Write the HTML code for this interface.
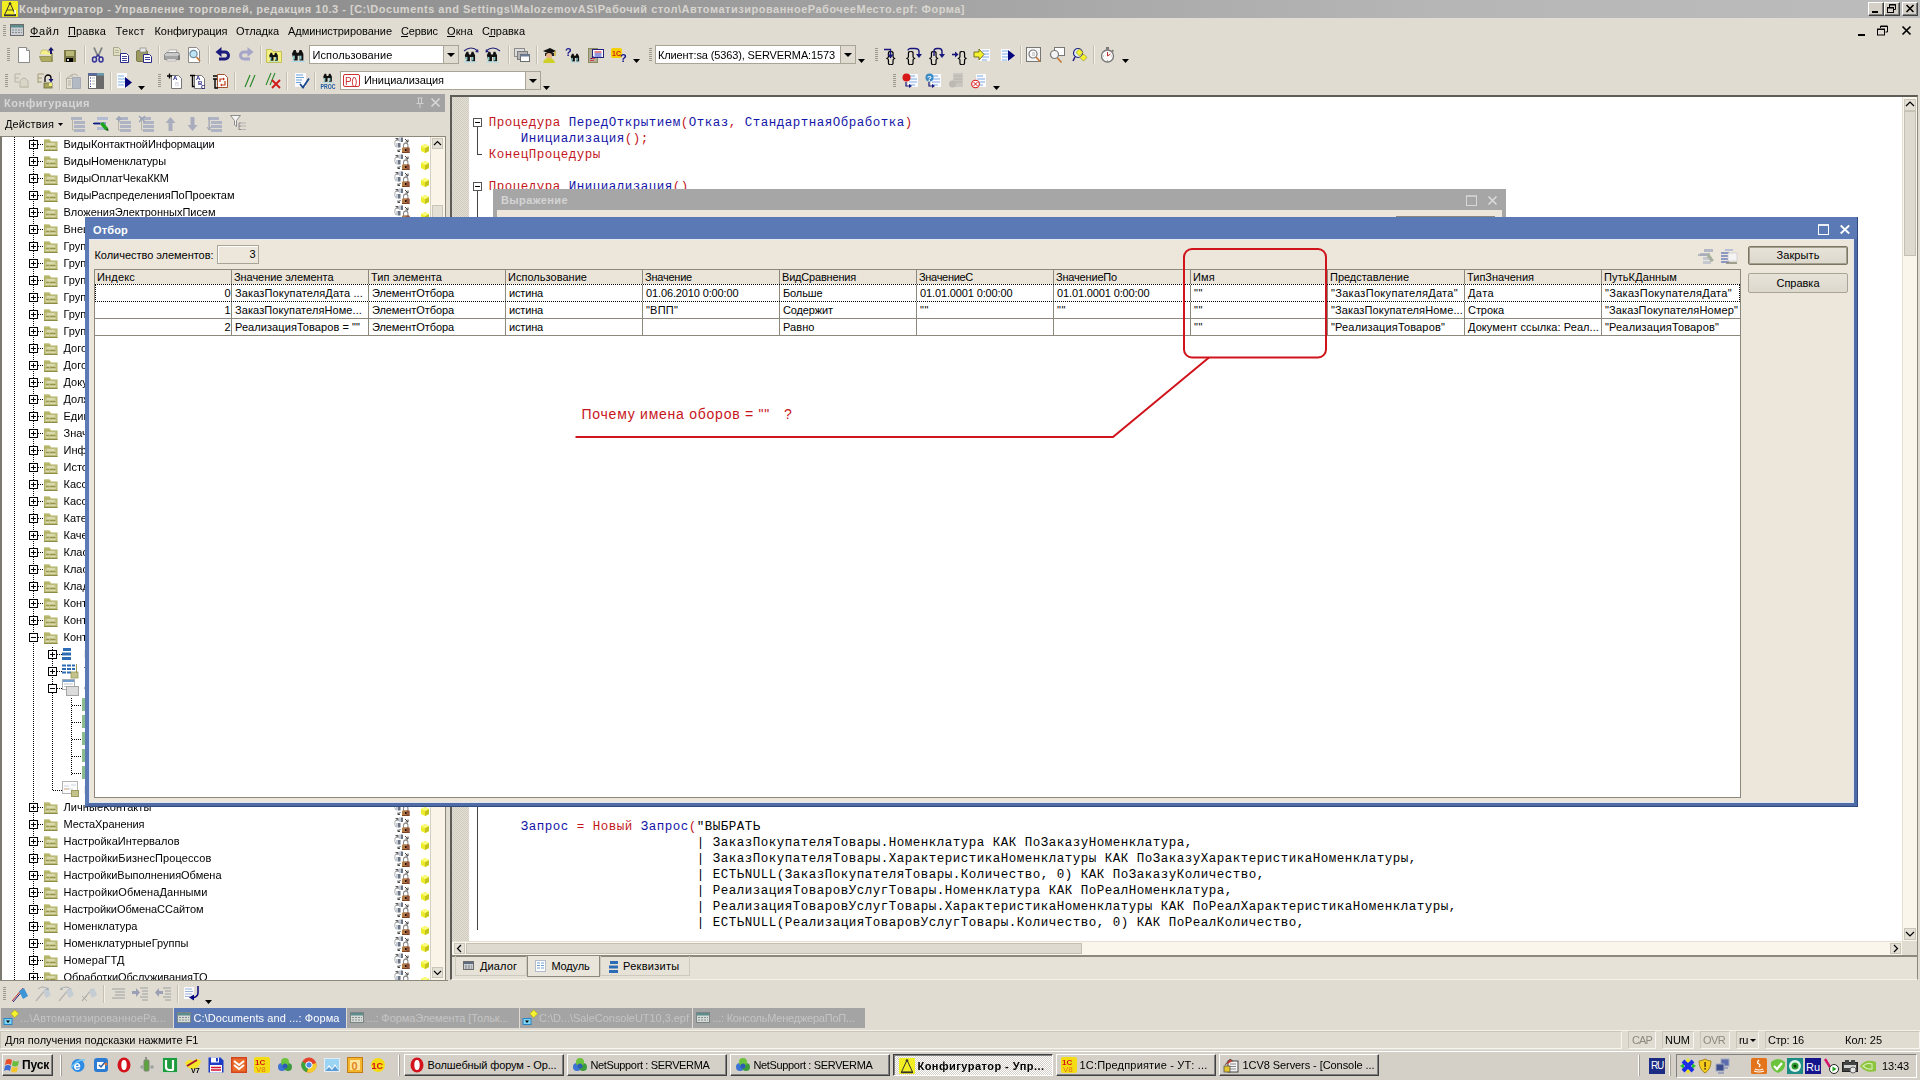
<!DOCTYPE html>
<html lang="ru"><head><meta charset="utf-8"><title>Конфигуратор</title><style>
html,body{margin:0;padding:0;}
body{width:1920px;height:1080px;overflow:hidden;position:relative;background:#e1dcd1;font-family:"Liberation Sans",sans-serif;font-size:11px;}
div,span.t,svg{position:absolute;box-sizing:border-box;}
body{opacity:0.9999;}
span.t{white-space:pre;display:block;}
svg{overflow:visible;}
.mono{font-family:"Liberation Mono",monospace;}
</style></head><body>
<div style="left:0px;top:0px;width:1920px;height:18px;background:linear-gradient(to right,#878787 0%,#9a9a9a 35%,#b6b6b6 75%,#bcbcbc 100%);"></div>
<svg style="left:2px;top:1px;" width="16" height="16" viewBox="0 0 16 16"><rect width="16" height="16" rx="1" fill="#f2ee22"/><path d="M8,2L2.500,14h11z" fill="none" stroke="#333" stroke-width="1"/><circle cx="8" cy="2.500" r="1.300" fill="#333"/><path d="M2,14.500h12" stroke="#333" stroke-width="1.400"/><path d="M5,9h6" stroke="#333" stroke-width=".8"/><rect x="12" y="9" width="2" height="4" fill="#fff" opacity=".8"/></svg>
<span class="t" style="top:1.5px;height:15px;line-height:15px;color:#d8d5cf;left:19px;font-weight:bold;letter-spacing:0.504px;">Конфигуратор - Управление торговлей, редакция 10.3 - [C:\Documents and Settings\MalozemovAS\Рабочий стол\АвтоматизированноеРабочееМесто.epf: Форма]</span>
<div style="left:1868px;top:2px;width:16px;height:14px;background:#d4d0c8;border:1px solid;border-color:#fff #404040 #404040 #fff;box-shadow:inset -1px -1px 0 #808080;"></div>
<div style="left:1872px;top:11px;width:6px;height:2px;background:#000;"></div>
<div style="left:1884px;top:2px;width:16px;height:14px;background:#d4d0c8;border:1px solid;border-color:#fff #404040 #404040 #fff;box-shadow:inset -1px -1px 0 #808080;"></div>
<svg style="left:1887px;top:4px;" width="10" height="10" viewBox="0 0 10 10"><path d="M2.500,3V0.500h6v5H6.500" fill="none" stroke="#000"/><path d="M2,1h7" stroke="#000"/><rect x="0.500" y="3.500" width="6" height="5" fill="none" stroke="#000"/><path d="M0,4h7" stroke="#000"/></svg>
<div style="left:1902px;top:2px;width:16px;height:14px;background:#d4d0c8;border:1px solid;border-color:#fff #404040 #404040 #fff;box-shadow:inset -1px -1px 0 #808080;"></div>
<svg style="left:1906px;top:5px;" width="8" height="7" viewBox="0 0 8 7"><path d="M0.500,0l7,7M7.500,0l-7,7" stroke="#000" stroke-width="1.600"/></svg>
<svg style="left:3px;top:25px;" width="3" height="12" viewBox="0 0 3 12"><rect x="0" y="0" width="3" height="1" fill="#9c988c"/><rect x="0" y="2" width="3" height="1" fill="#9c988c"/><rect x="0" y="4" width="3" height="1" fill="#9c988c"/><rect x="0" y="6" width="3" height="1" fill="#9c988c"/><rect x="0" y="8" width="3" height="1" fill="#9c988c"/><rect x="0" y="10" width="3" height="1" fill="#9c988c"/></svg>
<svg style="left:10px;top:24px;" width="14" height="12" viewBox="0 0 14 12"><rect x="0.500" y="0.500" width="13" height="11" fill="#c9cfd4" stroke="#6c6c6c"/><rect x="1" y="1" width="12" height="2.500" fill="#5c8c8c"/><path d="M2,6h10M2,8.500h10" stroke="#8c8c8c" stroke-dasharray="2 1"/></svg>
<span class="t" style="top:24px;height:15px;line-height:15px;left:30px;letter-spacing:0.588px;">Файл</span>
<div style="left:30px;top:36px;width:10px;height:1px;background:#000;"></div>
<span class="t" style="top:24px;height:15px;line-height:15px;left:68px;letter-spacing:0.138px;">Правка</span>
<div style="left:68px;top:36px;width:8px;height:1px;background:#000;"></div>
<span class="t" style="top:24px;height:15px;line-height:15px;left:115.5px;letter-spacing:0.359px;">Текст</span>
<span class="t" style="top:24px;height:15px;line-height:15px;left:154.5px;letter-spacing:-0.069px;">Конфигурация</span>
<span class="t" style="top:24px;height:15px;line-height:15px;left:236px;letter-spacing:-0.069px;">Отладка</span>
<span class="t" style="top:24px;height:15px;line-height:15px;left:288px;letter-spacing:-0.053px;">Администрирование</span>
<span class="t" style="top:24px;height:15px;line-height:15px;left:401px;letter-spacing:-0.112px;">Сервис</span>
<div style="left:401px;top:36px;width:7px;height:1px;background:#000;"></div>
<span class="t" style="top:24px;height:15px;line-height:15px;left:447px;letter-spacing:0.109px;">Окна</span>
<div style="left:447px;top:36px;width:8px;height:1px;background:#000;"></div>
<span class="t" style="top:24px;height:15px;line-height:15px;left:482px;letter-spacing:-0.022px;">Справка</span>
<div style="left:489px;top:36px;width:6px;height:1px;background:#000;"></div>
<div style="left:1858px;top:34px;width:7px;height:2px;background:#000;"></div>
<svg style="left:1877px;top:25px;" width="11" height="11" viewBox="0 0 11 11"><path d="M3.500,3V1h7v6H8.500" fill="none" stroke="#000"/><path d="M3,1.500h8" stroke="#000"/><rect x="0.500" y="4" width="7" height="6" fill="none" stroke="#000"/><path d="M0,4.500h8" stroke="#000"/></svg>
<svg style="left:1902px;top:26px;" width="9" height="9" viewBox="0 0 9 9"><path d="M0.500,0.500l8,8M8.500,0.500l-8,8" stroke="#000" stroke-width="1.700"/></svg>
<svg style="left:7px;top:48px;" width="3" height="14" viewBox="0 0 3 14"><rect x="0" y="0" width="3" height="1" fill="#9c988c"/><rect x="0" y="2" width="3" height="1" fill="#9c988c"/><rect x="0" y="4" width="3" height="1" fill="#9c988c"/><rect x="0" y="6" width="3" height="1" fill="#9c988c"/><rect x="0" y="8" width="3" height="1" fill="#9c988c"/><rect x="0" y="10" width="3" height="1" fill="#9c988c"/><rect x="0" y="12" width="3" height="1" fill="#9c988c"/></svg>
<svg style="left:16px;top:47px;" width="16" height="16" viewBox="0 0 16 16"><path d="M2.5,0.5h8l3,3v12h-11z" fill="#fff" stroke="#8a8a8a"/><path d="M10.5,0.5v3h3" fill="#eee" stroke="#8a8a8a"/></svg>
<svg style="left:39px;top:47px;" width="16" height="16" viewBox="0 0 16 16"><path d="M1,7l2,-4h5l1,2h3v3" fill="#f4f08a" stroke="#b9b56a" stroke-width=".8"/><path d="M0.5,9.5h11l2,5h-11z" fill="#b0ac62" stroke="#8d8a4a" stroke-width=".8"/><path d="M13,14V6" stroke="#8d8a4a" stroke-width="1.5"/><path d="M12,7V2" stroke="#16166e" stroke-width="2"/><path d="M9,3.5l3,-3.5l3,3.5z" fill="#16166e"/></svg>
<svg style="left:63px;top:47px;" width="16" height="16" viewBox="0 0 16 16"><rect x="1" y="3" width="12" height="12" fill="#7c7a48"/><rect x="3" y="4" width="8" height="5" fill="#b9b877"/><rect x="3" y="11" width="7" height="4" fill="#000"/><rect x="4" y="12" width="2" height="2" fill="#ddd"/></svg>
<svg style="left:90px;top:47px;" width="16" height="16" viewBox="0 0 16 16"><path d="M4,0.5l4,9M12,0.5l-4,9" stroke="#7d8080" stroke-width="1.8" fill="none"/><ellipse cx="4.5" cy="12.5" rx="2" ry="2.5" fill="none" stroke="#33339c" stroke-width="1.5"/><ellipse cx="11" cy="12.5" rx="2" ry="2.5" fill="none" stroke="#33339c" stroke-width="1.5"/><path d="M6,10l2,-2l2,2" stroke="#33339c" stroke-width="1.4" fill="none"/></svg>
<svg style="left:113px;top:47px;" width="16" height="16" viewBox="0 0 16 16"><path d="M0.5,0.5h5l2,2v6h-7z" fill="#e0dfc4" stroke="#a9a88a"/><path d="M2,3.5h4M2,5.5h4" stroke="#a9a88a" stroke-width=".8"/><path d="M7.5,6.5h6l2,2v7h-8z" fill="#fff" stroke="#2a2a8a"/><path d="M9,9.5h5M9,11.5h5M9,13.5h5" stroke="#2a2a8a" stroke-width=".9"/></svg>
<svg style="left:136px;top:47px;" width="16" height="16" viewBox="0 0 16 16"><rect x="0.5" y="3.5" width="11" height="11" rx="1.5" fill="#9c9a62" stroke="#7c7a48"/><rect x="4" y="1" width="6" height="4" fill="#e8e8e8" stroke="#888" stroke-width=".7"/><path d="M7.5,7.5h6l2,2v6h-8z" fill="#fff" stroke="#2a2a8a"/><path d="M9,10.5h5M9,12.5h5" stroke="#2a2a8a" stroke-width=".9"/></svg>
<svg style="left:164px;top:47px;" width="16" height="16" viewBox="0 0 16 16"><path d="M3,6l2,-3h8l-1,3z" fill="#fff" stroke="#999" stroke-width=".7"/><path d="M0.5,7.5l2,-2h12l1,2v5h-15z" fill="#c9c9c9" stroke="#8c8c8c"/><rect x="1" y="9" width="13" height="3" fill="#a4a4a4"/><path d="M14,8l2,1.5v3l-2,1" fill="#777"/><rect x="3" y="12" width="9" height="2" fill="#eee" stroke="#999" stroke-width=".5"/></svg>
<svg style="left:187px;top:47px;" width="16" height="16" viewBox="0 0 16 16"><path d="M1.5,0.5h8l3,3v12h-11z" fill="#fff" stroke="#8a8a8a"/><circle cx="6.5" cy="7" r="3.6" fill="#bfe4f4" stroke="#6a8ea6" stroke-width="1.2"/><path d="M9.5,10l3.5,4" stroke="#c87a3a" stroke-width="1.8"/></svg>
<svg style="left:215px;top:47px;" width="16" height="16" viewBox="0 0 16 16"><path d="M5,5h5a3.5,3.5 0 0 1 0,7h-6" fill="none" stroke="#1c1c7c" stroke-width="3"/><path d="M0.5,5l6,-5v10z" fill="#1c1c7c"/></svg>
<svg style="left:238px;top:47px;" width="16" height="16" viewBox="0 0 16 16"><path d="M11,5h-5a3.5,3.5 0 0 0 0,7h6" fill="none" stroke="#a6a6c8" stroke-width="3"/><path d="M15.5,5l-6,-5v10z" fill="#a6a6c8"/></svg>
<svg style="left:266px;top:47px;" width="16" height="16" viewBox="0 0 16 16"><path d="M0.5,2.5h5l1.5,2h8.5v11h-15z" fill="#f5f17e" stroke="#c2be5a"/><g transform="translate(2.5,5) scale(0.72)"><path d="M1,5l2,-4h2l1,3h2l1,-3h2l2,4v7h-4v-5h-2v5h-4z" fill="#111"/><rect x="2" y="7" width="2" height="4" fill="#8cc"/><rect x="9" y="7" width="2" height="4" fill="#8cc"/><path d="M0,13h15" stroke="#9de" stroke-width="1"/></g></svg>
<svg style="left:290px;top:47px;" width="16" height="16" viewBox="0 0 16 16"><g transform="translate(1,2) scale(0.95)"><path d="M1,5l2,-4h2l1,3h2l1,-3h2l2,4v7h-4v-5h-2v5h-4z" fill="#111"/><rect x="2" y="7" width="2" height="4" fill="#8cc"/><rect x="9" y="7" width="2" height="4" fill="#8cc"/><path d="M0,13h15" stroke="#9de" stroke-width="1"/></g></svg>
<svg style="left:463px;top:47px;" width="16" height="16" viewBox="0 0 16 16"><g transform="translate(1,4) scale(0.85)"><path d="M1,5l2,-4h2l1,3h2l1,-3h2l2,4v7h-4v-5h-2v5h-4z" fill="#111"/><rect x="2" y="7" width="2" height="4" fill="#8cc"/><rect x="9" y="7" width="2" height="4" fill="#8cc"/><path d="M0,13h15" stroke="#9de" stroke-width="1"/></g><path d="M1,4q7,-6 14,0" fill="none" stroke="#23237c" stroke-width="1.1"/><path d="M15.5,5.5l-3.5,-0.5l3,-3z" fill="#23237c"/></svg>
<svg style="left:485px;top:47px;" width="16" height="16" viewBox="0 0 16 16"><g transform="translate(1,4) scale(0.85)"><path d="M1,5l2,-4h2l1,3h2l1,-3h2l2,4v7h-4v-5h-2v5h-4z" fill="#111"/><rect x="2" y="7" width="2" height="4" fill="#8cc"/><rect x="9" y="7" width="2" height="4" fill="#8cc"/><path d="M0,13h15" stroke="#9de" stroke-width="1"/></g><path d="M1,4q7,-6 14,0" fill="none" stroke="#23237c" stroke-width="1.1"/><path d="M0.5,5.5l3.5,-0.5l-3,-3z" fill="#23237c"/></svg>
<svg style="left:514px;top:47px;" width="16" height="16" viewBox="0 0 16 16"><rect x="0.5" y="1.5" width="10" height="8" fill="#dcdcdc" stroke="#8c8c8c"/><rect x="3.5" y="4.5" width="10" height="8" fill="#b4b4b4" stroke="#7c7c7c"/><rect x="6.5" y="7.5" width="9" height="7" fill="#fff" stroke="#6c6c6c"/><rect x="6.5" y="7.5" width="9" height="2" fill="#6c7c9c"/></svg>
<svg style="left:541px;top:47px;" width="16" height="16" viewBox="0 0 16 16"><path d="M2,4l7,-3l6,3l-6,3z" fill="#111"/><path d="M4,6v3h9v-3" fill="#222"/><circle cx="8" cy="9" r="3" fill="#e8b48a"/><path d="M2,16q1,-5 6,-5q5,0 6,5z" fill="#cfcf2a"/><path d="M14,4v5" stroke="#c8a000" stroke-width="1"/></svg>
<svg style="left:565px;top:47px;" width="16" height="16" viewBox="0 0 16 16"><text x="0" y="9" font-size="11" font-weight="bold" font-family="Liberation Sans,sans-serif" fill="#16168c">?</text><g transform="translate(5,6) scale(0.7)"><path d="M1,5l2,-4h2l1,3h2l1,-3h2l2,4v7h-4v-5h-2v5h-4z" fill="#111"/><rect x="2" y="7" width="2" height="4" fill="#8cc"/><rect x="9" y="7" width="2" height="4" fill="#8cc"/><path d="M0,13h15" stroke="#9de" stroke-width="1"/></g></svg>
<svg style="left:588px;top:47px;" width="16" height="16" viewBox="0 0 16 16"><rect x="0.500" y="1.500" width="9" height="14" fill="#b0ae94" stroke="#8c8a5c"/><path d="M2,11.500h5M2,13.500h4" stroke="#e04060" stroke-width="1"/><rect x="4.500" y="2.500" width="11" height="8" fill="#fff" stroke="#23237c"/><path d="M6.500,5h7" stroke="#d02030" stroke-width="1.100"/><path d="M6.500,7h7M6.500,9h7" stroke="#2030c0" stroke-width="1"/><path d="M3,12l2.500,-2.500" stroke="#23237c"/></svg>
<svg style="left:611px;top:47px;" width="16" height="16" viewBox="0 0 16 16"><rect x="0" y="1" width="11" height="10" rx="2" fill="#f6d000"/><text x="1" y="9" font-size="7" font-weight="bold" font-family="Liberation Sans,sans-serif" fill="#d02010">1C</text><text x="9" y="15" font-size="11" font-weight="bold" font-family="Liberation Sans,sans-serif" fill="#16168c">?</text></svg>
<svg style="left:84px;top:46px;" width="2" height="18" viewBox="0 0 2 18"><rect x="0" y="0" width="1" height="18" fill="#c4bfb2"/><rect x="1" y="0" width="1" height="18" fill="#f4f1ea"/></svg>
<svg style="left:158px;top:46px;" width="2" height="18" viewBox="0 0 2 18"><rect x="0" y="0" width="1" height="18" fill="#c4bfb2"/><rect x="1" y="0" width="1" height="18" fill="#f4f1ea"/></svg>
<svg style="left:208px;top:46px;" width="2" height="18" viewBox="0 0 2 18"><rect x="0" y="0" width="1" height="18" fill="#c4bfb2"/><rect x="1" y="0" width="1" height="18" fill="#f4f1ea"/></svg>
<svg style="left:260px;top:46px;" width="2" height="18" viewBox="0 0 2 18"><rect x="0" y="0" width="1" height="18" fill="#c4bfb2"/><rect x="1" y="0" width="1" height="18" fill="#f4f1ea"/></svg>
<svg style="left:508px;top:46px;" width="2" height="18" viewBox="0 0 2 18"><rect x="0" y="0" width="1" height="18" fill="#c4bfb2"/><rect x="1" y="0" width="1" height="18" fill="#f4f1ea"/></svg>
<svg style="left:536px;top:46px;" width="2" height="18" viewBox="0 0 2 18"><rect x="0" y="0" width="1" height="18" fill="#c4bfb2"/><rect x="1" y="0" width="1" height="18" fill="#f4f1ea"/></svg>
<div style="left:309px;top:45px;width:150px;height:19px;background:#fff;border:1px solid #a9a596;"></div>
<div style="left:443px;top:46px;width:15px;height:17px;background:#e1dcd1;border-left:1px solid #a9a596;"></div>
<svg style="left:447px;top:52.5px;" width="8" height="4" viewBox="0 0 8 4"><polygon points="0,0 8,0 4.0,4" fill="#000"/></svg>
<span class="t" style="top:47.5px;height:15px;line-height:15px;left:312.5px;letter-spacing:0.107px;">Использование</span>
<svg style="left:633px;top:59px;" width="7" height="4" viewBox="0 0 7 4"><polygon points="0,0 7,0 3.5,4" fill="#000"/></svg>
<svg style="left:649px;top:48px;" width="3" height="14" viewBox="0 0 3 14"><rect x="0" y="0" width="3" height="1" fill="#9c988c"/><rect x="0" y="2" width="3" height="1" fill="#9c988c"/><rect x="0" y="4" width="3" height="1" fill="#9c988c"/><rect x="0" y="6" width="3" height="1" fill="#9c988c"/><rect x="0" y="8" width="3" height="1" fill="#9c988c"/><rect x="0" y="10" width="3" height="1" fill="#9c988c"/><rect x="0" y="12" width="3" height="1" fill="#9c988c"/></svg>
<div style="left:655px;top:45px;width:201px;height:19px;background:#fff;border:1px solid #a9a596;"></div>
<div style="left:840px;top:46px;width:15px;height:17px;background:#e1dcd1;border-left:1px solid #a9a596;"></div>
<svg style="left:844px;top:52.5px;" width="8" height="4" viewBox="0 0 8 4"><polygon points="0,0 8,0 4.0,4" fill="#000"/></svg>
<span class="t" style="top:47.5px;height:15px;line-height:15px;left:658px;letter-spacing:-0.126px;">Клиент:sa (5363), SERVERMA:1573</span>
<svg style="left:858px;top:59px;" width="7" height="4" viewBox="0 0 7 4"><polygon points="0,0 7,0 3.5,4" fill="#000"/></svg>
<svg style="left:875px;top:48px;" width="3" height="14" viewBox="0 0 3 14"><rect x="0" y="0" width="3" height="1" fill="#9c988c"/><rect x="0" y="2" width="3" height="1" fill="#9c988c"/><rect x="0" y="4" width="3" height="1" fill="#9c988c"/><rect x="0" y="6" width="3" height="1" fill="#9c988c"/><rect x="0" y="8" width="3" height="1" fill="#9c988c"/><rect x="0" y="10" width="3" height="1" fill="#9c988c"/><rect x="0" y="12" width="3" height="1" fill="#9c988c"/></svg>
<svg style="left:883px;top:47px;" width="16" height="16" viewBox="0 0 16 16"><text x="3" y="14.500" font-size="15" font-family="Liberation Sans,sans-serif" fill="#000" letter-spacing="-0.500">{}</text><path d="M1,2.500h6.500v6" fill="none" stroke="#16167c" stroke-width="1.400"/><path d="M4.500,7.500h6l-3,4z" fill="#16167c"/></svg>
<svg style="left:906px;top:47px;" width="16" height="16" viewBox="0 0 16 16"><text x="0" y="14.500" font-size="15" font-family="Liberation Sans,sans-serif" fill="#000" letter-spacing="-0.500">{}</text><path d="M2,3.500q0,-2 3,-2h4q4,0 4,3v3" fill="none" stroke="#16167c" stroke-width="1.400"/><path d="M10,7h6l-3,4z" fill="#16167c"/></svg>
<svg style="left:929px;top:47px;" width="16" height="16" viewBox="0 0 16 16"><text x="0" y="14.500" font-size="15" font-family="Liberation Sans,sans-serif" fill="#000" letter-spacing="-0.500">{}</text><path d="M5,9v-5q0,-2.500 3,-2.500h2q3,0 3,3v3" fill="none" stroke="#16167c" stroke-width="1.400"/><path d="M10,7h6l-3,4z" fill="#16167c"/></svg>
<svg style="left:952px;top:47px;" width="16" height="16" viewBox="0 0 16 16"><text x="5.5" y="14.500" font-size="15" font-family="Liberation Sans,sans-serif" fill="#000" letter-spacing="-0.500">{}</text><path d="M0,7.500h4" stroke="#16167c" stroke-width="1.600"/><path d="M3,4.500l3.500,3l-3.500,3z" fill="#16167c"/></svg>
<svg style="left:974px;top:47px;" width="16" height="16" viewBox="0 0 16 16"><rect x="5" y="2" width="11" height="12" fill="#fbfbff"/><path d="M8,4h7M8,7h7M8,10h7M8,13h5" stroke="#7cace4" stroke-width="1.100"/><path d="M0,5h5v-3l5,5.500l-5,5.500v-3h-5z" fill="#f6f230" stroke="#55550a" stroke-width=".8"/></svg>
<svg style="left:1000px;top:47px;" width="16" height="16" viewBox="0 0 16 16"><rect x="1" y="2" width="9" height="12" fill="#fbfbff"/><path d="M2,4h6M2,7h7M2,10h7M2,13h5" stroke="#7cace4" stroke-width="1.100"/><path d="M8,3l7,5.500l-7,5.500z" fill="#06067c"/></svg>
<svg style="left:1026px;top:47px;" width="16" height="16" viewBox="0 0 16 16"><rect x="0.500" y="0.500" width="14" height="14" fill="#f4f4f4" stroke="#777"/><circle cx="7" cy="7" r="4" fill="#fff" stroke="#777" stroke-width="1.200"/><path d="M6,6h3M6,8h3" stroke="#999" stroke-width=".8"/><path d="M10,10l4,4.500" stroke="#c87a3a" stroke-width="1.800"/></svg>
<svg style="left:1049px;top:47px;" width="16" height="16" viewBox="0 0 16 16"><rect x="5.500" y="0.500" width="10" height="8" fill="#fff" stroke="#777"/><circle cx="5.500" cy="7.500" r="4" fill="#f4f4f4" stroke="#777" stroke-width="1.200"/><path d="M8.500,11l4,4.500" stroke="#c87a3a" stroke-width="1.800"/></svg>
<svg style="left:1072px;top:47px;" width="16" height="16" viewBox="0 0 16 16"><circle cx="6" cy="6" r="4.500" fill="#e0f0f8" stroke="#23237c" stroke-width="1.200"/><rect x="5" y="3" width="5" height="5" fill="#f6f230" stroke="#8a8a1a" stroke-width=".6" transform="rotate(45 7.500 5.500)"/><rect x="9" y="8" width="5" height="5" fill="#f6f230" stroke="#8a8a1a" stroke-width=".6" transform="rotate(45 11.500 10.500)"/><path d="M3,10l-2,4" stroke="#23237c" stroke-width="1.500"/></svg>
<svg style="left:1100px;top:47px;" width="16" height="16" viewBox="0 0 16 16"><circle cx="7.500" cy="9" r="6" fill="#fbfbfb" stroke="#777" stroke-width="1.300"/><rect x="6" y="0" width="3" height="2.500" fill="#777"/><path d="M12,3l1.500,1.500" stroke="#777" stroke-width="1.500"/><path d="M7.500,9v-4M7.500,9l3,-2" stroke="#c03030" stroke-width="1"/><path d="M3,9h1M11,9h1M7.500,13v1" stroke="#aaa"/></svg>
<svg style="left:1020px;top:46px;" width="2" height="18" viewBox="0 0 2 18"><rect x="0" y="0" width="1" height="18" fill="#c4bfb2"/><rect x="1" y="0" width="1" height="18" fill="#f4f1ea"/></svg>
<svg style="left:1093px;top:46px;" width="2" height="18" viewBox="0 0 2 18"><rect x="0" y="0" width="1" height="18" fill="#c4bfb2"/><rect x="1" y="0" width="1" height="18" fill="#f4f1ea"/></svg>
<svg style="left:1122px;top:59px;" width="7" height="4" viewBox="0 0 7 4"><polygon points="0,0 7,0 3.5,4" fill="#000"/></svg>
<svg style="left:5px;top:74px;" width="3" height="14" viewBox="0 0 3 14"><rect x="0" y="0" width="3" height="1" fill="#9c988c"/><rect x="0" y="2" width="3" height="1" fill="#9c988c"/><rect x="0" y="4" width="3" height="1" fill="#9c988c"/><rect x="0" y="6" width="3" height="1" fill="#9c988c"/><rect x="0" y="8" width="3" height="1" fill="#9c988c"/><rect x="0" y="10" width="3" height="1" fill="#9c988c"/><rect x="0" y="12" width="3" height="1" fill="#9c988c"/></svg>
<svg style="left:14px;top:73px;" width="16" height="16" viewBox="0 0 16 16"><path d="M1,1h6M1,1v8M1,5h4M1,9h4" stroke="#b9b5a6" fill="none"/><path d="M6,8q4,-6 8,0v6h-8z" fill="#d9d6c8" stroke="#b9b5a6"/><path d="M5,13h9l1,2h-9z" fill="#c6c3b0"/></svg>
<svg style="left:37px;top:73px;" width="16" height="16" viewBox="0 0 16 16"><path d="M1,1h6M1,1v9M1,5h4M1,9h4" stroke="#a29e70" fill="none"/><path d="M8,9v-4a3,3 0 0 1 6,0v2" fill="none" stroke="#000" stroke-width="1.3"/><path d="M11.5,6h5l-2.500,3.500z" fill="#16167c"/><rect x="7" y="10" width="8" height="5" fill="#a6a45c" stroke="#6c6a3a" stroke-width=".8"/><rect x="12" y="10" width="3" height="3" fill="#f2ee7a"/></svg>
<svg style="left:65px;top:73px;" width="16" height="16" viewBox="0 0 16 16"><path d="M2,5l3,-2h3" stroke="#b4b0a2" fill="none"/><path d="M5,3q4,-4 8,0" stroke="#b4b0a2" fill="none"/><rect x="1.500" y="5.500" width="6" height="10" fill="#e4e1d6" stroke="#b4b0a2"/><path d="M3,8h3M3,10h3M3,12h3" stroke="#b4b0a2"/><path d="M7.500,4.500h8v11h-8z" fill="#b3bac4" stroke="#a5aab4"/></svg>
<svg style="left:88px;top:73px;" width="16" height="16" viewBox="0 0 16 16"><rect x="0" y="0" width="16" height="16" fill="#6a6a6a"/><rect x="0" y="0" width="16" height="2.500" fill="#5a6a9c"/><rect x="9" y="0" width="7" height="2.500" fill="#6a9cac"/><rect x="1" y="3" width="7" height="12" fill="#fff"/><path d="M2,5h1M2,8h1M2,11h1M2,13.500h1" stroke="#16167c" stroke-width="1"/><path d="M4,5h3M4,8h3M4,11h3" stroke="#bbb" stroke-width="1"/></svg>
<svg style="left:117px;top:73px;" width="16" height="16" viewBox="0 0 16 16"><rect x="0" y="0" width="10" height="15" fill="#fbfbff"/><path d="M1,3h6M1,6h7M1,9h7M1,12h6" stroke="#7cb4e4" stroke-width="1.200"/><path d="M8,4l7,5.500l-7,5.500z" fill="#06067c"/></svg>
<svg style="left:167px;top:73px;" width="16" height="16" viewBox="0 0 16 16"><path d="M4.500,2.500h7l3,3v10h-10z" fill="#fff" stroke="#777"/><path d="M0,3h5M2.500,0.500v5" stroke="#000" stroke-width="1.400"/><text x="6" y="7" font-size="6" font-weight="bold" font-family="Liberation Sans,sans-serif" fill="#16167c">A</text><text x="8" y="13" font-size="6" font-family="Liberation Sans,sans-serif" fill="#c4c4d4">B</text></svg>
<svg style="left:190px;top:73px;" width="16" height="16" viewBox="0 0 16 16"><path d="M4.500,2.500h7l3,3v10h-10z" fill="#fff" stroke="#777"/><path d="M0,2.500h5M2.500,2.500v11h2" stroke="#000" stroke-width="1.400" fill="none"/><text x="6" y="7" font-size="6" font-weight="bold" font-family="Liberation Sans,sans-serif" fill="#16167c">A</text><text x="8" y="12" font-size="6" font-weight="bold" font-family="Liberation Sans,sans-serif" fill="#16167c">B</text><text x="11" y="16" font-size="6" font-weight="bold" font-family="Liberation Sans,sans-serif" fill="#16167c">C</text></svg>
<svg style="left:213px;top:73px;" width="16" height="16" viewBox="0 0 16 16"><path d="M4.500,1.500h7l3,3v10h-10z" fill="#fff" stroke="#a0522d"/><path d="M0,3h4M0,6h4M2,6v9h3" stroke="#000" stroke-width="1.400" fill="none"/><path d="M7,9v-3h4M12,8v4h-4" stroke="#c03a1a" stroke-width="1.200" fill="none"/><path d="M10,4.500l2,1.500l-2,1.500zM9,10.500l-2,1.500l2,1.500z" fill="#c03a1a"/></svg>
<svg style="left:243px;top:73px;" width="16" height="16" viewBox="0 0 16 16"><path d="M2,14l5,-12M7,14l5,-12" stroke="#2a8a2a" stroke-width="1.200"/></svg>
<svg style="left:265px;top:73px;" width="16" height="16" viewBox="0 0 16 16"><path d="M1,12l5,-12M5,12l5,-12" stroke="#2a8a2a" stroke-width="1.100"/><path d="M7,7l8,8M15,7l-8,8" stroke="#d01818" stroke-width="1.800"/></svg>
<svg style="left:294px;top:73px;" width="16" height="16" viewBox="0 0 16 16"><rect x="1" y="0" width="11" height="14" fill="#fbfbff"/><path d="M2,2h7M2,4.500h8M2,7h6M2,9.500h5" stroke="#6ca4d4" stroke-width="1.100"/><path d="M6,11l3,3.500l6,-9" stroke="#16468c" stroke-width="1.800" fill="none"/></svg>
<svg style="left:320px;top:73px;" width="16" height="16" viewBox="0 0 16 16"><g transform="translate(2.5,0) scale(0.72)"><path d="M1,5l2,-4h2l1,3h2l1,-3h2l2,4v7h-4v-5h-2v5h-4z" fill="#111"/><rect x="2" y="7" width="2" height="4" fill="#8cc"/><rect x="9" y="7" width="2" height="4" fill="#8cc"/><path d="M0,13h15" stroke="#9de" stroke-width="1"/></g><text x="0.500" y="16" font-size="7" font-weight="bold" font-family="Liberation Sans,sans-serif" fill="#1c5aa4" textLength="15" lengthAdjust="spacingAndGlyphs">PROC</text></svg>
<svg style="left:59px;top:72px;" width="2" height="18" viewBox="0 0 2 18"><rect x="0" y="0" width="1" height="18" fill="#c4bfb2"/><rect x="1" y="0" width="1" height="18" fill="#f4f1ea"/></svg>
<svg style="left:110px;top:72px;" width="2" height="18" viewBox="0 0 2 18"><rect x="0" y="0" width="1" height="18" fill="#c4bfb2"/><rect x="1" y="0" width="1" height="18" fill="#f4f1ea"/></svg>
<svg style="left:234px;top:72px;" width="2" height="18" viewBox="0 0 2 18"><rect x="0" y="0" width="1" height="18" fill="#c4bfb2"/><rect x="1" y="0" width="1" height="18" fill="#f4f1ea"/></svg>
<svg style="left:286px;top:72px;" width="2" height="18" viewBox="0 0 2 18"><rect x="0" y="0" width="1" height="18" fill="#c4bfb2"/><rect x="1" y="0" width="1" height="18" fill="#f4f1ea"/></svg>
<svg style="left:314px;top:72px;" width="2" height="18" viewBox="0 0 2 18"><rect x="0" y="0" width="1" height="18" fill="#c4bfb2"/><rect x="1" y="0" width="1" height="18" fill="#f4f1ea"/></svg>
<svg style="left:138px;top:86px;" width="7" height="4" viewBox="0 0 7 4"><polygon points="0,0 7,0 3.5,4" fill="#000"/></svg>
<svg style="left:158px;top:74px;" width="3" height="14" viewBox="0 0 3 14"><rect x="0" y="0" width="3" height="1" fill="#9c988c"/><rect x="0" y="2" width="3" height="1" fill="#9c988c"/><rect x="0" y="4" width="3" height="1" fill="#9c988c"/><rect x="0" y="6" width="3" height="1" fill="#9c988c"/><rect x="0" y="8" width="3" height="1" fill="#9c988c"/><rect x="0" y="10" width="3" height="1" fill="#9c988c"/><rect x="0" y="12" width="3" height="1" fill="#9c988c"/></svg>
<div style="left:340px;top:71px;width:201px;height:19px;background:#fff;border:1px solid #a9a596;"></div>
<div style="left:525px;top:72px;width:15px;height:17px;background:#e1dcd1;border-left:1px solid #a9a596;"></div>
<svg style="left:529px;top:78.5px;" width="8" height="4" viewBox="0 0 8 4"><polygon points="0,0 8,0 4.0,4" fill="#000"/></svg>
<svg style="left:343px;top:74px;" width="17" height="13" viewBox="0 0 17 13"><rect x="0.500" y="0.500" width="16" height="12" rx="1.500" fill="#fff" stroke="#d03030"/><text x="2" y="10.500" font-size="10" font-family="Liberation Sans,sans-serif" fill="#d03030" letter-spacing="-0.500">P()</text></svg>
<span class="t" style="top:73px;height:15px;line-height:15px;left:364px;letter-spacing:-0.064px;">Инициализация</span>
<svg style="left:543px;top:86px;" width="7" height="4" viewBox="0 0 7 4"><polygon points="0,0 7,0 3.5,4" fill="#000"/></svg>
<svg style="left:893px;top:74px;" width="3" height="14" viewBox="0 0 3 14"><rect x="0" y="0" width="3" height="1" fill="#9c988c"/><rect x="0" y="2" width="3" height="1" fill="#9c988c"/><rect x="0" y="4" width="3" height="1" fill="#9c988c"/><rect x="0" y="6" width="3" height="1" fill="#9c988c"/><rect x="0" y="8" width="3" height="1" fill="#9c988c"/><rect x="0" y="10" width="3" height="1" fill="#9c988c"/><rect x="0" y="12" width="3" height="1" fill="#9c988c"/></svg>
<svg style="left:902px;top:73px;" width="16" height="16" viewBox="0 0 16 16"><rect x="6" y="1" width="10" height="13" fill="#fbfbff"/><path d="M7,3h6M7,6h8M7,9h8M7,12h6" stroke="#7cace4" stroke-width="1.100"/><circle cx="4.500" cy="4.500" r="4" fill="#d81818"/><path d="M4,9v4h4" fill="none" stroke="#16167c" stroke-width="1.200"/><path d="M7,11l3,2l-3,2z" fill="#16167c"/></svg>
<svg style="left:925px;top:73px;" width="16" height="16" viewBox="0 0 16 16"><rect x="6" y="1" width="10" height="13" fill="#fbfbff"/><path d="M7,3h6M7,6h8M7,9h8M7,12h6" stroke="#7cace4" stroke-width="1.100"/><circle cx="4.500" cy="4.500" r="4" fill="#3a8ac4"/><text x="2" y="8" font-size="8" font-weight="bold" font-family="Liberation Sans,sans-serif" fill="#fff">?</text><path d="M4,9v4h4" fill="none" stroke="#16167c" stroke-width="1.200"/><path d="M7,11l3,2l-3,2z" fill="#16167c"/></svg>
<svg style="left:948px;top:73px;" width="16" height="16" viewBox="0 0 16 16"><rect x="5" y="0" width="10" height="14" fill="#c9c7c0"/><path d="M6,3h8M6,6h8M6,9h8" stroke="#b4b2aa"/><circle cx="4.500" cy="11" r="3.500" fill="#bcbab2"/></svg>
<svg style="left:971px;top:73px;" width="16" height="16" viewBox="0 0 16 16"><rect x="5" y="1" width="10" height="13" fill="#fbfbff"/><path d="M6,3h6M6,6h8M6,9h8M6,12h6" stroke="#7cace4" stroke-width="1.100"/><circle cx="4.500" cy="11" r="3.800" fill="#fff" stroke="#d81818" stroke-width="1.100"/><path d="M2.500,9l4,4M6.500,9l-4,4" stroke="#d81818" stroke-width="1"/></svg>
<svg style="left:993px;top:86px;" width="7" height="4" viewBox="0 0 7 4"><polygon points="0,0 7,0 3.5,4" fill="#000"/></svg>
<div style="left:0px;top:94px;width:445px;height:18px;background:#a3a3a3;"></div>
<span class="t" style="top:95.5px;height:15px;line-height:15px;color:#d6d6d6;left:4px;font-weight:bold;letter-spacing:0.516px;">Конфигурация</span>
<svg style="left:416px;top:97px;" width="8" height="11" viewBox="0 0 8 11"><path d="M1.500,1h5M2.500,1v5M5.500,1v5M0.500,6.500h7M4,7v4" stroke="#d0d0d0" fill="none"/></svg>
<svg style="left:431px;top:98px;" width="9" height="9" viewBox="0 0 9 9"><path d="M0.500,0.500l8,8M8.500,0.500l-8,8" stroke="#d8d8d8" stroke-width="1.600"/></svg>
<span class="t" style="top:116.5px;height:15px;line-height:15px;left:5px;letter-spacing:0.100px;">Действия</span>
<svg style="left:58px;top:122.5px;" width="5" height="3" viewBox="0 0 5 3"><polygon points="0,0 5,0 2.5,3" fill="#000"/></svg>
<svg style="left:70px;top:116px;" width="16" height="16" viewBox="0 0 16 16"><rect x="1" y="1" width="11" height="3" fill="#aeb4c4"/><rect x="4" y="5" width="11" height="3" fill="#aeb4c4"/><rect x="4" y="9" width="11" height="3" fill="#aeb4c4"/><rect x="4" y="13" width="11" height="3" fill="#aeb4c4"/><path d="M2.500,4v10h2" stroke="#b8b4a8" fill="none"/></svg>
<svg style="left:93px;top:116px;" width="16" height="16" viewBox="0 0 16 16"><rect x="4" y="1" width="11" height="3" fill="#b4bcd4"/><rect x="1" y="6" width="12" height="3" fill="#8c9cc4"/><rect x="4" y="11" width="8" height="3" fill="#b4bcd4"/><path d="M0,7.500h7" stroke="#16167c" stroke-width="1.200"/><path d="M7,8l5,6l3,-2l-5,-6z" fill="#1ca41c"/><path d="M12,14l3,-2l0.500,3z" fill="#0a5a0a"/></svg>
<svg style="left:116px;top:116px;" width="16" height="16" viewBox="0 0 16 16"><rect x="1" y="1" width="11" height="3" fill="#aeb4c4"/><rect x="4" y="5" width="11" height="3" fill="#aeb4c4"/><rect x="4" y="9" width="11" height="3" fill="#aeb4c4"/><rect x="4" y="13" width="11" height="3" fill="#aeb4c4"/><path d="M2.500,4v10h2" stroke="#b8b4a8" fill="none"/><path d="M0,3h6M3,0v6" stroke="#9ca4b8" stroke-width="1.400"/></svg>
<svg style="left:139px;top:116px;" width="16" height="16" viewBox="0 0 16 16"><rect x="1" y="1" width="11" height="3" fill="#aeb4c4"/><rect x="4" y="5" width="11" height="3" fill="#aeb4c4"/><rect x="4" y="9" width="11" height="3" fill="#aeb4c4"/><rect x="4" y="13" width="11" height="3" fill="#aeb4c4"/><path d="M2.500,4v10h2" stroke="#b8b4a8" fill="none"/><path d="M0,0l6,6M6,0l-6,6" stroke="#9ca4b8" stroke-width="1.400"/></svg>
<svg style="left:163px;top:116px;" width="16" height="16" viewBox="0 0 16 16"><path d="M7.500,1l5,6h-3v8h-4v-8h-3z" fill="#a8acbc"/></svg>
<svg style="left:185px;top:116px;" width="16" height="16" viewBox="0 0 16 16"><path d="M7.500,15l5,-6h-3v-8h-4v8h-3z" fill="#a8acbc"/></svg>
<svg style="left:207px;top:116px;" width="16" height="16" viewBox="0 0 16 16"><rect x="1" y="1" width="11" height="3" fill="#aeb4c4"/><rect x="4" y="5" width="11" height="3" fill="#aeb4c4"/><rect x="4" y="9" width="11" height="3" fill="#aeb4c4"/><rect x="4" y="13" width="11" height="3" fill="#aeb4c4"/><path d="M2.500,4v10h2" stroke="#b8b4a8" fill="none"/><path d="M2,2v12M0,11l2,3l2,-3" stroke="#9ca4b8" fill="none"/></svg>
<svg style="left:230px;top:115px;" width="16" height="16" viewBox="0 0 16 16"><path d="M0.500,0.500h10l-4,5v6l-2,-1.500v-4.500z" fill="#f4f4f4" stroke="#8c8c8c"/><path d="M9,8h2M9,8v7M9,11h2M9,14.500h2" stroke="#8c8c8c" fill="none"/><path d="M11,8h5M11,11h5M11,14.500h5" stroke="#b4b4b4"/></svg>
<div style="left:0px;top:136px;width:446px;height:845px;background:#fff;border:1px solid #8c897c;border-left:2px solid #7c7a70;"></div>
<div style="left:430px;top:137px;width:15px;height:843px;background:#faf3e8;border-left:1px solid #d4d0c4;"></div>
<div style="left:432px;top:138px;width:11px;height:11px;background:#e4e0d6;border:1px solid #c9c5b8;"></div>
<svg style="left:432px;top:138px;" width="11" height="11" viewBox="0 0 11 11"><path d="M2,7l3.500,-3.500l3.500,3.500" fill="none" stroke="#000" stroke-width="1.100"/></svg>
<div style="left:432px;top:967px;width:11px;height:11px;background:#e4e0d6;border:1px solid #c9c5b8;"></div>
<svg style="left:432px;top:967px;" width="11" height="11" viewBox="0 0 11 11"><path d="M2,4l3.500,3.500l3.500,-3.500" fill="none" stroke="#000" stroke-width="1.100"/></svg>
<div style="left:432px;top:205px;width:11px;height:14px;background:#e4e0d6;border:1px solid #c9c5b8;"></div>
<div style="left:14px;top:137px;width:1px;height:843px;background:repeating-linear-gradient(to bottom,#000 0 1px,transparent 1px 2px);"></div>
<div style="left:33px;top:137px;width:1px;height:843px;background:repeating-linear-gradient(to bottom,#000 0 1px,transparent 1px 2px);"></div>
<div style="left:38px;top:144px;width:6px;height:1px;background:repeating-linear-gradient(to right,#000 0 1px,transparent 1px 2px);"></div>
<svg style="left:29px;top:140px;" width="9" height="9" viewBox="0 0 9 9"><rect x="0.500" y="0.500" width="8" height="8" fill="#fff" stroke="#000"/><path d="M2,4.500h5" stroke="#000"/><path d="M4.500,2v5" stroke="#000"/></svg>
<svg style="left:44px;top:139px;" width="14" height="12" viewBox="0 0 14 12"><path d="M0,0.500h5.500l1.500,2h6.500v9.500h-13.500z" fill="#b0b064"/><path d="M0.500,1h5l1.500,2" fill="none" stroke="#c4c47c" stroke-width="1"/><rect x="1" y="3.500" width="11.500" height="7" fill="#c6c68a"/><path d="M3,5h7.500" stroke="#e8e8cc" stroke-width="1.200"/><path d="M2,7.500h3M6,7.500h5.500" stroke="#94944c" stroke-width="1"/><path d="M2,9.500h3M6,9.500h5.500" stroke="#dcdcb4" stroke-width="1"/><path d="M0,11.500h13.500" stroke="#8c8c44" stroke-width="1"/></svg>
<span class="t" style="top:136.9px;height:15px;line-height:15px;left:63.5px;letter-spacing:-0.096px;">ВидыКонтактнойИнформации</span>
<svg style="left:394px;top:137px;" width="16" height="16" viewBox="0 0 16 16"><path d="M1,4.500l3,-3M1.500,1.500h2.500v2.500" stroke="#555" stroke-width="1" fill="none"/><path d="M1,5q-1,2.500 1,5" stroke="#9a9a9a" stroke-width=".8" fill="none"/><rect x="5" y="0.500" width="2" height="4.500" fill="#c4ccd8"/><rect x="7" y="0.500" width="2" height="4.500" fill="#6c7484"/><path d="M11,2l3,3M14,2.500v2.500h-2.500" stroke="#444" stroke-width="1" fill="none"/><rect x="2" y="6" width="2" height="4.500" fill="#c4ccd8"/><rect x="4" y="6" width="2.500" height="4.500" fill="#6c7484"/><path d="M4,14.500l2.500,-2.500M4,12.500v2h2" stroke="#444" stroke-width="1" fill="none"/><path d="M9.500,11v-2.700a2.200,2.200 0 0 1 4.400,0v2.700z" fill="#fff" stroke="#8c8c8c" stroke-width="1.100"/><rect x="8" y="10.500" width="7.500" height="5.500" rx=".8" fill="#b47c44"/><rect x="12.500" y="10.500" width="3" height="5.500" rx=".8" fill="#94543a"/><rect x="8" y="15" width="7.500" height="1" fill="#7c4428"/><rect x="11" y="12" width="1.500" height="2" fill="#1a0c04"/></svg>
<svg style="left:421px;top:144px;" width="8" height="9" viewBox="0 0 8 9"><path d="M0,2l4,-2l4,2v5l-4,2l-4,-2z" fill="#ecec2c"/><path d="M4,4v5l4,-2v-5z" fill="#c4c41c"/><path d="M0,2l4,2l4,-2l-4,-2z" fill="#fcfc7c"/></svg>
<div style="left:38px;top:161px;width:6px;height:1px;background:repeating-linear-gradient(to right,#000 0 1px,transparent 1px 2px);"></div>
<svg style="left:29px;top:157px;" width="9" height="9" viewBox="0 0 9 9"><rect x="0.500" y="0.500" width="8" height="8" fill="#fff" stroke="#000"/><path d="M2,4.500h5" stroke="#000"/><path d="M4.500,2v5" stroke="#000"/></svg>
<svg style="left:44px;top:156px;" width="14" height="12" viewBox="0 0 14 12"><path d="M0,0.500h5.500l1.500,2h6.500v9.500h-13.500z" fill="#b0b064"/><path d="M0.500,1h5l1.500,2" fill="none" stroke="#c4c47c" stroke-width="1"/><rect x="1" y="3.500" width="11.500" height="7" fill="#c6c68a"/><path d="M3,5h7.500" stroke="#e8e8cc" stroke-width="1.200"/><path d="M2,7.500h3M6,7.500h5.500" stroke="#94944c" stroke-width="1"/><path d="M2,9.500h3M6,9.500h5.500" stroke="#dcdcb4" stroke-width="1"/><path d="M0,11.500h13.500" stroke="#8c8c44" stroke-width="1"/></svg>
<span class="t" style="top:153.9px;height:15px;line-height:15px;left:63.5px;letter-spacing:-0.058px;">ВидыНоменклатуры</span>
<svg style="left:394px;top:154px;" width="16" height="16" viewBox="0 0 16 16"><path d="M1,4.500l3,-3M1.500,1.500h2.500v2.500" stroke="#555" stroke-width="1" fill="none"/><path d="M1,5q-1,2.500 1,5" stroke="#9a9a9a" stroke-width=".8" fill="none"/><rect x="5" y="0.500" width="2" height="4.500" fill="#c4ccd8"/><rect x="7" y="0.500" width="2" height="4.500" fill="#6c7484"/><path d="M11,2l3,3M14,2.500v2.500h-2.500" stroke="#444" stroke-width="1" fill="none"/><rect x="2" y="6" width="2" height="4.500" fill="#c4ccd8"/><rect x="4" y="6" width="2.500" height="4.500" fill="#6c7484"/><path d="M4,14.500l2.500,-2.500M4,12.500v2h2" stroke="#444" stroke-width="1" fill="none"/><path d="M9.500,11v-2.700a2.200,2.200 0 0 1 4.400,0v2.700z" fill="#fff" stroke="#8c8c8c" stroke-width="1.100"/><rect x="8" y="10.500" width="7.500" height="5.500" rx=".8" fill="#b47c44"/><rect x="12.500" y="10.500" width="3" height="5.500" rx=".8" fill="#94543a"/><rect x="8" y="15" width="7.500" height="1" fill="#7c4428"/><rect x="11" y="12" width="1.500" height="2" fill="#1a0c04"/></svg>
<svg style="left:421px;top:161px;" width="8" height="9" viewBox="0 0 8 9"><path d="M0,2l4,-2l4,2v5l-4,2l-4,-2z" fill="#ecec2c"/><path d="M4,4v5l4,-2v-5z" fill="#c4c41c"/><path d="M0,2l4,2l4,-2l-4,-2z" fill="#fcfc7c"/></svg>
<div style="left:38px;top:178px;width:6px;height:1px;background:repeating-linear-gradient(to right,#000 0 1px,transparent 1px 2px);"></div>
<svg style="left:29px;top:174px;" width="9" height="9" viewBox="0 0 9 9"><rect x="0.500" y="0.500" width="8" height="8" fill="#fff" stroke="#000"/><path d="M2,4.500h5" stroke="#000"/><path d="M4.500,2v5" stroke="#000"/></svg>
<svg style="left:44px;top:173px;" width="14" height="12" viewBox="0 0 14 12"><path d="M0,0.500h5.500l1.500,2h6.500v9.500h-13.500z" fill="#b0b064"/><path d="M0.500,1h5l1.500,2" fill="none" stroke="#c4c47c" stroke-width="1"/><rect x="1" y="3.500" width="11.500" height="7" fill="#c6c68a"/><path d="M3,5h7.500" stroke="#e8e8cc" stroke-width="1.200"/><path d="M2,7.500h3M6,7.500h5.500" stroke="#94944c" stroke-width="1"/><path d="M2,9.500h3M6,9.500h5.500" stroke="#dcdcb4" stroke-width="1"/><path d="M0,11.500h13.500" stroke="#8c8c44" stroke-width="1"/></svg>
<span class="t" style="top:170.9px;height:15px;line-height:15px;left:63.5px;letter-spacing:-0.048px;">ВидыОплатЧекаККМ</span>
<svg style="left:394px;top:171px;" width="16" height="16" viewBox="0 0 16 16"><path d="M1,4.500l3,-3M1.500,1.500h2.500v2.500" stroke="#555" stroke-width="1" fill="none"/><path d="M1,5q-1,2.500 1,5" stroke="#9a9a9a" stroke-width=".8" fill="none"/><rect x="5" y="0.500" width="2" height="4.500" fill="#c4ccd8"/><rect x="7" y="0.500" width="2" height="4.500" fill="#6c7484"/><path d="M11,2l3,3M14,2.500v2.500h-2.500" stroke="#444" stroke-width="1" fill="none"/><rect x="2" y="6" width="2" height="4.500" fill="#c4ccd8"/><rect x="4" y="6" width="2.500" height="4.500" fill="#6c7484"/><path d="M4,14.500l2.500,-2.500M4,12.500v2h2" stroke="#444" stroke-width="1" fill="none"/><path d="M9.500,11v-2.700a2.200,2.200 0 0 1 4.400,0v2.700z" fill="#fff" stroke="#8c8c8c" stroke-width="1.100"/><rect x="8" y="10.500" width="7.500" height="5.500" rx=".8" fill="#b47c44"/><rect x="12.500" y="10.500" width="3" height="5.500" rx=".8" fill="#94543a"/><rect x="8" y="15" width="7.500" height="1" fill="#7c4428"/><rect x="11" y="12" width="1.500" height="2" fill="#1a0c04"/></svg>
<svg style="left:421px;top:178px;" width="8" height="9" viewBox="0 0 8 9"><path d="M0,2l4,-2l4,2v5l-4,2l-4,-2z" fill="#ecec2c"/><path d="M4,4v5l4,-2v-5z" fill="#c4c41c"/><path d="M0,2l4,2l4,-2l-4,-2z" fill="#fcfc7c"/></svg>
<div style="left:38px;top:195px;width:6px;height:1px;background:repeating-linear-gradient(to right,#000 0 1px,transparent 1px 2px);"></div>
<svg style="left:29px;top:191px;" width="9" height="9" viewBox="0 0 9 9"><rect x="0.500" y="0.500" width="8" height="8" fill="#fff" stroke="#000"/><path d="M2,4.500h5" stroke="#000"/><path d="M4.500,2v5" stroke="#000"/></svg>
<svg style="left:44px;top:190px;" width="14" height="12" viewBox="0 0 14 12"><path d="M0,0.500h5.500l1.500,2h6.500v9.500h-13.500z" fill="#b0b064"/><path d="M0.500,1h5l1.500,2" fill="none" stroke="#c4c47c" stroke-width="1"/><rect x="1" y="3.500" width="11.500" height="7" fill="#c6c68a"/><path d="M3,5h7.500" stroke="#e8e8cc" stroke-width="1.200"/><path d="M2,7.500h3M6,7.500h5.500" stroke="#94944c" stroke-width="1"/><path d="M2,9.500h3M6,9.500h5.500" stroke="#dcdcb4" stroke-width="1"/><path d="M0,11.500h13.500" stroke="#8c8c44" stroke-width="1"/></svg>
<span class="t" style="top:187.9px;height:15px;line-height:15px;left:63.5px;letter-spacing:-0.002px;">ВидыРаспределенияПоПроектам</span>
<svg style="left:394px;top:188px;" width="16" height="16" viewBox="0 0 16 16"><path d="M1,4.500l3,-3M1.500,1.500h2.500v2.500" stroke="#555" stroke-width="1" fill="none"/><path d="M1,5q-1,2.500 1,5" stroke="#9a9a9a" stroke-width=".8" fill="none"/><rect x="5" y="0.500" width="2" height="4.500" fill="#c4ccd8"/><rect x="7" y="0.500" width="2" height="4.500" fill="#6c7484"/><path d="M11,2l3,3M14,2.500v2.500h-2.500" stroke="#444" stroke-width="1" fill="none"/><rect x="2" y="6" width="2" height="4.500" fill="#c4ccd8"/><rect x="4" y="6" width="2.500" height="4.500" fill="#6c7484"/><path d="M4,14.500l2.500,-2.500M4,12.500v2h2" stroke="#444" stroke-width="1" fill="none"/><path d="M9.500,11v-2.700a2.200,2.200 0 0 1 4.400,0v2.700z" fill="#fff" stroke="#8c8c8c" stroke-width="1.100"/><rect x="8" y="10.500" width="7.500" height="5.500" rx=".8" fill="#b47c44"/><rect x="12.500" y="10.500" width="3" height="5.500" rx=".8" fill="#94543a"/><rect x="8" y="15" width="7.500" height="1" fill="#7c4428"/><rect x="11" y="12" width="1.500" height="2" fill="#1a0c04"/></svg>
<svg style="left:421px;top:195px;" width="8" height="9" viewBox="0 0 8 9"><path d="M0,2l4,-2l4,2v5l-4,2l-4,-2z" fill="#ecec2c"/><path d="M4,4v5l4,-2v-5z" fill="#c4c41c"/><path d="M0,2l4,2l4,-2l-4,-2z" fill="#fcfc7c"/></svg>
<div style="left:38px;top:212px;width:6px;height:1px;background:repeating-linear-gradient(to right,#000 0 1px,transparent 1px 2px);"></div>
<svg style="left:29px;top:208px;" width="9" height="9" viewBox="0 0 9 9"><rect x="0.500" y="0.500" width="8" height="8" fill="#fff" stroke="#000"/><path d="M2,4.500h5" stroke="#000"/><path d="M4.500,2v5" stroke="#000"/></svg>
<svg style="left:44px;top:207px;" width="14" height="12" viewBox="0 0 14 12"><path d="M0,0.500h5.500l1.500,2h6.500v9.500h-13.500z" fill="#b0b064"/><path d="M0.500,1h5l1.500,2" fill="none" stroke="#c4c47c" stroke-width="1"/><rect x="1" y="3.500" width="11.500" height="7" fill="#c6c68a"/><path d="M3,5h7.500" stroke="#e8e8cc" stroke-width="1.200"/><path d="M2,7.500h3M6,7.500h5.500" stroke="#94944c" stroke-width="1"/><path d="M2,9.500h3M6,9.500h5.500" stroke="#dcdcb4" stroke-width="1"/><path d="M0,11.500h13.500" stroke="#8c8c44" stroke-width="1"/></svg>
<span class="t" style="top:204.9px;height:15px;line-height:15px;left:63.5px;letter-spacing:-0.025px;">ВложенияЭлектронныхПисем</span>
<svg style="left:394px;top:205px;" width="16" height="16" viewBox="0 0 16 16"><path d="M1,4.500l3,-3M1.500,1.500h2.500v2.500" stroke="#555" stroke-width="1" fill="none"/><path d="M1,5q-1,2.500 1,5" stroke="#9a9a9a" stroke-width=".8" fill="none"/><rect x="5" y="0.500" width="2" height="4.500" fill="#c4ccd8"/><rect x="7" y="0.500" width="2" height="4.500" fill="#6c7484"/><path d="M11,2l3,3M14,2.500v2.500h-2.500" stroke="#444" stroke-width="1" fill="none"/><rect x="2" y="6" width="2" height="4.500" fill="#c4ccd8"/><rect x="4" y="6" width="2.500" height="4.500" fill="#6c7484"/><path d="M4,14.500l2.500,-2.500M4,12.500v2h2" stroke="#444" stroke-width="1" fill="none"/><path d="M9.500,11v-2.700a2.200,2.200 0 0 1 4.400,0v2.700z" fill="#fff" stroke="#8c8c8c" stroke-width="1.100"/><rect x="8" y="10.500" width="7.500" height="5.500" rx=".8" fill="#b47c44"/><rect x="12.500" y="10.500" width="3" height="5.500" rx=".8" fill="#94543a"/><rect x="8" y="15" width="7.500" height="1" fill="#7c4428"/><rect x="11" y="12" width="1.500" height="2" fill="#1a0c04"/></svg>
<svg style="left:421px;top:212px;" width="8" height="9" viewBox="0 0 8 9"><path d="M0,2l4,-2l4,2v5l-4,2l-4,-2z" fill="#ecec2c"/><path d="M4,4v5l4,-2v-5z" fill="#c4c41c"/><path d="M0,2l4,2l4,-2l-4,-2z" fill="#fcfc7c"/></svg>
<div style="left:38px;top:229px;width:6px;height:1px;background:repeating-linear-gradient(to right,#000 0 1px,transparent 1px 2px);"></div>
<svg style="left:29px;top:225px;" width="9" height="9" viewBox="0 0 9 9"><rect x="0.500" y="0.500" width="8" height="8" fill="#fff" stroke="#000"/><path d="M2,4.500h5" stroke="#000"/><path d="M4.500,2v5" stroke="#000"/></svg>
<svg style="left:44px;top:224px;" width="14" height="12" viewBox="0 0 14 12"><path d="M0,0.500h5.500l1.500,2h6.500v9.500h-13.500z" fill="#b0b064"/><path d="M0.500,1h5l1.500,2" fill="none" stroke="#c4c47c" stroke-width="1"/><rect x="1" y="3.500" width="11.500" height="7" fill="#c6c68a"/><path d="M3,5h7.500" stroke="#e8e8cc" stroke-width="1.200"/><path d="M2,7.500h3M6,7.500h5.500" stroke="#94944c" stroke-width="1"/><path d="M2,9.500h3M6,9.500h5.500" stroke="#dcdcb4" stroke-width="1"/><path d="M0,11.500h13.500" stroke="#8c8c44" stroke-width="1"/></svg>
<span class="t" style="top:221.9px;height:15px;line-height:15px;left:63.5px;">ВнешниеОбработки</span>
<svg style="left:394px;top:222px;" width="16" height="16" viewBox="0 0 16 16"><path d="M1,4.500l3,-3M1.500,1.500h2.500v2.500" stroke="#555" stroke-width="1" fill="none"/><path d="M1,5q-1,2.500 1,5" stroke="#9a9a9a" stroke-width=".8" fill="none"/><rect x="5" y="0.500" width="2" height="4.500" fill="#c4ccd8"/><rect x="7" y="0.500" width="2" height="4.500" fill="#6c7484"/><path d="M11,2l3,3M14,2.500v2.500h-2.500" stroke="#444" stroke-width="1" fill="none"/><rect x="2" y="6" width="2" height="4.500" fill="#c4ccd8"/><rect x="4" y="6" width="2.500" height="4.500" fill="#6c7484"/><path d="M4,14.500l2.500,-2.500M4,12.500v2h2" stroke="#444" stroke-width="1" fill="none"/><path d="M9.500,11v-2.700a2.200,2.200 0 0 1 4.400,0v2.700z" fill="#fff" stroke="#8c8c8c" stroke-width="1.100"/><rect x="8" y="10.500" width="7.500" height="5.500" rx=".8" fill="#b47c44"/><rect x="12.500" y="10.500" width="3" height="5.500" rx=".8" fill="#94543a"/><rect x="8" y="15" width="7.500" height="1" fill="#7c4428"/><rect x="11" y="12" width="1.500" height="2" fill="#1a0c04"/></svg>
<svg style="left:421px;top:229px;" width="8" height="9" viewBox="0 0 8 9"><path d="M0,2l4,-2l4,2v5l-4,2l-4,-2z" fill="#ecec2c"/><path d="M4,4v5l4,-2v-5z" fill="#c4c41c"/><path d="M0,2l4,2l4,-2l-4,-2z" fill="#fcfc7c"/></svg>
<div style="left:38px;top:246px;width:6px;height:1px;background:repeating-linear-gradient(to right,#000 0 1px,transparent 1px 2px);"></div>
<svg style="left:29px;top:242px;" width="9" height="9" viewBox="0 0 9 9"><rect x="0.500" y="0.500" width="8" height="8" fill="#fff" stroke="#000"/><path d="M2,4.500h5" stroke="#000"/><path d="M4.500,2v5" stroke="#000"/></svg>
<svg style="left:44px;top:241px;" width="14" height="12" viewBox="0 0 14 12"><path d="M0,0.500h5.500l1.500,2h6.500v9.500h-13.500z" fill="#b0b064"/><path d="M0.500,1h5l1.500,2" fill="none" stroke="#c4c47c" stroke-width="1"/><rect x="1" y="3.500" width="11.500" height="7" fill="#c6c68a"/><path d="M3,5h7.500" stroke="#e8e8cc" stroke-width="1.200"/><path d="M2,7.500h3M6,7.500h5.500" stroke="#94944c" stroke-width="1"/><path d="M2,9.500h3M6,9.500h5.500" stroke="#dcdcb4" stroke-width="1"/><path d="M0,11.500h13.500" stroke="#8c8c44" stroke-width="1"/></svg>
<span class="t" style="top:238.9px;height:15px;line-height:15px;left:63.5px;">ГруппыДоступностиСкладов</span>
<svg style="left:394px;top:239px;" width="16" height="16" viewBox="0 0 16 16"><path d="M1,4.500l3,-3M1.500,1.500h2.500v2.500" stroke="#555" stroke-width="1" fill="none"/><path d="M1,5q-1,2.500 1,5" stroke="#9a9a9a" stroke-width=".8" fill="none"/><rect x="5" y="0.500" width="2" height="4.500" fill="#c4ccd8"/><rect x="7" y="0.500" width="2" height="4.500" fill="#6c7484"/><path d="M11,2l3,3M14,2.500v2.500h-2.500" stroke="#444" stroke-width="1" fill="none"/><rect x="2" y="6" width="2" height="4.500" fill="#c4ccd8"/><rect x="4" y="6" width="2.500" height="4.500" fill="#6c7484"/><path d="M4,14.500l2.500,-2.500M4,12.500v2h2" stroke="#444" stroke-width="1" fill="none"/><path d="M9.500,11v-2.700a2.200,2.200 0 0 1 4.400,0v2.700z" fill="#fff" stroke="#8c8c8c" stroke-width="1.100"/><rect x="8" y="10.500" width="7.500" height="5.500" rx=".8" fill="#b47c44"/><rect x="12.500" y="10.500" width="3" height="5.500" rx=".8" fill="#94543a"/><rect x="8" y="15" width="7.500" height="1" fill="#7c4428"/><rect x="11" y="12" width="1.500" height="2" fill="#1a0c04"/></svg>
<svg style="left:421px;top:246px;" width="8" height="9" viewBox="0 0 8 9"><path d="M0,2l4,-2l4,2v5l-4,2l-4,-2z" fill="#ecec2c"/><path d="M4,4v5l4,-2v-5z" fill="#c4c41c"/><path d="M0,2l4,2l4,-2l-4,-2z" fill="#fcfc7c"/></svg>
<div style="left:38px;top:263px;width:6px;height:1px;background:repeating-linear-gradient(to right,#000 0 1px,transparent 1px 2px);"></div>
<svg style="left:29px;top:259px;" width="9" height="9" viewBox="0 0 9 9"><rect x="0.500" y="0.500" width="8" height="8" fill="#fff" stroke="#000"/><path d="M2,4.500h5" stroke="#000"/><path d="M4.500,2v5" stroke="#000"/></svg>
<svg style="left:44px;top:258px;" width="14" height="12" viewBox="0 0 14 12"><path d="M0,0.500h5.500l1.500,2h6.500v9.500h-13.500z" fill="#b0b064"/><path d="M0.500,1h5l1.500,2" fill="none" stroke="#c4c47c" stroke-width="1"/><rect x="1" y="3.500" width="11.500" height="7" fill="#c6c68a"/><path d="M3,5h7.500" stroke="#e8e8cc" stroke-width="1.200"/><path d="M2,7.500h3M6,7.500h5.500" stroke="#94944c" stroke-width="1"/><path d="M2,9.500h3M6,9.500h5.500" stroke="#dcdcb4" stroke-width="1"/><path d="M0,11.500h13.500" stroke="#8c8c44" stroke-width="1"/></svg>
<span class="t" style="top:255.9px;height:15px;line-height:15px;left:63.5px;">ГруппыКонтактныхЛиц</span>
<svg style="left:394px;top:256px;" width="16" height="16" viewBox="0 0 16 16"><path d="M1,4.500l3,-3M1.500,1.500h2.500v2.500" stroke="#555" stroke-width="1" fill="none"/><path d="M1,5q-1,2.500 1,5" stroke="#9a9a9a" stroke-width=".8" fill="none"/><rect x="5" y="0.500" width="2" height="4.500" fill="#c4ccd8"/><rect x="7" y="0.500" width="2" height="4.500" fill="#6c7484"/><path d="M11,2l3,3M14,2.500v2.500h-2.500" stroke="#444" stroke-width="1" fill="none"/><rect x="2" y="6" width="2" height="4.500" fill="#c4ccd8"/><rect x="4" y="6" width="2.500" height="4.500" fill="#6c7484"/><path d="M4,14.500l2.500,-2.500M4,12.500v2h2" stroke="#444" stroke-width="1" fill="none"/><path d="M9.500,11v-2.700a2.200,2.200 0 0 1 4.400,0v2.700z" fill="#fff" stroke="#8c8c8c" stroke-width="1.100"/><rect x="8" y="10.500" width="7.500" height="5.500" rx=".8" fill="#b47c44"/><rect x="12.500" y="10.500" width="3" height="5.500" rx=".8" fill="#94543a"/><rect x="8" y="15" width="7.500" height="1" fill="#7c4428"/><rect x="11" y="12" width="1.500" height="2" fill="#1a0c04"/></svg>
<svg style="left:421px;top:263px;" width="8" height="9" viewBox="0 0 8 9"><path d="M0,2l4,-2l4,2v5l-4,2l-4,-2z" fill="#ecec2c"/><path d="M4,4v5l4,-2v-5z" fill="#c4c41c"/><path d="M0,2l4,2l4,-2l-4,-2z" fill="#fcfc7c"/></svg>
<div style="left:38px;top:280px;width:6px;height:1px;background:repeating-linear-gradient(to right,#000 0 1px,transparent 1px 2px);"></div>
<svg style="left:29px;top:276px;" width="9" height="9" viewBox="0 0 9 9"><rect x="0.500" y="0.500" width="8" height="8" fill="#fff" stroke="#000"/><path d="M2,4.500h5" stroke="#000"/><path d="M4.500,2v5" stroke="#000"/></svg>
<svg style="left:44px;top:275px;" width="14" height="12" viewBox="0 0 14 12"><path d="M0,0.500h5.500l1.500,2h6.500v9.500h-13.500z" fill="#b0b064"/><path d="M0.500,1h5l1.500,2" fill="none" stroke="#c4c47c" stroke-width="1"/><rect x="1" y="3.500" width="11.500" height="7" fill="#c6c68a"/><path d="M3,5h7.500" stroke="#e8e8cc" stroke-width="1.200"/><path d="M2,7.500h3M6,7.500h5.500" stroke="#94944c" stroke-width="1"/><path d="M2,9.500h3M6,9.500h5.500" stroke="#dcdcb4" stroke-width="1"/><path d="M0,11.500h13.500" stroke="#8c8c44" stroke-width="1"/></svg>
<span class="t" style="top:272.9px;height:15px;line-height:15px;left:63.5px;">ГруппыПользователей</span>
<svg style="left:394px;top:273px;" width="16" height="16" viewBox="0 0 16 16"><path d="M1,4.500l3,-3M1.500,1.500h2.500v2.500" stroke="#555" stroke-width="1" fill="none"/><path d="M1,5q-1,2.500 1,5" stroke="#9a9a9a" stroke-width=".8" fill="none"/><rect x="5" y="0.500" width="2" height="4.500" fill="#c4ccd8"/><rect x="7" y="0.500" width="2" height="4.500" fill="#6c7484"/><path d="M11,2l3,3M14,2.500v2.500h-2.500" stroke="#444" stroke-width="1" fill="none"/><rect x="2" y="6" width="2" height="4.500" fill="#c4ccd8"/><rect x="4" y="6" width="2.500" height="4.500" fill="#6c7484"/><path d="M4,14.500l2.500,-2.500M4,12.500v2h2" stroke="#444" stroke-width="1" fill="none"/><path d="M9.500,11v-2.700a2.200,2.200 0 0 1 4.400,0v2.700z" fill="#fff" stroke="#8c8c8c" stroke-width="1.100"/><rect x="8" y="10.500" width="7.500" height="5.500" rx=".8" fill="#b47c44"/><rect x="12.500" y="10.500" width="3" height="5.500" rx=".8" fill="#94543a"/><rect x="8" y="15" width="7.500" height="1" fill="#7c4428"/><rect x="11" y="12" width="1.500" height="2" fill="#1a0c04"/></svg>
<svg style="left:421px;top:280px;" width="8" height="9" viewBox="0 0 8 9"><path d="M0,2l4,-2l4,2v5l-4,2l-4,-2z" fill="#ecec2c"/><path d="M4,4v5l4,-2v-5z" fill="#c4c41c"/><path d="M0,2l4,2l4,-2l-4,-2z" fill="#fcfc7c"/></svg>
<div style="left:38px;top:297px;width:6px;height:1px;background:repeating-linear-gradient(to right,#000 0 1px,transparent 1px 2px);"></div>
<svg style="left:29px;top:293px;" width="9" height="9" viewBox="0 0 9 9"><rect x="0.500" y="0.500" width="8" height="8" fill="#fff" stroke="#000"/><path d="M2,4.500h5" stroke="#000"/><path d="M4.500,2v5" stroke="#000"/></svg>
<svg style="left:44px;top:292px;" width="14" height="12" viewBox="0 0 14 12"><path d="M0,0.500h5.500l1.500,2h6.500v9.500h-13.500z" fill="#b0b064"/><path d="M0.500,1h5l1.500,2" fill="none" stroke="#c4c47c" stroke-width="1"/><rect x="1" y="3.500" width="11.500" height="7" fill="#c6c68a"/><path d="M3,5h7.500" stroke="#e8e8cc" stroke-width="1.200"/><path d="M2,7.500h3M6,7.500h5.500" stroke="#94944c" stroke-width="1"/><path d="M2,9.500h3M6,9.500h5.500" stroke="#dcdcb4" stroke-width="1"/><path d="M0,11.500h13.500" stroke="#8c8c44" stroke-width="1"/></svg>
<span class="t" style="top:289.9px;height:15px;line-height:15px;left:63.5px;">ГруппыПочтовыхРассылок</span>
<svg style="left:394px;top:290px;" width="16" height="16" viewBox="0 0 16 16"><path d="M1,4.500l3,-3M1.500,1.500h2.500v2.500" stroke="#555" stroke-width="1" fill="none"/><path d="M1,5q-1,2.500 1,5" stroke="#9a9a9a" stroke-width=".8" fill="none"/><rect x="5" y="0.500" width="2" height="4.500" fill="#c4ccd8"/><rect x="7" y="0.500" width="2" height="4.500" fill="#6c7484"/><path d="M11,2l3,3M14,2.500v2.500h-2.500" stroke="#444" stroke-width="1" fill="none"/><rect x="2" y="6" width="2" height="4.500" fill="#c4ccd8"/><rect x="4" y="6" width="2.500" height="4.500" fill="#6c7484"/><path d="M4,14.500l2.500,-2.500M4,12.500v2h2" stroke="#444" stroke-width="1" fill="none"/><path d="M9.500,11v-2.700a2.200,2.200 0 0 1 4.400,0v2.700z" fill="#fff" stroke="#8c8c8c" stroke-width="1.100"/><rect x="8" y="10.500" width="7.500" height="5.500" rx=".8" fill="#b47c44"/><rect x="12.500" y="10.500" width="3" height="5.500" rx=".8" fill="#94543a"/><rect x="8" y="15" width="7.500" height="1" fill="#7c4428"/><rect x="11" y="12" width="1.500" height="2" fill="#1a0c04"/></svg>
<svg style="left:421px;top:297px;" width="8" height="9" viewBox="0 0 8 9"><path d="M0,2l4,-2l4,2v5l-4,2l-4,-2z" fill="#ecec2c"/><path d="M4,4v5l4,-2v-5z" fill="#c4c41c"/><path d="M0,2l4,2l4,-2l-4,-2z" fill="#fcfc7c"/></svg>
<div style="left:38px;top:314px;width:6px;height:1px;background:repeating-linear-gradient(to right,#000 0 1px,transparent 1px 2px);"></div>
<svg style="left:29px;top:310px;" width="9" height="9" viewBox="0 0 9 9"><rect x="0.500" y="0.500" width="8" height="8" fill="#fff" stroke="#000"/><path d="M2,4.500h5" stroke="#000"/><path d="M4.500,2v5" stroke="#000"/></svg>
<svg style="left:44px;top:309px;" width="14" height="12" viewBox="0 0 14 12"><path d="M0,0.500h5.500l1.500,2h6.500v9.500h-13.500z" fill="#b0b064"/><path d="M0.500,1h5l1.500,2" fill="none" stroke="#c4c47c" stroke-width="1"/><rect x="1" y="3.500" width="11.500" height="7" fill="#c6c68a"/><path d="M3,5h7.500" stroke="#e8e8cc" stroke-width="1.200"/><path d="M2,7.500h3M6,7.500h5.500" stroke="#94944c" stroke-width="1"/><path d="M2,9.500h3M6,9.500h5.500" stroke="#dcdcb4" stroke-width="1"/><path d="M0,11.500h13.500" stroke="#8c8c44" stroke-width="1"/></svg>
<span class="t" style="top:306.9px;height:15px;line-height:15px;left:63.5px;">ГруппыСобытий</span>
<svg style="left:394px;top:307px;" width="16" height="16" viewBox="0 0 16 16"><path d="M1,4.500l3,-3M1.500,1.500h2.500v2.500" stroke="#555" stroke-width="1" fill="none"/><path d="M1,5q-1,2.500 1,5" stroke="#9a9a9a" stroke-width=".8" fill="none"/><rect x="5" y="0.500" width="2" height="4.500" fill="#c4ccd8"/><rect x="7" y="0.500" width="2" height="4.500" fill="#6c7484"/><path d="M11,2l3,3M14,2.500v2.500h-2.500" stroke="#444" stroke-width="1" fill="none"/><rect x="2" y="6" width="2" height="4.500" fill="#c4ccd8"/><rect x="4" y="6" width="2.500" height="4.500" fill="#6c7484"/><path d="M4,14.500l2.500,-2.500M4,12.500v2h2" stroke="#444" stroke-width="1" fill="none"/><path d="M9.500,11v-2.700a2.200,2.200 0 0 1 4.400,0v2.700z" fill="#fff" stroke="#8c8c8c" stroke-width="1.100"/><rect x="8" y="10.500" width="7.500" height="5.500" rx=".8" fill="#b47c44"/><rect x="12.500" y="10.500" width="3" height="5.500" rx=".8" fill="#94543a"/><rect x="8" y="15" width="7.500" height="1" fill="#7c4428"/><rect x="11" y="12" width="1.500" height="2" fill="#1a0c04"/></svg>
<svg style="left:421px;top:314px;" width="8" height="9" viewBox="0 0 8 9"><path d="M0,2l4,-2l4,2v5l-4,2l-4,-2z" fill="#ecec2c"/><path d="M4,4v5l4,-2v-5z" fill="#c4c41c"/><path d="M0,2l4,2l4,-2l-4,-2z" fill="#fcfc7c"/></svg>
<div style="left:38px;top:331px;width:6px;height:1px;background:repeating-linear-gradient(to right,#000 0 1px,transparent 1px 2px);"></div>
<svg style="left:29px;top:327px;" width="9" height="9" viewBox="0 0 9 9"><rect x="0.500" y="0.500" width="8" height="8" fill="#fff" stroke="#000"/><path d="M2,4.500h5" stroke="#000"/><path d="M4.500,2v5" stroke="#000"/></svg>
<svg style="left:44px;top:326px;" width="14" height="12" viewBox="0 0 14 12"><path d="M0,0.500h5.500l1.500,2h6.500v9.500h-13.500z" fill="#b0b064"/><path d="M0.500,1h5l1.500,2" fill="none" stroke="#c4c47c" stroke-width="1"/><rect x="1" y="3.500" width="11.500" height="7" fill="#c6c68a"/><path d="M3,5h7.500" stroke="#e8e8cc" stroke-width="1.200"/><path d="M2,7.500h3M6,7.500h5.500" stroke="#94944c" stroke-width="1"/><path d="M2,9.500h3M6,9.500h5.500" stroke="#dcdcb4" stroke-width="1"/><path d="M0,11.500h13.500" stroke="#8c8c44" stroke-width="1"/></svg>
<span class="t" style="top:323.9px;height:15px;line-height:15px;left:63.5px;">ГруппыТоргПредставителей</span>
<svg style="left:394px;top:324px;" width="16" height="16" viewBox="0 0 16 16"><path d="M1,4.500l3,-3M1.500,1.500h2.500v2.500" stroke="#555" stroke-width="1" fill="none"/><path d="M1,5q-1,2.500 1,5" stroke="#9a9a9a" stroke-width=".8" fill="none"/><rect x="5" y="0.500" width="2" height="4.500" fill="#c4ccd8"/><rect x="7" y="0.500" width="2" height="4.500" fill="#6c7484"/><path d="M11,2l3,3M14,2.500v2.500h-2.500" stroke="#444" stroke-width="1" fill="none"/><rect x="2" y="6" width="2" height="4.500" fill="#c4ccd8"/><rect x="4" y="6" width="2.500" height="4.500" fill="#6c7484"/><path d="M4,14.500l2.500,-2.500M4,12.500v2h2" stroke="#444" stroke-width="1" fill="none"/><path d="M9.500,11v-2.700a2.200,2.200 0 0 1 4.400,0v2.700z" fill="#fff" stroke="#8c8c8c" stroke-width="1.100"/><rect x="8" y="10.500" width="7.500" height="5.500" rx=".8" fill="#b47c44"/><rect x="12.500" y="10.500" width="3" height="5.500" rx=".8" fill="#94543a"/><rect x="8" y="15" width="7.500" height="1" fill="#7c4428"/><rect x="11" y="12" width="1.500" height="2" fill="#1a0c04"/></svg>
<svg style="left:421px;top:331px;" width="8" height="9" viewBox="0 0 8 9"><path d="M0,2l4,-2l4,2v5l-4,2l-4,-2z" fill="#ecec2c"/><path d="M4,4v5l4,-2v-5z" fill="#c4c41c"/><path d="M0,2l4,2l4,-2l-4,-2z" fill="#fcfc7c"/></svg>
<div style="left:38px;top:348px;width:6px;height:1px;background:repeating-linear-gradient(to right,#000 0 1px,transparent 1px 2px);"></div>
<svg style="left:29px;top:344px;" width="9" height="9" viewBox="0 0 9 9"><rect x="0.500" y="0.500" width="8" height="8" fill="#fff" stroke="#000"/><path d="M2,4.500h5" stroke="#000"/><path d="M4.500,2v5" stroke="#000"/></svg>
<svg style="left:44px;top:343px;" width="14" height="12" viewBox="0 0 14 12"><path d="M0,0.500h5.500l1.500,2h6.500v9.500h-13.500z" fill="#b0b064"/><path d="M0.500,1h5l1.500,2" fill="none" stroke="#c4c47c" stroke-width="1"/><rect x="1" y="3.500" width="11.500" height="7" fill="#c6c68a"/><path d="M3,5h7.500" stroke="#e8e8cc" stroke-width="1.200"/><path d="M2,7.500h3M6,7.500h5.500" stroke="#94944c" stroke-width="1"/><path d="M2,9.500h3M6,9.500h5.500" stroke="#dcdcb4" stroke-width="1"/><path d="M0,11.500h13.500" stroke="#8c8c44" stroke-width="1"/></svg>
<span class="t" style="top:340.9px;height:15px;line-height:15px;left:63.5px;">ДоговорыКонтрагентов</span>
<svg style="left:394px;top:341px;" width="16" height="16" viewBox="0 0 16 16"><path d="M1,4.500l3,-3M1.500,1.500h2.500v2.500" stroke="#555" stroke-width="1" fill="none"/><path d="M1,5q-1,2.500 1,5" stroke="#9a9a9a" stroke-width=".8" fill="none"/><rect x="5" y="0.500" width="2" height="4.500" fill="#c4ccd8"/><rect x="7" y="0.500" width="2" height="4.500" fill="#6c7484"/><path d="M11,2l3,3M14,2.500v2.500h-2.500" stroke="#444" stroke-width="1" fill="none"/><rect x="2" y="6" width="2" height="4.500" fill="#c4ccd8"/><rect x="4" y="6" width="2.500" height="4.500" fill="#6c7484"/><path d="M4,14.500l2.500,-2.500M4,12.500v2h2" stroke="#444" stroke-width="1" fill="none"/><path d="M9.500,11v-2.700a2.200,2.200 0 0 1 4.400,0v2.700z" fill="#fff" stroke="#8c8c8c" stroke-width="1.100"/><rect x="8" y="10.500" width="7.500" height="5.500" rx=".8" fill="#b47c44"/><rect x="12.500" y="10.500" width="3" height="5.500" rx=".8" fill="#94543a"/><rect x="8" y="15" width="7.500" height="1" fill="#7c4428"/><rect x="11" y="12" width="1.500" height="2" fill="#1a0c04"/></svg>
<svg style="left:421px;top:348px;" width="8" height="9" viewBox="0 0 8 9"><path d="M0,2l4,-2l4,2v5l-4,2l-4,-2z" fill="#ecec2c"/><path d="M4,4v5l4,-2v-5z" fill="#c4c41c"/><path d="M0,2l4,2l4,-2l-4,-2z" fill="#fcfc7c"/></svg>
<div style="left:38px;top:365px;width:6px;height:1px;background:repeating-linear-gradient(to right,#000 0 1px,transparent 1px 2px);"></div>
<svg style="left:29px;top:361px;" width="9" height="9" viewBox="0 0 9 9"><rect x="0.500" y="0.500" width="8" height="8" fill="#fff" stroke="#000"/><path d="M2,4.500h5" stroke="#000"/><path d="M4.500,2v5" stroke="#000"/></svg>
<svg style="left:44px;top:360px;" width="14" height="12" viewBox="0 0 14 12"><path d="M0,0.500h5.500l1.500,2h6.500v9.500h-13.500z" fill="#b0b064"/><path d="M0.500,1h5l1.500,2" fill="none" stroke="#c4c47c" stroke-width="1"/><rect x="1" y="3.500" width="11.500" height="7" fill="#c6c68a"/><path d="M3,5h7.500" stroke="#e8e8cc" stroke-width="1.200"/><path d="M2,7.500h3M6,7.500h5.500" stroke="#94944c" stroke-width="1"/><path d="M2,9.500h3M6,9.500h5.500" stroke="#dcdcb4" stroke-width="1"/><path d="M0,11.500h13.500" stroke="#8c8c44" stroke-width="1"/></svg>
<span class="t" style="top:357.9px;height:15px;line-height:15px;left:63.5px;">ДоговорыЭквайринга</span>
<svg style="left:394px;top:358px;" width="16" height="16" viewBox="0 0 16 16"><path d="M1,4.500l3,-3M1.500,1.500h2.500v2.500" stroke="#555" stroke-width="1" fill="none"/><path d="M1,5q-1,2.500 1,5" stroke="#9a9a9a" stroke-width=".8" fill="none"/><rect x="5" y="0.500" width="2" height="4.500" fill="#c4ccd8"/><rect x="7" y="0.500" width="2" height="4.500" fill="#6c7484"/><path d="M11,2l3,3M14,2.500v2.500h-2.500" stroke="#444" stroke-width="1" fill="none"/><rect x="2" y="6" width="2" height="4.500" fill="#c4ccd8"/><rect x="4" y="6" width="2.500" height="4.500" fill="#6c7484"/><path d="M4,14.500l2.500,-2.500M4,12.500v2h2" stroke="#444" stroke-width="1" fill="none"/><path d="M9.500,11v-2.700a2.200,2.200 0 0 1 4.400,0v2.700z" fill="#fff" stroke="#8c8c8c" stroke-width="1.100"/><rect x="8" y="10.500" width="7.500" height="5.500" rx=".8" fill="#b47c44"/><rect x="12.500" y="10.500" width="3" height="5.500" rx=".8" fill="#94543a"/><rect x="8" y="15" width="7.500" height="1" fill="#7c4428"/><rect x="11" y="12" width="1.500" height="2" fill="#1a0c04"/></svg>
<svg style="left:421px;top:365px;" width="8" height="9" viewBox="0 0 8 9"><path d="M0,2l4,-2l4,2v5l-4,2l-4,-2z" fill="#ecec2c"/><path d="M4,4v5l4,-2v-5z" fill="#c4c41c"/><path d="M0,2l4,2l4,-2l-4,-2z" fill="#fcfc7c"/></svg>
<div style="left:38px;top:382px;width:6px;height:1px;background:repeating-linear-gradient(to right,#000 0 1px,transparent 1px 2px);"></div>
<svg style="left:29px;top:378px;" width="9" height="9" viewBox="0 0 9 9"><rect x="0.500" y="0.500" width="8" height="8" fill="#fff" stroke="#000"/><path d="M2,4.500h5" stroke="#000"/><path d="M4.500,2v5" stroke="#000"/></svg>
<svg style="left:44px;top:377px;" width="14" height="12" viewBox="0 0 14 12"><path d="M0,0.500h5.500l1.500,2h6.500v9.500h-13.500z" fill="#b0b064"/><path d="M0.500,1h5l1.500,2" fill="none" stroke="#c4c47c" stroke-width="1"/><rect x="1" y="3.500" width="11.500" height="7" fill="#c6c68a"/><path d="M3,5h7.500" stroke="#e8e8cc" stroke-width="1.200"/><path d="M2,7.500h3M6,7.500h5.500" stroke="#94944c" stroke-width="1"/><path d="M2,9.500h3M6,9.500h5.500" stroke="#dcdcb4" stroke-width="1"/><path d="M0,11.500h13.500" stroke="#8c8c44" stroke-width="1"/></svg>
<span class="t" style="top:374.9px;height:15px;line-height:15px;left:63.5px;">ДокументыУдостоверяющиеЛичность</span>
<svg style="left:394px;top:375px;" width="16" height="16" viewBox="0 0 16 16"><path d="M1,4.500l3,-3M1.500,1.500h2.500v2.500" stroke="#555" stroke-width="1" fill="none"/><path d="M1,5q-1,2.500 1,5" stroke="#9a9a9a" stroke-width=".8" fill="none"/><rect x="5" y="0.500" width="2" height="4.500" fill="#c4ccd8"/><rect x="7" y="0.500" width="2" height="4.500" fill="#6c7484"/><path d="M11,2l3,3M14,2.500v2.500h-2.500" stroke="#444" stroke-width="1" fill="none"/><rect x="2" y="6" width="2" height="4.500" fill="#c4ccd8"/><rect x="4" y="6" width="2.500" height="4.500" fill="#6c7484"/><path d="M4,14.500l2.500,-2.500M4,12.500v2h2" stroke="#444" stroke-width="1" fill="none"/><path d="M9.500,11v-2.700a2.200,2.200 0 0 1 4.400,0v2.700z" fill="#fff" stroke="#8c8c8c" stroke-width="1.100"/><rect x="8" y="10.500" width="7.500" height="5.500" rx=".8" fill="#b47c44"/><rect x="12.500" y="10.500" width="3" height="5.500" rx=".8" fill="#94543a"/><rect x="8" y="15" width="7.500" height="1" fill="#7c4428"/><rect x="11" y="12" width="1.500" height="2" fill="#1a0c04"/></svg>
<svg style="left:421px;top:382px;" width="8" height="9" viewBox="0 0 8 9"><path d="M0,2l4,-2l4,2v5l-4,2l-4,-2z" fill="#ecec2c"/><path d="M4,4v5l4,-2v-5z" fill="#c4c41c"/><path d="M0,2l4,2l4,-2l-4,-2z" fill="#fcfc7c"/></svg>
<div style="left:38px;top:399px;width:6px;height:1px;background:repeating-linear-gradient(to right,#000 0 1px,transparent 1px 2px);"></div>
<svg style="left:29px;top:395px;" width="9" height="9" viewBox="0 0 9 9"><rect x="0.500" y="0.500" width="8" height="8" fill="#fff" stroke="#000"/><path d="M2,4.500h5" stroke="#000"/><path d="M4.500,2v5" stroke="#000"/></svg>
<svg style="left:44px;top:394px;" width="14" height="12" viewBox="0 0 14 12"><path d="M0,0.500h5.500l1.500,2h6.500v9.500h-13.500z" fill="#b0b064"/><path d="M0.500,1h5l1.500,2" fill="none" stroke="#c4c47c" stroke-width="1"/><rect x="1" y="3.500" width="11.500" height="7" fill="#c6c68a"/><path d="M3,5h7.500" stroke="#e8e8cc" stroke-width="1.200"/><path d="M2,7.500h3M6,7.500h5.500" stroke="#94944c" stroke-width="1"/><path d="M2,9.500h3M6,9.500h5.500" stroke="#dcdcb4" stroke-width="1"/><path d="M0,11.500h13.500" stroke="#8c8c44" stroke-width="1"/></svg>
<span class="t" style="top:391.9px;height:15px;line-height:15px;left:63.5px;">ДолжностиОрганизаций</span>
<svg style="left:394px;top:392px;" width="16" height="16" viewBox="0 0 16 16"><path d="M1,4.500l3,-3M1.500,1.500h2.500v2.500" stroke="#555" stroke-width="1" fill="none"/><path d="M1,5q-1,2.500 1,5" stroke="#9a9a9a" stroke-width=".8" fill="none"/><rect x="5" y="0.500" width="2" height="4.500" fill="#c4ccd8"/><rect x="7" y="0.500" width="2" height="4.500" fill="#6c7484"/><path d="M11,2l3,3M14,2.500v2.500h-2.500" stroke="#444" stroke-width="1" fill="none"/><rect x="2" y="6" width="2" height="4.500" fill="#c4ccd8"/><rect x="4" y="6" width="2.500" height="4.500" fill="#6c7484"/><path d="M4,14.500l2.500,-2.500M4,12.500v2h2" stroke="#444" stroke-width="1" fill="none"/><path d="M9.500,11v-2.700a2.200,2.200 0 0 1 4.400,0v2.700z" fill="#fff" stroke="#8c8c8c" stroke-width="1.100"/><rect x="8" y="10.500" width="7.500" height="5.500" rx=".8" fill="#b47c44"/><rect x="12.500" y="10.500" width="3" height="5.500" rx=".8" fill="#94543a"/><rect x="8" y="15" width="7.500" height="1" fill="#7c4428"/><rect x="11" y="12" width="1.500" height="2" fill="#1a0c04"/></svg>
<svg style="left:421px;top:399px;" width="8" height="9" viewBox="0 0 8 9"><path d="M0,2l4,-2l4,2v5l-4,2l-4,-2z" fill="#ecec2c"/><path d="M4,4v5l4,-2v-5z" fill="#c4c41c"/><path d="M0,2l4,2l4,-2l-4,-2z" fill="#fcfc7c"/></svg>
<div style="left:38px;top:416px;width:6px;height:1px;background:repeating-linear-gradient(to right,#000 0 1px,transparent 1px 2px);"></div>
<svg style="left:29px;top:412px;" width="9" height="9" viewBox="0 0 9 9"><rect x="0.500" y="0.500" width="8" height="8" fill="#fff" stroke="#000"/><path d="M2,4.500h5" stroke="#000"/><path d="M4.500,2v5" stroke="#000"/></svg>
<svg style="left:44px;top:411px;" width="14" height="12" viewBox="0 0 14 12"><path d="M0,0.500h5.500l1.500,2h6.500v9.500h-13.500z" fill="#b0b064"/><path d="M0.500,1h5l1.500,2" fill="none" stroke="#c4c47c" stroke-width="1"/><rect x="1" y="3.500" width="11.500" height="7" fill="#c6c68a"/><path d="M3,5h7.500" stroke="#e8e8cc" stroke-width="1.200"/><path d="M2,7.500h3M6,7.500h5.500" stroke="#94944c" stroke-width="1"/><path d="M2,9.500h3M6,9.500h5.500" stroke="#dcdcb4" stroke-width="1"/><path d="M0,11.500h13.500" stroke="#8c8c44" stroke-width="1"/></svg>
<span class="t" style="top:408.9px;height:15px;line-height:15px;left:63.5px;">ЕдиницыИзмерения</span>
<svg style="left:394px;top:409px;" width="16" height="16" viewBox="0 0 16 16"><path d="M1,4.500l3,-3M1.500,1.500h2.500v2.500" stroke="#555" stroke-width="1" fill="none"/><path d="M1,5q-1,2.500 1,5" stroke="#9a9a9a" stroke-width=".8" fill="none"/><rect x="5" y="0.500" width="2" height="4.500" fill="#c4ccd8"/><rect x="7" y="0.500" width="2" height="4.500" fill="#6c7484"/><path d="M11,2l3,3M14,2.500v2.500h-2.500" stroke="#444" stroke-width="1" fill="none"/><rect x="2" y="6" width="2" height="4.500" fill="#c4ccd8"/><rect x="4" y="6" width="2.500" height="4.500" fill="#6c7484"/><path d="M4,14.500l2.500,-2.500M4,12.500v2h2" stroke="#444" stroke-width="1" fill="none"/><path d="M9.500,11v-2.700a2.200,2.200 0 0 1 4.400,0v2.700z" fill="#fff" stroke="#8c8c8c" stroke-width="1.100"/><rect x="8" y="10.500" width="7.500" height="5.500" rx=".8" fill="#b47c44"/><rect x="12.500" y="10.500" width="3" height="5.500" rx=".8" fill="#94543a"/><rect x="8" y="15" width="7.500" height="1" fill="#7c4428"/><rect x="11" y="12" width="1.500" height="2" fill="#1a0c04"/></svg>
<svg style="left:421px;top:416px;" width="8" height="9" viewBox="0 0 8 9"><path d="M0,2l4,-2l4,2v5l-4,2l-4,-2z" fill="#ecec2c"/><path d="M4,4v5l4,-2v-5z" fill="#c4c41c"/><path d="M0,2l4,2l4,-2l-4,-2z" fill="#fcfc7c"/></svg>
<div style="left:38px;top:433px;width:6px;height:1px;background:repeating-linear-gradient(to right,#000 0 1px,transparent 1px 2px);"></div>
<svg style="left:29px;top:429px;" width="9" height="9" viewBox="0 0 9 9"><rect x="0.500" y="0.500" width="8" height="8" fill="#fff" stroke="#000"/><path d="M2,4.500h5" stroke="#000"/><path d="M4.500,2v5" stroke="#000"/></svg>
<svg style="left:44px;top:428px;" width="14" height="12" viewBox="0 0 14 12"><path d="M0,0.500h5.500l1.500,2h6.500v9.500h-13.500z" fill="#b0b064"/><path d="M0.500,1h5l1.500,2" fill="none" stroke="#c4c47c" stroke-width="1"/><rect x="1" y="3.500" width="11.500" height="7" fill="#c6c68a"/><path d="M3,5h7.500" stroke="#e8e8cc" stroke-width="1.200"/><path d="M2,7.500h3M6,7.500h5.500" stroke="#94944c" stroke-width="1"/><path d="M2,9.500h3M6,9.500h5.500" stroke="#dcdcb4" stroke-width="1"/><path d="M0,11.500h13.500" stroke="#8c8c44" stroke-width="1"/></svg>
<span class="t" style="top:425.9px;height:15px;line-height:15px;left:63.5px;">ЗначенияСвойствОбъектов</span>
<svg style="left:394px;top:426px;" width="16" height="16" viewBox="0 0 16 16"><path d="M1,4.500l3,-3M1.500,1.500h2.500v2.500" stroke="#555" stroke-width="1" fill="none"/><path d="M1,5q-1,2.500 1,5" stroke="#9a9a9a" stroke-width=".8" fill="none"/><rect x="5" y="0.500" width="2" height="4.500" fill="#c4ccd8"/><rect x="7" y="0.500" width="2" height="4.500" fill="#6c7484"/><path d="M11,2l3,3M14,2.500v2.500h-2.500" stroke="#444" stroke-width="1" fill="none"/><rect x="2" y="6" width="2" height="4.500" fill="#c4ccd8"/><rect x="4" y="6" width="2.500" height="4.500" fill="#6c7484"/><path d="M4,14.500l2.500,-2.500M4,12.500v2h2" stroke="#444" stroke-width="1" fill="none"/><path d="M9.500,11v-2.700a2.200,2.200 0 0 1 4.400,0v2.700z" fill="#fff" stroke="#8c8c8c" stroke-width="1.100"/><rect x="8" y="10.500" width="7.500" height="5.500" rx=".8" fill="#b47c44"/><rect x="12.500" y="10.500" width="3" height="5.500" rx=".8" fill="#94543a"/><rect x="8" y="15" width="7.500" height="1" fill="#7c4428"/><rect x="11" y="12" width="1.500" height="2" fill="#1a0c04"/></svg>
<svg style="left:421px;top:433px;" width="8" height="9" viewBox="0 0 8 9"><path d="M0,2l4,-2l4,2v5l-4,2l-4,-2z" fill="#ecec2c"/><path d="M4,4v5l4,-2v-5z" fill="#c4c41c"/><path d="M0,2l4,2l4,-2l-4,-2z" fill="#fcfc7c"/></svg>
<div style="left:38px;top:450px;width:6px;height:1px;background:repeating-linear-gradient(to right,#000 0 1px,transparent 1px 2px);"></div>
<svg style="left:29px;top:446px;" width="9" height="9" viewBox="0 0 9 9"><rect x="0.500" y="0.500" width="8" height="8" fill="#fff" stroke="#000"/><path d="M2,4.500h5" stroke="#000"/><path d="M4.500,2v5" stroke="#000"/></svg>
<svg style="left:44px;top:445px;" width="14" height="12" viewBox="0 0 14 12"><path d="M0,0.500h5.500l1.500,2h6.500v9.500h-13.500z" fill="#b0b064"/><path d="M0.500,1h5l1.500,2" fill="none" stroke="#c4c47c" stroke-width="1"/><rect x="1" y="3.500" width="11.500" height="7" fill="#c6c68a"/><path d="M3,5h7.500" stroke="#e8e8cc" stroke-width="1.200"/><path d="M2,7.500h3M6,7.500h5.500" stroke="#94944c" stroke-width="1"/><path d="M2,9.500h3M6,9.500h5.500" stroke="#dcdcb4" stroke-width="1"/><path d="M0,11.500h13.500" stroke="#8c8c44" stroke-width="1"/></svg>
<span class="t" style="top:442.9px;height:15px;line-height:15px;left:63.5px;">ИнформационныеКарты</span>
<svg style="left:394px;top:443px;" width="16" height="16" viewBox="0 0 16 16"><path d="M1,4.500l3,-3M1.500,1.500h2.500v2.500" stroke="#555" stroke-width="1" fill="none"/><path d="M1,5q-1,2.500 1,5" stroke="#9a9a9a" stroke-width=".8" fill="none"/><rect x="5" y="0.500" width="2" height="4.500" fill="#c4ccd8"/><rect x="7" y="0.500" width="2" height="4.500" fill="#6c7484"/><path d="M11,2l3,3M14,2.500v2.500h-2.500" stroke="#444" stroke-width="1" fill="none"/><rect x="2" y="6" width="2" height="4.500" fill="#c4ccd8"/><rect x="4" y="6" width="2.500" height="4.500" fill="#6c7484"/><path d="M4,14.500l2.500,-2.500M4,12.500v2h2" stroke="#444" stroke-width="1" fill="none"/><path d="M9.500,11v-2.700a2.200,2.200 0 0 1 4.400,0v2.700z" fill="#fff" stroke="#8c8c8c" stroke-width="1.100"/><rect x="8" y="10.500" width="7.500" height="5.500" rx=".8" fill="#b47c44"/><rect x="12.500" y="10.500" width="3" height="5.500" rx=".8" fill="#94543a"/><rect x="8" y="15" width="7.500" height="1" fill="#7c4428"/><rect x="11" y="12" width="1.500" height="2" fill="#1a0c04"/></svg>
<svg style="left:421px;top:450px;" width="8" height="9" viewBox="0 0 8 9"><path d="M0,2l4,-2l4,2v5l-4,2l-4,-2z" fill="#ecec2c"/><path d="M4,4v5l4,-2v-5z" fill="#c4c41c"/><path d="M0,2l4,2l4,-2l-4,-2z" fill="#fcfc7c"/></svg>
<div style="left:38px;top:467px;width:6px;height:1px;background:repeating-linear-gradient(to right,#000 0 1px,transparent 1px 2px);"></div>
<svg style="left:29px;top:463px;" width="9" height="9" viewBox="0 0 9 9"><rect x="0.500" y="0.500" width="8" height="8" fill="#fff" stroke="#000"/><path d="M2,4.500h5" stroke="#000"/><path d="M4.500,2v5" stroke="#000"/></svg>
<svg style="left:44px;top:462px;" width="14" height="12" viewBox="0 0 14 12"><path d="M0,0.500h5.500l1.500,2h6.500v9.500h-13.500z" fill="#b0b064"/><path d="M0.500,1h5l1.500,2" fill="none" stroke="#c4c47c" stroke-width="1"/><rect x="1" y="3.500" width="11.500" height="7" fill="#c6c68a"/><path d="M3,5h7.500" stroke="#e8e8cc" stroke-width="1.200"/><path d="M2,7.500h3M6,7.500h5.500" stroke="#94944c" stroke-width="1"/><path d="M2,9.500h3M6,9.500h5.500" stroke="#dcdcb4" stroke-width="1"/><path d="M0,11.500h13.500" stroke="#8c8c44" stroke-width="1"/></svg>
<span class="t" style="top:459.9px;height:15px;line-height:15px;left:63.5px;">ИсточникиИнформации</span>
<svg style="left:394px;top:460px;" width="16" height="16" viewBox="0 0 16 16"><path d="M1,4.500l3,-3M1.500,1.500h2.500v2.500" stroke="#555" stroke-width="1" fill="none"/><path d="M1,5q-1,2.500 1,5" stroke="#9a9a9a" stroke-width=".8" fill="none"/><rect x="5" y="0.500" width="2" height="4.500" fill="#c4ccd8"/><rect x="7" y="0.500" width="2" height="4.500" fill="#6c7484"/><path d="M11,2l3,3M14,2.500v2.500h-2.500" stroke="#444" stroke-width="1" fill="none"/><rect x="2" y="6" width="2" height="4.500" fill="#c4ccd8"/><rect x="4" y="6" width="2.500" height="4.500" fill="#6c7484"/><path d="M4,14.500l2.500,-2.500M4,12.500v2h2" stroke="#444" stroke-width="1" fill="none"/><path d="M9.500,11v-2.700a2.200,2.200 0 0 1 4.400,0v2.700z" fill="#fff" stroke="#8c8c8c" stroke-width="1.100"/><rect x="8" y="10.500" width="7.500" height="5.500" rx=".8" fill="#b47c44"/><rect x="12.500" y="10.500" width="3" height="5.500" rx=".8" fill="#94543a"/><rect x="8" y="15" width="7.500" height="1" fill="#7c4428"/><rect x="11" y="12" width="1.500" height="2" fill="#1a0c04"/></svg>
<svg style="left:421px;top:467px;" width="8" height="9" viewBox="0 0 8 9"><path d="M0,2l4,-2l4,2v5l-4,2l-4,-2z" fill="#ecec2c"/><path d="M4,4v5l4,-2v-5z" fill="#c4c41c"/><path d="M0,2l4,2l4,-2l-4,-2z" fill="#fcfc7c"/></svg>
<div style="left:38px;top:484px;width:6px;height:1px;background:repeating-linear-gradient(to right,#000 0 1px,transparent 1px 2px);"></div>
<svg style="left:29px;top:480px;" width="9" height="9" viewBox="0 0 9 9"><rect x="0.500" y="0.500" width="8" height="8" fill="#fff" stroke="#000"/><path d="M2,4.500h5" stroke="#000"/><path d="M4.500,2v5" stroke="#000"/></svg>
<svg style="left:44px;top:479px;" width="14" height="12" viewBox="0 0 14 12"><path d="M0,0.500h5.500l1.500,2h6.500v9.500h-13.500z" fill="#b0b064"/><path d="M0.500,1h5l1.500,2" fill="none" stroke="#c4c47c" stroke-width="1"/><rect x="1" y="3.500" width="11.500" height="7" fill="#c6c68a"/><path d="M3,5h7.500" stroke="#e8e8cc" stroke-width="1.200"/><path d="M2,7.500h3M6,7.500h5.500" stroke="#94944c" stroke-width="1"/><path d="M2,9.500h3M6,9.500h5.500" stroke="#dcdcb4" stroke-width="1"/><path d="M0,11.500h13.500" stroke="#8c8c44" stroke-width="1"/></svg>
<span class="t" style="top:476.9px;height:15px;line-height:15px;left:63.5px;">Кассы</span>
<svg style="left:394px;top:477px;" width="16" height="16" viewBox="0 0 16 16"><path d="M1,4.500l3,-3M1.500,1.500h2.500v2.500" stroke="#555" stroke-width="1" fill="none"/><path d="M1,5q-1,2.500 1,5" stroke="#9a9a9a" stroke-width=".8" fill="none"/><rect x="5" y="0.500" width="2" height="4.500" fill="#c4ccd8"/><rect x="7" y="0.500" width="2" height="4.500" fill="#6c7484"/><path d="M11,2l3,3M14,2.500v2.500h-2.500" stroke="#444" stroke-width="1" fill="none"/><rect x="2" y="6" width="2" height="4.500" fill="#c4ccd8"/><rect x="4" y="6" width="2.500" height="4.500" fill="#6c7484"/><path d="M4,14.500l2.500,-2.500M4,12.500v2h2" stroke="#444" stroke-width="1" fill="none"/><path d="M9.500,11v-2.700a2.200,2.200 0 0 1 4.400,0v2.700z" fill="#fff" stroke="#8c8c8c" stroke-width="1.100"/><rect x="8" y="10.500" width="7.500" height="5.500" rx=".8" fill="#b47c44"/><rect x="12.500" y="10.500" width="3" height="5.500" rx=".8" fill="#94543a"/><rect x="8" y="15" width="7.500" height="1" fill="#7c4428"/><rect x="11" y="12" width="1.500" height="2" fill="#1a0c04"/></svg>
<svg style="left:421px;top:484px;" width="8" height="9" viewBox="0 0 8 9"><path d="M0,2l4,-2l4,2v5l-4,2l-4,-2z" fill="#ecec2c"/><path d="M4,4v5l4,-2v-5z" fill="#c4c41c"/><path d="M0,2l4,2l4,-2l-4,-2z" fill="#fcfc7c"/></svg>
<div style="left:38px;top:501px;width:6px;height:1px;background:repeating-linear-gradient(to right,#000 0 1px,transparent 1px 2px);"></div>
<svg style="left:29px;top:497px;" width="9" height="9" viewBox="0 0 9 9"><rect x="0.500" y="0.500" width="8" height="8" fill="#fff" stroke="#000"/><path d="M2,4.500h5" stroke="#000"/><path d="M4.500,2v5" stroke="#000"/></svg>
<svg style="left:44px;top:496px;" width="14" height="12" viewBox="0 0 14 12"><path d="M0,0.500h5.500l1.500,2h6.500v9.500h-13.500z" fill="#b0b064"/><path d="M0.500,1h5l1.500,2" fill="none" stroke="#c4c47c" stroke-width="1"/><rect x="1" y="3.500" width="11.500" height="7" fill="#c6c68a"/><path d="M3,5h7.500" stroke="#e8e8cc" stroke-width="1.200"/><path d="M2,7.500h3M6,7.500h5.500" stroke="#94944c" stroke-width="1"/><path d="M2,9.500h3M6,9.500h5.500" stroke="#dcdcb4" stroke-width="1"/><path d="M0,11.500h13.500" stroke="#8c8c44" stroke-width="1"/></svg>
<span class="t" style="top:493.9px;height:15px;line-height:15px;left:63.5px;">КассыККМ</span>
<svg style="left:394px;top:494px;" width="16" height="16" viewBox="0 0 16 16"><path d="M1,4.500l3,-3M1.500,1.500h2.500v2.500" stroke="#555" stroke-width="1" fill="none"/><path d="M1,5q-1,2.500 1,5" stroke="#9a9a9a" stroke-width=".8" fill="none"/><rect x="5" y="0.500" width="2" height="4.500" fill="#c4ccd8"/><rect x="7" y="0.500" width="2" height="4.500" fill="#6c7484"/><path d="M11,2l3,3M14,2.500v2.500h-2.500" stroke="#444" stroke-width="1" fill="none"/><rect x="2" y="6" width="2" height="4.500" fill="#c4ccd8"/><rect x="4" y="6" width="2.500" height="4.500" fill="#6c7484"/><path d="M4,14.500l2.500,-2.500M4,12.500v2h2" stroke="#444" stroke-width="1" fill="none"/><path d="M9.500,11v-2.700a2.200,2.200 0 0 1 4.400,0v2.700z" fill="#fff" stroke="#8c8c8c" stroke-width="1.100"/><rect x="8" y="10.500" width="7.500" height="5.500" rx=".8" fill="#b47c44"/><rect x="12.500" y="10.500" width="3" height="5.500" rx=".8" fill="#94543a"/><rect x="8" y="15" width="7.500" height="1" fill="#7c4428"/><rect x="11" y="12" width="1.500" height="2" fill="#1a0c04"/></svg>
<svg style="left:421px;top:501px;" width="8" height="9" viewBox="0 0 8 9"><path d="M0,2l4,-2l4,2v5l-4,2l-4,-2z" fill="#ecec2c"/><path d="M4,4v5l4,-2v-5z" fill="#c4c41c"/><path d="M0,2l4,2l4,-2l-4,-2z" fill="#fcfc7c"/></svg>
<div style="left:38px;top:518px;width:6px;height:1px;background:repeating-linear-gradient(to right,#000 0 1px,transparent 1px 2px);"></div>
<svg style="left:29px;top:514px;" width="9" height="9" viewBox="0 0 9 9"><rect x="0.500" y="0.500" width="8" height="8" fill="#fff" stroke="#000"/><path d="M2,4.500h5" stroke="#000"/><path d="M4.500,2v5" stroke="#000"/></svg>
<svg style="left:44px;top:513px;" width="14" height="12" viewBox="0 0 14 12"><path d="M0,0.500h5.500l1.500,2h6.500v9.500h-13.500z" fill="#b0b064"/><path d="M0.500,1h5l1.500,2" fill="none" stroke="#c4c47c" stroke-width="1"/><rect x="1" y="3.500" width="11.500" height="7" fill="#c6c68a"/><path d="M3,5h7.500" stroke="#e8e8cc" stroke-width="1.200"/><path d="M2,7.500h3M6,7.500h5.500" stroke="#94944c" stroke-width="1"/><path d="M2,9.500h3M6,9.500h5.500" stroke="#dcdcb4" stroke-width="1"/><path d="M0,11.500h13.500" stroke="#8c8c44" stroke-width="1"/></svg>
<span class="t" style="top:510.9px;height:15px;line-height:15px;left:63.5px;">КатегорииОбъектов</span>
<svg style="left:394px;top:511px;" width="16" height="16" viewBox="0 0 16 16"><path d="M1,4.500l3,-3M1.500,1.500h2.500v2.500" stroke="#555" stroke-width="1" fill="none"/><path d="M1,5q-1,2.500 1,5" stroke="#9a9a9a" stroke-width=".8" fill="none"/><rect x="5" y="0.500" width="2" height="4.500" fill="#c4ccd8"/><rect x="7" y="0.500" width="2" height="4.500" fill="#6c7484"/><path d="M11,2l3,3M14,2.500v2.500h-2.500" stroke="#444" stroke-width="1" fill="none"/><rect x="2" y="6" width="2" height="4.500" fill="#c4ccd8"/><rect x="4" y="6" width="2.500" height="4.500" fill="#6c7484"/><path d="M4,14.500l2.500,-2.500M4,12.500v2h2" stroke="#444" stroke-width="1" fill="none"/><path d="M9.500,11v-2.700a2.200,2.200 0 0 1 4.400,0v2.700z" fill="#fff" stroke="#8c8c8c" stroke-width="1.100"/><rect x="8" y="10.500" width="7.500" height="5.500" rx=".8" fill="#b47c44"/><rect x="12.500" y="10.500" width="3" height="5.500" rx=".8" fill="#94543a"/><rect x="8" y="15" width="7.500" height="1" fill="#7c4428"/><rect x="11" y="12" width="1.500" height="2" fill="#1a0c04"/></svg>
<svg style="left:421px;top:518px;" width="8" height="9" viewBox="0 0 8 9"><path d="M0,2l4,-2l4,2v5l-4,2l-4,-2z" fill="#ecec2c"/><path d="M4,4v5l4,-2v-5z" fill="#c4c41c"/><path d="M0,2l4,2l4,-2l-4,-2z" fill="#fcfc7c"/></svg>
<div style="left:38px;top:535px;width:6px;height:1px;background:repeating-linear-gradient(to right,#000 0 1px,transparent 1px 2px);"></div>
<svg style="left:29px;top:531px;" width="9" height="9" viewBox="0 0 9 9"><rect x="0.500" y="0.500" width="8" height="8" fill="#fff" stroke="#000"/><path d="M2,4.500h5" stroke="#000"/><path d="M4.500,2v5" stroke="#000"/></svg>
<svg style="left:44px;top:530px;" width="14" height="12" viewBox="0 0 14 12"><path d="M0,0.500h5.500l1.500,2h6.500v9.500h-13.500z" fill="#b0b064"/><path d="M0.500,1h5l1.500,2" fill="none" stroke="#c4c47c" stroke-width="1"/><rect x="1" y="3.500" width="11.500" height="7" fill="#c6c68a"/><path d="M3,5h7.500" stroke="#e8e8cc" stroke-width="1.200"/><path d="M2,7.500h3M6,7.500h5.500" stroke="#94944c" stroke-width="1"/><path d="M2,9.500h3M6,9.500h5.500" stroke="#dcdcb4" stroke-width="1"/><path d="M0,11.500h13.500" stroke="#8c8c44" stroke-width="1"/></svg>
<span class="t" style="top:527.9px;height:15px;line-height:15px;left:63.5px;">Качество</span>
<svg style="left:394px;top:528px;" width="16" height="16" viewBox="0 0 16 16"><path d="M1,4.500l3,-3M1.500,1.500h2.500v2.500" stroke="#555" stroke-width="1" fill="none"/><path d="M1,5q-1,2.500 1,5" stroke="#9a9a9a" stroke-width=".8" fill="none"/><rect x="5" y="0.500" width="2" height="4.500" fill="#c4ccd8"/><rect x="7" y="0.500" width="2" height="4.500" fill="#6c7484"/><path d="M11,2l3,3M14,2.500v2.500h-2.500" stroke="#444" stroke-width="1" fill="none"/><rect x="2" y="6" width="2" height="4.500" fill="#c4ccd8"/><rect x="4" y="6" width="2.500" height="4.500" fill="#6c7484"/><path d="M4,14.500l2.500,-2.500M4,12.500v2h2" stroke="#444" stroke-width="1" fill="none"/><path d="M9.500,11v-2.700a2.200,2.200 0 0 1 4.400,0v2.700z" fill="#fff" stroke="#8c8c8c" stroke-width="1.100"/><rect x="8" y="10.500" width="7.500" height="5.500" rx=".8" fill="#b47c44"/><rect x="12.500" y="10.500" width="3" height="5.500" rx=".8" fill="#94543a"/><rect x="8" y="15" width="7.500" height="1" fill="#7c4428"/><rect x="11" y="12" width="1.500" height="2" fill="#1a0c04"/></svg>
<svg style="left:421px;top:535px;" width="8" height="9" viewBox="0 0 8 9"><path d="M0,2l4,-2l4,2v5l-4,2l-4,-2z" fill="#ecec2c"/><path d="M4,4v5l4,-2v-5z" fill="#c4c41c"/><path d="M0,2l4,2l4,-2l-4,-2z" fill="#fcfc7c"/></svg>
<div style="left:38px;top:552px;width:6px;height:1px;background:repeating-linear-gradient(to right,#000 0 1px,transparent 1px 2px);"></div>
<svg style="left:29px;top:548px;" width="9" height="9" viewBox="0 0 9 9"><rect x="0.500" y="0.500" width="8" height="8" fill="#fff" stroke="#000"/><path d="M2,4.500h5" stroke="#000"/><path d="M4.500,2v5" stroke="#000"/></svg>
<svg style="left:44px;top:547px;" width="14" height="12" viewBox="0 0 14 12"><path d="M0,0.500h5.500l1.500,2h6.500v9.500h-13.500z" fill="#b0b064"/><path d="M0.500,1h5l1.500,2" fill="none" stroke="#c4c47c" stroke-width="1"/><rect x="1" y="3.500" width="11.500" height="7" fill="#c6c68a"/><path d="M3,5h7.500" stroke="#e8e8cc" stroke-width="1.200"/><path d="M2,7.500h3M6,7.500h5.500" stroke="#94944c" stroke-width="1"/><path d="M2,9.500h3M6,9.500h5.500" stroke="#dcdcb4" stroke-width="1"/><path d="M0,11.500h13.500" stroke="#8c8c44" stroke-width="1"/></svg>
<span class="t" style="top:544.9px;height:15px;line-height:15px;left:63.5px;">КлассификаторЕдиницИзмерения</span>
<svg style="left:394px;top:545px;" width="16" height="16" viewBox="0 0 16 16"><path d="M1,4.500l3,-3M1.500,1.500h2.500v2.500" stroke="#555" stroke-width="1" fill="none"/><path d="M1,5q-1,2.500 1,5" stroke="#9a9a9a" stroke-width=".8" fill="none"/><rect x="5" y="0.500" width="2" height="4.500" fill="#c4ccd8"/><rect x="7" y="0.500" width="2" height="4.500" fill="#6c7484"/><path d="M11,2l3,3M14,2.500v2.500h-2.500" stroke="#444" stroke-width="1" fill="none"/><rect x="2" y="6" width="2" height="4.500" fill="#c4ccd8"/><rect x="4" y="6" width="2.500" height="4.500" fill="#6c7484"/><path d="M4,14.500l2.500,-2.500M4,12.500v2h2" stroke="#444" stroke-width="1" fill="none"/><path d="M9.500,11v-2.700a2.200,2.200 0 0 1 4.400,0v2.700z" fill="#fff" stroke="#8c8c8c" stroke-width="1.100"/><rect x="8" y="10.500" width="7.500" height="5.500" rx=".8" fill="#b47c44"/><rect x="12.500" y="10.500" width="3" height="5.500" rx=".8" fill="#94543a"/><rect x="8" y="15" width="7.500" height="1" fill="#7c4428"/><rect x="11" y="12" width="1.500" height="2" fill="#1a0c04"/></svg>
<svg style="left:421px;top:552px;" width="8" height="9" viewBox="0 0 8 9"><path d="M0,2l4,-2l4,2v5l-4,2l-4,-2z" fill="#ecec2c"/><path d="M4,4v5l4,-2v-5z" fill="#c4c41c"/><path d="M0,2l4,2l4,-2l-4,-2z" fill="#fcfc7c"/></svg>
<div style="left:38px;top:569px;width:6px;height:1px;background:repeating-linear-gradient(to right,#000 0 1px,transparent 1px 2px);"></div>
<svg style="left:29px;top:565px;" width="9" height="9" viewBox="0 0 9 9"><rect x="0.500" y="0.500" width="8" height="8" fill="#fff" stroke="#000"/><path d="M2,4.500h5" stroke="#000"/><path d="M4.500,2v5" stroke="#000"/></svg>
<svg style="left:44px;top:564px;" width="14" height="12" viewBox="0 0 14 12"><path d="M0,0.500h5.500l1.500,2h6.500v9.500h-13.500z" fill="#b0b064"/><path d="M0.500,1h5l1.500,2" fill="none" stroke="#c4c47c" stroke-width="1"/><rect x="1" y="3.500" width="11.500" height="7" fill="#c6c68a"/><path d="M3,5h7.500" stroke="#e8e8cc" stroke-width="1.200"/><path d="M2,7.500h3M6,7.500h5.500" stroke="#94944c" stroke-width="1"/><path d="M2,9.500h3M6,9.500h5.500" stroke="#dcdcb4" stroke-width="1"/><path d="M0,11.500h13.500" stroke="#8c8c44" stroke-width="1"/></svg>
<span class="t" style="top:561.9px;height:15px;line-height:15px;left:63.5px;">КлассификаторСтранМира</span>
<svg style="left:394px;top:562px;" width="16" height="16" viewBox="0 0 16 16"><path d="M1,4.500l3,-3M1.500,1.500h2.500v2.500" stroke="#555" stroke-width="1" fill="none"/><path d="M1,5q-1,2.500 1,5" stroke="#9a9a9a" stroke-width=".8" fill="none"/><rect x="5" y="0.500" width="2" height="4.500" fill="#c4ccd8"/><rect x="7" y="0.500" width="2" height="4.500" fill="#6c7484"/><path d="M11,2l3,3M14,2.500v2.500h-2.500" stroke="#444" stroke-width="1" fill="none"/><rect x="2" y="6" width="2" height="4.500" fill="#c4ccd8"/><rect x="4" y="6" width="2.500" height="4.500" fill="#6c7484"/><path d="M4,14.500l2.500,-2.500M4,12.500v2h2" stroke="#444" stroke-width="1" fill="none"/><path d="M9.500,11v-2.700a2.200,2.200 0 0 1 4.400,0v2.700z" fill="#fff" stroke="#8c8c8c" stroke-width="1.100"/><rect x="8" y="10.500" width="7.500" height="5.500" rx=".8" fill="#b47c44"/><rect x="12.500" y="10.500" width="3" height="5.500" rx=".8" fill="#94543a"/><rect x="8" y="15" width="7.500" height="1" fill="#7c4428"/><rect x="11" y="12" width="1.500" height="2" fill="#1a0c04"/></svg>
<svg style="left:421px;top:569px;" width="8" height="9" viewBox="0 0 8 9"><path d="M0,2l4,-2l4,2v5l-4,2l-4,-2z" fill="#ecec2c"/><path d="M4,4v5l4,-2v-5z" fill="#c4c41c"/><path d="M0,2l4,2l4,-2l-4,-2z" fill="#fcfc7c"/></svg>
<div style="left:38px;top:586px;width:6px;height:1px;background:repeating-linear-gradient(to right,#000 0 1px,transparent 1px 2px);"></div>
<svg style="left:29px;top:582px;" width="9" height="9" viewBox="0 0 9 9"><rect x="0.500" y="0.500" width="8" height="8" fill="#fff" stroke="#000"/><path d="M2,4.500h5" stroke="#000"/><path d="M4.500,2v5" stroke="#000"/></svg>
<svg style="left:44px;top:581px;" width="14" height="12" viewBox="0 0 14 12"><path d="M0,0.500h5.500l1.500,2h6.500v9.500h-13.500z" fill="#b0b064"/><path d="M0.500,1h5l1.500,2" fill="none" stroke="#c4c47c" stroke-width="1"/><rect x="1" y="3.500" width="11.500" height="7" fill="#c6c68a"/><path d="M3,5h7.500" stroke="#e8e8cc" stroke-width="1.200"/><path d="M2,7.500h3M6,7.500h5.500" stroke="#94944c" stroke-width="1"/><path d="M2,9.500h3M6,9.500h5.500" stroke="#dcdcb4" stroke-width="1"/><path d="M0,11.500h13.500" stroke="#8c8c44" stroke-width="1"/></svg>
<span class="t" style="top:578.9px;height:15px;line-height:15px;left:63.5px;">Кладовщики</span>
<svg style="left:394px;top:579px;" width="16" height="16" viewBox="0 0 16 16"><path d="M1,4.500l3,-3M1.500,1.500h2.500v2.500" stroke="#555" stroke-width="1" fill="none"/><path d="M1,5q-1,2.500 1,5" stroke="#9a9a9a" stroke-width=".8" fill="none"/><rect x="5" y="0.500" width="2" height="4.500" fill="#c4ccd8"/><rect x="7" y="0.500" width="2" height="4.500" fill="#6c7484"/><path d="M11,2l3,3M14,2.500v2.500h-2.500" stroke="#444" stroke-width="1" fill="none"/><rect x="2" y="6" width="2" height="4.500" fill="#c4ccd8"/><rect x="4" y="6" width="2.500" height="4.500" fill="#6c7484"/><path d="M4,14.500l2.500,-2.500M4,12.500v2h2" stroke="#444" stroke-width="1" fill="none"/><path d="M9.500,11v-2.700a2.200,2.200 0 0 1 4.400,0v2.700z" fill="#fff" stroke="#8c8c8c" stroke-width="1.100"/><rect x="8" y="10.500" width="7.500" height="5.500" rx=".8" fill="#b47c44"/><rect x="12.500" y="10.500" width="3" height="5.500" rx=".8" fill="#94543a"/><rect x="8" y="15" width="7.500" height="1" fill="#7c4428"/><rect x="11" y="12" width="1.500" height="2" fill="#1a0c04"/></svg>
<svg style="left:421px;top:586px;" width="8" height="9" viewBox="0 0 8 9"><path d="M0,2l4,-2l4,2v5l-4,2l-4,-2z" fill="#ecec2c"/><path d="M4,4v5l4,-2v-5z" fill="#c4c41c"/><path d="M0,2l4,2l4,-2l-4,-2z" fill="#fcfc7c"/></svg>
<div style="left:38px;top:603px;width:6px;height:1px;background:repeating-linear-gradient(to right,#000 0 1px,transparent 1px 2px);"></div>
<svg style="left:29px;top:599px;" width="9" height="9" viewBox="0 0 9 9"><rect x="0.500" y="0.500" width="8" height="8" fill="#fff" stroke="#000"/><path d="M2,4.500h5" stroke="#000"/><path d="M4.500,2v5" stroke="#000"/></svg>
<svg style="left:44px;top:598px;" width="14" height="12" viewBox="0 0 14 12"><path d="M0,0.500h5.500l1.500,2h6.500v9.500h-13.500z" fill="#b0b064"/><path d="M0.500,1h5l1.500,2" fill="none" stroke="#c4c47c" stroke-width="1"/><rect x="1" y="3.500" width="11.500" height="7" fill="#c6c68a"/><path d="M3,5h7.500" stroke="#e8e8cc" stroke-width="1.200"/><path d="M2,7.500h3M6,7.500h5.500" stroke="#94944c" stroke-width="1"/><path d="M2,9.500h3M6,9.500h5.500" stroke="#dcdcb4" stroke-width="1"/><path d="M0,11.500h13.500" stroke="#8c8c44" stroke-width="1"/></svg>
<span class="t" style="top:595.9px;height:15px;line-height:15px;left:63.5px;">КонтактныеЛица</span>
<svg style="left:394px;top:596px;" width="16" height="16" viewBox="0 0 16 16"><path d="M1,4.500l3,-3M1.500,1.500h2.500v2.500" stroke="#555" stroke-width="1" fill="none"/><path d="M1,5q-1,2.500 1,5" stroke="#9a9a9a" stroke-width=".8" fill="none"/><rect x="5" y="0.500" width="2" height="4.500" fill="#c4ccd8"/><rect x="7" y="0.500" width="2" height="4.500" fill="#6c7484"/><path d="M11,2l3,3M14,2.500v2.500h-2.500" stroke="#444" stroke-width="1" fill="none"/><rect x="2" y="6" width="2" height="4.500" fill="#c4ccd8"/><rect x="4" y="6" width="2.500" height="4.500" fill="#6c7484"/><path d="M4,14.500l2.500,-2.500M4,12.500v2h2" stroke="#444" stroke-width="1" fill="none"/><path d="M9.500,11v-2.700a2.200,2.200 0 0 1 4.400,0v2.700z" fill="#fff" stroke="#8c8c8c" stroke-width="1.100"/><rect x="8" y="10.500" width="7.500" height="5.500" rx=".8" fill="#b47c44"/><rect x="12.500" y="10.500" width="3" height="5.500" rx=".8" fill="#94543a"/><rect x="8" y="15" width="7.500" height="1" fill="#7c4428"/><rect x="11" y="12" width="1.500" height="2" fill="#1a0c04"/></svg>
<svg style="left:421px;top:603px;" width="8" height="9" viewBox="0 0 8 9"><path d="M0,2l4,-2l4,2v5l-4,2l-4,-2z" fill="#ecec2c"/><path d="M4,4v5l4,-2v-5z" fill="#c4c41c"/><path d="M0,2l4,2l4,-2l-4,-2z" fill="#fcfc7c"/></svg>
<div style="left:38px;top:620px;width:6px;height:1px;background:repeating-linear-gradient(to right,#000 0 1px,transparent 1px 2px);"></div>
<svg style="left:29px;top:616px;" width="9" height="9" viewBox="0 0 9 9"><rect x="0.500" y="0.500" width="8" height="8" fill="#fff" stroke="#000"/><path d="M2,4.500h5" stroke="#000"/><path d="M4.500,2v5" stroke="#000"/></svg>
<svg style="left:44px;top:615px;" width="14" height="12" viewBox="0 0 14 12"><path d="M0,0.500h5.500l1.500,2h6.500v9.500h-13.500z" fill="#b0b064"/><path d="M0.500,1h5l1.500,2" fill="none" stroke="#c4c47c" stroke-width="1"/><rect x="1" y="3.500" width="11.500" height="7" fill="#c6c68a"/><path d="M3,5h7.500" stroke="#e8e8cc" stroke-width="1.200"/><path d="M2,7.500h3M6,7.500h5.500" stroke="#94944c" stroke-width="1"/><path d="M2,9.500h3M6,9.500h5.500" stroke="#dcdcb4" stroke-width="1"/><path d="M0,11.500h13.500" stroke="#8c8c44" stroke-width="1"/></svg>
<span class="t" style="top:612.9px;height:15px;line-height:15px;left:63.5px;">КонтактныеЛицаКонтрагентов</span>
<svg style="left:394px;top:613px;" width="16" height="16" viewBox="0 0 16 16"><path d="M1,4.500l3,-3M1.500,1.500h2.500v2.500" stroke="#555" stroke-width="1" fill="none"/><path d="M1,5q-1,2.500 1,5" stroke="#9a9a9a" stroke-width=".8" fill="none"/><rect x="5" y="0.500" width="2" height="4.500" fill="#c4ccd8"/><rect x="7" y="0.500" width="2" height="4.500" fill="#6c7484"/><path d="M11,2l3,3M14,2.500v2.500h-2.500" stroke="#444" stroke-width="1" fill="none"/><rect x="2" y="6" width="2" height="4.500" fill="#c4ccd8"/><rect x="4" y="6" width="2.500" height="4.500" fill="#6c7484"/><path d="M4,14.500l2.500,-2.500M4,12.500v2h2" stroke="#444" stroke-width="1" fill="none"/><path d="M9.500,11v-2.700a2.200,2.200 0 0 1 4.400,0v2.700z" fill="#fff" stroke="#8c8c8c" stroke-width="1.100"/><rect x="8" y="10.500" width="7.500" height="5.500" rx=".8" fill="#b47c44"/><rect x="12.500" y="10.500" width="3" height="5.500" rx=".8" fill="#94543a"/><rect x="8" y="15" width="7.500" height="1" fill="#7c4428"/><rect x="11" y="12" width="1.500" height="2" fill="#1a0c04"/></svg>
<svg style="left:421px;top:620px;" width="8" height="9" viewBox="0 0 8 9"><path d="M0,2l4,-2l4,2v5l-4,2l-4,-2z" fill="#ecec2c"/><path d="M4,4v5l4,-2v-5z" fill="#c4c41c"/><path d="M0,2l4,2l4,-2l-4,-2z" fill="#fcfc7c"/></svg>
<div style="left:38px;top:637px;width:6px;height:1px;background:repeating-linear-gradient(to right,#000 0 1px,transparent 1px 2px);"></div>
<svg style="left:29px;top:633px;" width="9" height="9" viewBox="0 0 9 9"><rect x="0.500" y="0.500" width="8" height="8" fill="#fff" stroke="#000"/><path d="M2,4.500h5" stroke="#000"/></svg>
<svg style="left:44px;top:632px;" width="14" height="12" viewBox="0 0 14 12"><path d="M0,0.500h5.500l1.500,2h6.500v9.500h-13.500z" fill="#b0b064"/><path d="M0.500,1h5l1.500,2" fill="none" stroke="#c4c47c" stroke-width="1"/><rect x="1" y="3.500" width="11.500" height="7" fill="#c6c68a"/><path d="M3,5h7.500" stroke="#e8e8cc" stroke-width="1.200"/><path d="M2,7.500h3M6,7.500h5.500" stroke="#94944c" stroke-width="1"/><path d="M2,9.500h3M6,9.500h5.500" stroke="#dcdcb4" stroke-width="1"/><path d="M0,11.500h13.500" stroke="#8c8c44" stroke-width="1"/></svg>
<span class="t" style="top:629.9px;height:15px;line-height:15px;left:63.5px;">Контрагенты</span>
<svg style="left:394px;top:630px;" width="16" height="16" viewBox="0 0 16 16"><path d="M1,4.500l3,-3M1.500,1.500h2.500v2.500" stroke="#555" stroke-width="1" fill="none"/><path d="M1,5q-1,2.500 1,5" stroke="#9a9a9a" stroke-width=".8" fill="none"/><rect x="5" y="0.500" width="2" height="4.500" fill="#c4ccd8"/><rect x="7" y="0.500" width="2" height="4.500" fill="#6c7484"/><path d="M11,2l3,3M14,2.500v2.500h-2.500" stroke="#444" stroke-width="1" fill="none"/><rect x="2" y="6" width="2" height="4.500" fill="#c4ccd8"/><rect x="4" y="6" width="2.500" height="4.500" fill="#6c7484"/><path d="M4,14.500l2.500,-2.500M4,12.500v2h2" stroke="#444" stroke-width="1" fill="none"/><path d="M9.500,11v-2.700a2.200,2.200 0 0 1 4.400,0v2.700z" fill="#fff" stroke="#8c8c8c" stroke-width="1.100"/><rect x="8" y="10.500" width="7.500" height="5.500" rx=".8" fill="#b47c44"/><rect x="12.500" y="10.500" width="3" height="5.500" rx=".8" fill="#94543a"/><rect x="8" y="15" width="7.500" height="1" fill="#7c4428"/><rect x="11" y="12" width="1.500" height="2" fill="#1a0c04"/></svg>
<svg style="left:421px;top:637px;" width="8" height="9" viewBox="0 0 8 9"><path d="M0,2l4,-2l4,2v5l-4,2l-4,-2z" fill="#ecec2c"/><path d="M4,4v5l4,-2v-5z" fill="#c4c41c"/><path d="M0,2l4,2l4,-2l-4,-2z" fill="#fcfc7c"/></svg>
<div style="left:38px;top:807px;width:6px;height:1px;background:repeating-linear-gradient(to right,#000 0 1px,transparent 1px 2px);"></div>
<svg style="left:29px;top:803px;" width="9" height="9" viewBox="0 0 9 9"><rect x="0.500" y="0.500" width="8" height="8" fill="#fff" stroke="#000"/><path d="M2,4.500h5" stroke="#000"/><path d="M4.500,2v5" stroke="#000"/></svg>
<svg style="left:44px;top:802px;" width="14" height="12" viewBox="0 0 14 12"><path d="M0,0.500h5.500l1.500,2h6.500v9.500h-13.500z" fill="#b0b064"/><path d="M0.500,1h5l1.500,2" fill="none" stroke="#c4c47c" stroke-width="1"/><rect x="1" y="3.500" width="11.500" height="7" fill="#c6c68a"/><path d="M3,5h7.500" stroke="#e8e8cc" stroke-width="1.200"/><path d="M2,7.500h3M6,7.500h5.500" stroke="#94944c" stroke-width="1"/><path d="M2,9.500h3M6,9.500h5.500" stroke="#dcdcb4" stroke-width="1"/><path d="M0,11.500h13.500" stroke="#8c8c44" stroke-width="1"/></svg>
<span class="t" style="top:799.9px;height:15px;line-height:15px;left:63.5px;letter-spacing:0.092px;">ЛичныеКонтакты</span>
<svg style="left:394px;top:800px;" width="16" height="16" viewBox="0 0 16 16"><path d="M1,4.500l3,-3M1.500,1.500h2.500v2.500" stroke="#555" stroke-width="1" fill="none"/><path d="M1,5q-1,2.500 1,5" stroke="#9a9a9a" stroke-width=".8" fill="none"/><rect x="5" y="0.500" width="2" height="4.500" fill="#c4ccd8"/><rect x="7" y="0.500" width="2" height="4.500" fill="#6c7484"/><path d="M11,2l3,3M14,2.500v2.500h-2.500" stroke="#444" stroke-width="1" fill="none"/><rect x="2" y="6" width="2" height="4.500" fill="#c4ccd8"/><rect x="4" y="6" width="2.500" height="4.500" fill="#6c7484"/><path d="M4,14.500l2.500,-2.500M4,12.500v2h2" stroke="#444" stroke-width="1" fill="none"/><path d="M9.500,11v-2.700a2.200,2.200 0 0 1 4.400,0v2.700z" fill="#fff" stroke="#8c8c8c" stroke-width="1.100"/><rect x="8" y="10.500" width="7.500" height="5.500" rx=".8" fill="#b47c44"/><rect x="12.500" y="10.500" width="3" height="5.500" rx=".8" fill="#94543a"/><rect x="8" y="15" width="7.500" height="1" fill="#7c4428"/><rect x="11" y="12" width="1.500" height="2" fill="#1a0c04"/></svg>
<svg style="left:421px;top:807px;" width="8" height="9" viewBox="0 0 8 9"><path d="M0,2l4,-2l4,2v5l-4,2l-4,-2z" fill="#ecec2c"/><path d="M4,4v5l4,-2v-5z" fill="#c4c41c"/><path d="M0,2l4,2l4,-2l-4,-2z" fill="#fcfc7c"/></svg>
<div style="left:38px;top:824px;width:6px;height:1px;background:repeating-linear-gradient(to right,#000 0 1px,transparent 1px 2px);"></div>
<svg style="left:29px;top:820px;" width="9" height="9" viewBox="0 0 9 9"><rect x="0.500" y="0.500" width="8" height="8" fill="#fff" stroke="#000"/><path d="M2,4.500h5" stroke="#000"/><path d="M4.500,2v5" stroke="#000"/></svg>
<svg style="left:44px;top:819px;" width="14" height="12" viewBox="0 0 14 12"><path d="M0,0.500h5.500l1.500,2h6.500v9.500h-13.500z" fill="#b0b064"/><path d="M0.500,1h5l1.500,2" fill="none" stroke="#c4c47c" stroke-width="1"/><rect x="1" y="3.500" width="11.500" height="7" fill="#c6c68a"/><path d="M3,5h7.500" stroke="#e8e8cc" stroke-width="1.200"/><path d="M2,7.500h3M6,7.500h5.500" stroke="#94944c" stroke-width="1"/><path d="M2,9.500h3M6,9.500h5.500" stroke="#dcdcb4" stroke-width="1"/><path d="M0,11.500h13.500" stroke="#8c8c44" stroke-width="1"/></svg>
<span class="t" style="top:816.9px;height:15px;line-height:15px;left:63.5px;letter-spacing:-0.069px;">МестаХранения</span>
<svg style="left:394px;top:817px;" width="16" height="16" viewBox="0 0 16 16"><path d="M1,4.500l3,-3M1.500,1.500h2.500v2.500" stroke="#555" stroke-width="1" fill="none"/><path d="M1,5q-1,2.500 1,5" stroke="#9a9a9a" stroke-width=".8" fill="none"/><rect x="5" y="0.500" width="2" height="4.500" fill="#c4ccd8"/><rect x="7" y="0.500" width="2" height="4.500" fill="#6c7484"/><path d="M11,2l3,3M14,2.500v2.500h-2.500" stroke="#444" stroke-width="1" fill="none"/><rect x="2" y="6" width="2" height="4.500" fill="#c4ccd8"/><rect x="4" y="6" width="2.500" height="4.500" fill="#6c7484"/><path d="M4,14.500l2.500,-2.500M4,12.500v2h2" stroke="#444" stroke-width="1" fill="none"/><path d="M9.500,11v-2.700a2.200,2.200 0 0 1 4.400,0v2.700z" fill="#fff" stroke="#8c8c8c" stroke-width="1.100"/><rect x="8" y="10.500" width="7.500" height="5.500" rx=".8" fill="#b47c44"/><rect x="12.500" y="10.500" width="3" height="5.500" rx=".8" fill="#94543a"/><rect x="8" y="15" width="7.500" height="1" fill="#7c4428"/><rect x="11" y="12" width="1.500" height="2" fill="#1a0c04"/></svg>
<svg style="left:421px;top:824px;" width="8" height="9" viewBox="0 0 8 9"><path d="M0,2l4,-2l4,2v5l-4,2l-4,-2z" fill="#ecec2c"/><path d="M4,4v5l4,-2v-5z" fill="#c4c41c"/><path d="M0,2l4,2l4,-2l-4,-2z" fill="#fcfc7c"/></svg>
<div style="left:38px;top:841px;width:6px;height:1px;background:repeating-linear-gradient(to right,#000 0 1px,transparent 1px 2px);"></div>
<svg style="left:29px;top:837px;" width="9" height="9" viewBox="0 0 9 9"><rect x="0.500" y="0.500" width="8" height="8" fill="#fff" stroke="#000"/><path d="M2,4.500h5" stroke="#000"/><path d="M4.500,2v5" stroke="#000"/></svg>
<svg style="left:44px;top:836px;" width="14" height="12" viewBox="0 0 14 12"><path d="M0,0.500h5.500l1.500,2h6.500v9.500h-13.500z" fill="#b0b064"/><path d="M0.500,1h5l1.500,2" fill="none" stroke="#c4c47c" stroke-width="1"/><rect x="1" y="3.500" width="11.500" height="7" fill="#c6c68a"/><path d="M3,5h7.500" stroke="#e8e8cc" stroke-width="1.200"/><path d="M2,7.500h3M6,7.500h5.500" stroke="#94944c" stroke-width="1"/><path d="M2,9.500h3M6,9.500h5.500" stroke="#dcdcb4" stroke-width="1"/><path d="M0,11.500h13.500" stroke="#8c8c44" stroke-width="1"/></svg>
<span class="t" style="top:833.9px;height:15px;line-height:15px;left:63.5px;letter-spacing:0.020px;">НастройкаИнтервалов</span>
<svg style="left:394px;top:834px;" width="16" height="16" viewBox="0 0 16 16"><path d="M1,4.500l3,-3M1.500,1.500h2.500v2.500" stroke="#555" stroke-width="1" fill="none"/><path d="M1,5q-1,2.500 1,5" stroke="#9a9a9a" stroke-width=".8" fill="none"/><rect x="5" y="0.500" width="2" height="4.500" fill="#c4ccd8"/><rect x="7" y="0.500" width="2" height="4.500" fill="#6c7484"/><path d="M11,2l3,3M14,2.500v2.500h-2.500" stroke="#444" stroke-width="1" fill="none"/><rect x="2" y="6" width="2" height="4.500" fill="#c4ccd8"/><rect x="4" y="6" width="2.500" height="4.500" fill="#6c7484"/><path d="M4,14.500l2.500,-2.500M4,12.500v2h2" stroke="#444" stroke-width="1" fill="none"/><path d="M9.500,11v-2.700a2.200,2.200 0 0 1 4.400,0v2.700z" fill="#fff" stroke="#8c8c8c" stroke-width="1.100"/><rect x="8" y="10.500" width="7.500" height="5.500" rx=".8" fill="#b47c44"/><rect x="12.500" y="10.500" width="3" height="5.500" rx=".8" fill="#94543a"/><rect x="8" y="15" width="7.500" height="1" fill="#7c4428"/><rect x="11" y="12" width="1.500" height="2" fill="#1a0c04"/></svg>
<svg style="left:421px;top:841px;" width="8" height="9" viewBox="0 0 8 9"><path d="M0,2l4,-2l4,2v5l-4,2l-4,-2z" fill="#ecec2c"/><path d="M4,4v5l4,-2v-5z" fill="#c4c41c"/><path d="M0,2l4,2l4,-2l-4,-2z" fill="#fcfc7c"/></svg>
<div style="left:38px;top:858px;width:6px;height:1px;background:repeating-linear-gradient(to right,#000 0 1px,transparent 1px 2px);"></div>
<svg style="left:29px;top:854px;" width="9" height="9" viewBox="0 0 9 9"><rect x="0.500" y="0.500" width="8" height="8" fill="#fff" stroke="#000"/><path d="M2,4.500h5" stroke="#000"/><path d="M4.500,2v5" stroke="#000"/></svg>
<svg style="left:44px;top:853px;" width="14" height="12" viewBox="0 0 14 12"><path d="M0,0.500h5.500l1.500,2h6.500v9.500h-13.500z" fill="#b0b064"/><path d="M0.500,1h5l1.500,2" fill="none" stroke="#c4c47c" stroke-width="1"/><rect x="1" y="3.500" width="11.500" height="7" fill="#c6c68a"/><path d="M3,5h7.500" stroke="#e8e8cc" stroke-width="1.200"/><path d="M2,7.500h3M6,7.500h5.500" stroke="#94944c" stroke-width="1"/><path d="M2,9.500h3M6,9.500h5.500" stroke="#dcdcb4" stroke-width="1"/><path d="M0,11.500h13.500" stroke="#8c8c44" stroke-width="1"/></svg>
<span class="t" style="top:850.9px;height:15px;line-height:15px;left:63.5px;letter-spacing:0.102px;">НастройкиБизнесПроцессов</span>
<svg style="left:394px;top:851px;" width="16" height="16" viewBox="0 0 16 16"><path d="M1,4.500l3,-3M1.500,1.500h2.500v2.500" stroke="#555" stroke-width="1" fill="none"/><path d="M1,5q-1,2.500 1,5" stroke="#9a9a9a" stroke-width=".8" fill="none"/><rect x="5" y="0.500" width="2" height="4.500" fill="#c4ccd8"/><rect x="7" y="0.500" width="2" height="4.500" fill="#6c7484"/><path d="M11,2l3,3M14,2.500v2.500h-2.500" stroke="#444" stroke-width="1" fill="none"/><rect x="2" y="6" width="2" height="4.500" fill="#c4ccd8"/><rect x="4" y="6" width="2.500" height="4.500" fill="#6c7484"/><path d="M4,14.500l2.500,-2.500M4,12.500v2h2" stroke="#444" stroke-width="1" fill="none"/><path d="M9.500,11v-2.700a2.200,2.200 0 0 1 4.400,0v2.700z" fill="#fff" stroke="#8c8c8c" stroke-width="1.100"/><rect x="8" y="10.500" width="7.500" height="5.500" rx=".8" fill="#b47c44"/><rect x="12.500" y="10.500" width="3" height="5.500" rx=".8" fill="#94543a"/><rect x="8" y="15" width="7.500" height="1" fill="#7c4428"/><rect x="11" y="12" width="1.500" height="2" fill="#1a0c04"/></svg>
<svg style="left:421px;top:858px;" width="8" height="9" viewBox="0 0 8 9"><path d="M0,2l4,-2l4,2v5l-4,2l-4,-2z" fill="#ecec2c"/><path d="M4,4v5l4,-2v-5z" fill="#c4c41c"/><path d="M0,2l4,2l4,-2l-4,-2z" fill="#fcfc7c"/></svg>
<div style="left:38px;top:875px;width:6px;height:1px;background:repeating-linear-gradient(to right,#000 0 1px,transparent 1px 2px);"></div>
<svg style="left:29px;top:871px;" width="9" height="9" viewBox="0 0 9 9"><rect x="0.500" y="0.500" width="8" height="8" fill="#fff" stroke="#000"/><path d="M2,4.500h5" stroke="#000"/><path d="M4.500,2v5" stroke="#000"/></svg>
<svg style="left:44px;top:870px;" width="14" height="12" viewBox="0 0 14 12"><path d="M0,0.500h5.500l1.500,2h6.500v9.500h-13.500z" fill="#b0b064"/><path d="M0.500,1h5l1.500,2" fill="none" stroke="#c4c47c" stroke-width="1"/><rect x="1" y="3.500" width="11.500" height="7" fill="#c6c68a"/><path d="M3,5h7.500" stroke="#e8e8cc" stroke-width="1.200"/><path d="M2,7.500h3M6,7.500h5.500" stroke="#94944c" stroke-width="1"/><path d="M2,9.500h3M6,9.500h5.500" stroke="#dcdcb4" stroke-width="1"/><path d="M0,11.500h13.500" stroke="#8c8c44" stroke-width="1"/></svg>
<span class="t" style="top:867.9px;height:15px;line-height:15px;left:63.5px;letter-spacing:-0.012px;">НастройкиВыполненияОбмена</span>
<svg style="left:394px;top:868px;" width="16" height="16" viewBox="0 0 16 16"><path d="M1,4.500l3,-3M1.500,1.500h2.500v2.500" stroke="#555" stroke-width="1" fill="none"/><path d="M1,5q-1,2.500 1,5" stroke="#9a9a9a" stroke-width=".8" fill="none"/><rect x="5" y="0.500" width="2" height="4.500" fill="#c4ccd8"/><rect x="7" y="0.500" width="2" height="4.500" fill="#6c7484"/><path d="M11,2l3,3M14,2.500v2.500h-2.500" stroke="#444" stroke-width="1" fill="none"/><rect x="2" y="6" width="2" height="4.500" fill="#c4ccd8"/><rect x="4" y="6" width="2.500" height="4.500" fill="#6c7484"/><path d="M4,14.500l2.500,-2.500M4,12.500v2h2" stroke="#444" stroke-width="1" fill="none"/><path d="M9.500,11v-2.700a2.200,2.200 0 0 1 4.400,0v2.700z" fill="#fff" stroke="#8c8c8c" stroke-width="1.100"/><rect x="8" y="10.500" width="7.500" height="5.500" rx=".8" fill="#b47c44"/><rect x="12.500" y="10.500" width="3" height="5.500" rx=".8" fill="#94543a"/><rect x="8" y="15" width="7.500" height="1" fill="#7c4428"/><rect x="11" y="12" width="1.500" height="2" fill="#1a0c04"/></svg>
<svg style="left:421px;top:875px;" width="8" height="9" viewBox="0 0 8 9"><path d="M0,2l4,-2l4,2v5l-4,2l-4,-2z" fill="#ecec2c"/><path d="M4,4v5l4,-2v-5z" fill="#c4c41c"/><path d="M0,2l4,2l4,-2l-4,-2z" fill="#fcfc7c"/></svg>
<div style="left:38px;top:892px;width:6px;height:1px;background:repeating-linear-gradient(to right,#000 0 1px,transparent 1px 2px);"></div>
<svg style="left:29px;top:888px;" width="9" height="9" viewBox="0 0 9 9"><rect x="0.500" y="0.500" width="8" height="8" fill="#fff" stroke="#000"/><path d="M2,4.500h5" stroke="#000"/><path d="M4.500,2v5" stroke="#000"/></svg>
<svg style="left:44px;top:887px;" width="14" height="12" viewBox="0 0 14 12"><path d="M0,0.500h5.500l1.500,2h6.500v9.500h-13.500z" fill="#b0b064"/><path d="M0.500,1h5l1.500,2" fill="none" stroke="#c4c47c" stroke-width="1"/><rect x="1" y="3.500" width="11.500" height="7" fill="#c6c68a"/><path d="M3,5h7.500" stroke="#e8e8cc" stroke-width="1.200"/><path d="M2,7.500h3M6,7.500h5.500" stroke="#94944c" stroke-width="1"/><path d="M2,9.500h3M6,9.500h5.500" stroke="#dcdcb4" stroke-width="1"/><path d="M0,11.500h13.500" stroke="#8c8c44" stroke-width="1"/></svg>
<span class="t" style="top:884.9px;height:15px;line-height:15px;left:63.5px;letter-spacing:0.102px;">НастройкиОбменаДанными</span>
<svg style="left:394px;top:885px;" width="16" height="16" viewBox="0 0 16 16"><path d="M1,4.500l3,-3M1.500,1.500h2.500v2.500" stroke="#555" stroke-width="1" fill="none"/><path d="M1,5q-1,2.500 1,5" stroke="#9a9a9a" stroke-width=".8" fill="none"/><rect x="5" y="0.500" width="2" height="4.500" fill="#c4ccd8"/><rect x="7" y="0.500" width="2" height="4.500" fill="#6c7484"/><path d="M11,2l3,3M14,2.500v2.500h-2.500" stroke="#444" stroke-width="1" fill="none"/><rect x="2" y="6" width="2" height="4.500" fill="#c4ccd8"/><rect x="4" y="6" width="2.500" height="4.500" fill="#6c7484"/><path d="M4,14.500l2.500,-2.500M4,12.500v2h2" stroke="#444" stroke-width="1" fill="none"/><path d="M9.500,11v-2.700a2.200,2.200 0 0 1 4.400,0v2.700z" fill="#fff" stroke="#8c8c8c" stroke-width="1.100"/><rect x="8" y="10.500" width="7.500" height="5.500" rx=".8" fill="#b47c44"/><rect x="12.500" y="10.500" width="3" height="5.500" rx=".8" fill="#94543a"/><rect x="8" y="15" width="7.500" height="1" fill="#7c4428"/><rect x="11" y="12" width="1.500" height="2" fill="#1a0c04"/></svg>
<svg style="left:421px;top:892px;" width="8" height="9" viewBox="0 0 8 9"><path d="M0,2l4,-2l4,2v5l-4,2l-4,-2z" fill="#ecec2c"/><path d="M4,4v5l4,-2v-5z" fill="#c4c41c"/><path d="M0,2l4,2l4,-2l-4,-2z" fill="#fcfc7c"/></svg>
<div style="left:38px;top:909px;width:6px;height:1px;background:repeating-linear-gradient(to right,#000 0 1px,transparent 1px 2px);"></div>
<svg style="left:29px;top:905px;" width="9" height="9" viewBox="0 0 9 9"><rect x="0.500" y="0.500" width="8" height="8" fill="#fff" stroke="#000"/><path d="M2,4.500h5" stroke="#000"/><path d="M4.500,2v5" stroke="#000"/></svg>
<svg style="left:44px;top:904px;" width="14" height="12" viewBox="0 0 14 12"><path d="M0,0.500h5.500l1.500,2h6.500v9.500h-13.500z" fill="#b0b064"/><path d="M0.500,1h5l1.500,2" fill="none" stroke="#c4c47c" stroke-width="1"/><rect x="1" y="3.500" width="11.500" height="7" fill="#c6c68a"/><path d="M3,5h7.500" stroke="#e8e8cc" stroke-width="1.200"/><path d="M2,7.500h3M6,7.500h5.500" stroke="#94944c" stroke-width="1"/><path d="M2,9.500h3M6,9.500h5.500" stroke="#dcdcb4" stroke-width="1"/><path d="M0,11.500h13.500" stroke="#8c8c44" stroke-width="1"/></svg>
<span class="t" style="top:901.9px;height:15px;line-height:15px;left:63.5px;letter-spacing:-0.059px;">НастройкиОбменаССайтом</span>
<svg style="left:394px;top:902px;" width="16" height="16" viewBox="0 0 16 16"><path d="M1,4.500l3,-3M1.500,1.500h2.500v2.500" stroke="#555" stroke-width="1" fill="none"/><path d="M1,5q-1,2.500 1,5" stroke="#9a9a9a" stroke-width=".8" fill="none"/><rect x="5" y="0.500" width="2" height="4.500" fill="#c4ccd8"/><rect x="7" y="0.500" width="2" height="4.500" fill="#6c7484"/><path d="M11,2l3,3M14,2.500v2.500h-2.500" stroke="#444" stroke-width="1" fill="none"/><rect x="2" y="6" width="2" height="4.500" fill="#c4ccd8"/><rect x="4" y="6" width="2.500" height="4.500" fill="#6c7484"/><path d="M4,14.500l2.500,-2.500M4,12.500v2h2" stroke="#444" stroke-width="1" fill="none"/><path d="M9.500,11v-2.700a2.200,2.200 0 0 1 4.400,0v2.700z" fill="#fff" stroke="#8c8c8c" stroke-width="1.100"/><rect x="8" y="10.500" width="7.500" height="5.500" rx=".8" fill="#b47c44"/><rect x="12.500" y="10.500" width="3" height="5.500" rx=".8" fill="#94543a"/><rect x="8" y="15" width="7.500" height="1" fill="#7c4428"/><rect x="11" y="12" width="1.500" height="2" fill="#1a0c04"/></svg>
<svg style="left:421px;top:909px;" width="8" height="9" viewBox="0 0 8 9"><path d="M0,2l4,-2l4,2v5l-4,2l-4,-2z" fill="#ecec2c"/><path d="M4,4v5l4,-2v-5z" fill="#c4c41c"/><path d="M0,2l4,2l4,-2l-4,-2z" fill="#fcfc7c"/></svg>
<div style="left:38px;top:926px;width:6px;height:1px;background:repeating-linear-gradient(to right,#000 0 1px,transparent 1px 2px);"></div>
<svg style="left:29px;top:922px;" width="9" height="9" viewBox="0 0 9 9"><rect x="0.500" y="0.500" width="8" height="8" fill="#fff" stroke="#000"/><path d="M2,4.500h5" stroke="#000"/><path d="M4.500,2v5" stroke="#000"/></svg>
<svg style="left:44px;top:921px;" width="14" height="12" viewBox="0 0 14 12"><path d="M0,0.500h5.500l1.500,2h6.500v9.500h-13.500z" fill="#b0b064"/><path d="M0.500,1h5l1.500,2" fill="none" stroke="#c4c47c" stroke-width="1"/><rect x="1" y="3.500" width="11.500" height="7" fill="#c6c68a"/><path d="M3,5h7.500" stroke="#e8e8cc" stroke-width="1.200"/><path d="M2,7.500h3M6,7.500h5.500" stroke="#94944c" stroke-width="1"/><path d="M2,9.500h3M6,9.500h5.500" stroke="#dcdcb4" stroke-width="1"/><path d="M0,11.500h13.500" stroke="#8c8c44" stroke-width="1"/></svg>
<span class="t" style="top:918.9px;height:15px;line-height:15px;left:63.5px;letter-spacing:0.014px;">Номенклатура</span>
<svg style="left:394px;top:919px;" width="16" height="16" viewBox="0 0 16 16"><path d="M1,4.500l3,-3M1.500,1.500h2.500v2.500" stroke="#555" stroke-width="1" fill="none"/><path d="M1,5q-1,2.500 1,5" stroke="#9a9a9a" stroke-width=".8" fill="none"/><rect x="5" y="0.500" width="2" height="4.500" fill="#c4ccd8"/><rect x="7" y="0.500" width="2" height="4.500" fill="#6c7484"/><path d="M11,2l3,3M14,2.500v2.500h-2.500" stroke="#444" stroke-width="1" fill="none"/><rect x="2" y="6" width="2" height="4.500" fill="#c4ccd8"/><rect x="4" y="6" width="2.500" height="4.500" fill="#6c7484"/><path d="M4,14.500l2.500,-2.500M4,12.500v2h2" stroke="#444" stroke-width="1" fill="none"/><path d="M9.500,11v-2.700a2.200,2.200 0 0 1 4.400,0v2.700z" fill="#fff" stroke="#8c8c8c" stroke-width="1.100"/><rect x="8" y="10.500" width="7.500" height="5.500" rx=".8" fill="#b47c44"/><rect x="12.500" y="10.500" width="3" height="5.500" rx=".8" fill="#94543a"/><rect x="8" y="15" width="7.500" height="1" fill="#7c4428"/><rect x="11" y="12" width="1.500" height="2" fill="#1a0c04"/></svg>
<svg style="left:421px;top:926px;" width="8" height="9" viewBox="0 0 8 9"><path d="M0,2l4,-2l4,2v5l-4,2l-4,-2z" fill="#ecec2c"/><path d="M4,4v5l4,-2v-5z" fill="#c4c41c"/><path d="M0,2l4,2l4,-2l-4,-2z" fill="#fcfc7c"/></svg>
<div style="left:38px;top:943px;width:6px;height:1px;background:repeating-linear-gradient(to right,#000 0 1px,transparent 1px 2px);"></div>
<svg style="left:29px;top:939px;" width="9" height="9" viewBox="0 0 9 9"><rect x="0.500" y="0.500" width="8" height="8" fill="#fff" stroke="#000"/><path d="M2,4.500h5" stroke="#000"/><path d="M4.500,2v5" stroke="#000"/></svg>
<svg style="left:44px;top:938px;" width="14" height="12" viewBox="0 0 14 12"><path d="M0,0.500h5.500l1.500,2h6.500v9.500h-13.500z" fill="#b0b064"/><path d="M0.500,1h5l1.500,2" fill="none" stroke="#c4c47c" stroke-width="1"/><rect x="1" y="3.500" width="11.500" height="7" fill="#c6c68a"/><path d="M3,5h7.500" stroke="#e8e8cc" stroke-width="1.200"/><path d="M2,7.500h3M6,7.500h5.500" stroke="#94944c" stroke-width="1"/><path d="M2,9.500h3M6,9.500h5.500" stroke="#dcdcb4" stroke-width="1"/><path d="M0,11.500h13.500" stroke="#8c8c44" stroke-width="1"/></svg>
<span class="t" style="top:935.9px;height:15px;line-height:15px;left:63.5px;letter-spacing:0.027px;">НоменклатурныеГруппы</span>
<svg style="left:394px;top:936px;" width="16" height="16" viewBox="0 0 16 16"><path d="M1,4.500l3,-3M1.500,1.500h2.500v2.500" stroke="#555" stroke-width="1" fill="none"/><path d="M1,5q-1,2.500 1,5" stroke="#9a9a9a" stroke-width=".8" fill="none"/><rect x="5" y="0.500" width="2" height="4.500" fill="#c4ccd8"/><rect x="7" y="0.500" width="2" height="4.500" fill="#6c7484"/><path d="M11,2l3,3M14,2.500v2.500h-2.500" stroke="#444" stroke-width="1" fill="none"/><rect x="2" y="6" width="2" height="4.500" fill="#c4ccd8"/><rect x="4" y="6" width="2.500" height="4.500" fill="#6c7484"/><path d="M4,14.500l2.500,-2.500M4,12.500v2h2" stroke="#444" stroke-width="1" fill="none"/><path d="M9.500,11v-2.700a2.200,2.200 0 0 1 4.400,0v2.700z" fill="#fff" stroke="#8c8c8c" stroke-width="1.100"/><rect x="8" y="10.500" width="7.500" height="5.500" rx=".8" fill="#b47c44"/><rect x="12.500" y="10.500" width="3" height="5.500" rx=".8" fill="#94543a"/><rect x="8" y="15" width="7.500" height="1" fill="#7c4428"/><rect x="11" y="12" width="1.500" height="2" fill="#1a0c04"/></svg>
<svg style="left:421px;top:943px;" width="8" height="9" viewBox="0 0 8 9"><path d="M0,2l4,-2l4,2v5l-4,2l-4,-2z" fill="#ecec2c"/><path d="M4,4v5l4,-2v-5z" fill="#c4c41c"/><path d="M0,2l4,2l4,-2l-4,-2z" fill="#fcfc7c"/></svg>
<div style="left:38px;top:960px;width:6px;height:1px;background:repeating-linear-gradient(to right,#000 0 1px,transparent 1px 2px);"></div>
<svg style="left:29px;top:956px;" width="9" height="9" viewBox="0 0 9 9"><rect x="0.500" y="0.500" width="8" height="8" fill="#fff" stroke="#000"/><path d="M2,4.500h5" stroke="#000"/><path d="M4.500,2v5" stroke="#000"/></svg>
<svg style="left:44px;top:955px;" width="14" height="12" viewBox="0 0 14 12"><path d="M0,0.500h5.500l1.500,2h6.500v9.500h-13.500z" fill="#b0b064"/><path d="M0.500,1h5l1.500,2" fill="none" stroke="#c4c47c" stroke-width="1"/><rect x="1" y="3.500" width="11.500" height="7" fill="#c6c68a"/><path d="M3,5h7.500" stroke="#e8e8cc" stroke-width="1.200"/><path d="M2,7.500h3M6,7.500h5.500" stroke="#94944c" stroke-width="1"/><path d="M2,9.500h3M6,9.500h5.500" stroke="#dcdcb4" stroke-width="1"/><path d="M0,11.500h13.500" stroke="#8c8c44" stroke-width="1"/></svg>
<span class="t" style="top:952.9px;height:15px;line-height:15px;left:63.5px;letter-spacing:0.139px;">НомераГТД</span>
<svg style="left:394px;top:953px;" width="16" height="16" viewBox="0 0 16 16"><path d="M1,4.500l3,-3M1.500,1.500h2.500v2.500" stroke="#555" stroke-width="1" fill="none"/><path d="M1,5q-1,2.500 1,5" stroke="#9a9a9a" stroke-width=".8" fill="none"/><rect x="5" y="0.500" width="2" height="4.500" fill="#c4ccd8"/><rect x="7" y="0.500" width="2" height="4.500" fill="#6c7484"/><path d="M11,2l3,3M14,2.500v2.500h-2.500" stroke="#444" stroke-width="1" fill="none"/><rect x="2" y="6" width="2" height="4.500" fill="#c4ccd8"/><rect x="4" y="6" width="2.500" height="4.500" fill="#6c7484"/><path d="M4,14.500l2.500,-2.500M4,12.500v2h2" stroke="#444" stroke-width="1" fill="none"/><path d="M9.500,11v-2.700a2.200,2.200 0 0 1 4.400,0v2.700z" fill="#fff" stroke="#8c8c8c" stroke-width="1.100"/><rect x="8" y="10.500" width="7.500" height="5.500" rx=".8" fill="#b47c44"/><rect x="12.500" y="10.500" width="3" height="5.500" rx=".8" fill="#94543a"/><rect x="8" y="15" width="7.500" height="1" fill="#7c4428"/><rect x="11" y="12" width="1.500" height="2" fill="#1a0c04"/></svg>
<svg style="left:421px;top:960px;" width="8" height="9" viewBox="0 0 8 9"><path d="M0,2l4,-2l4,2v5l-4,2l-4,-2z" fill="#ecec2c"/><path d="M4,4v5l4,-2v-5z" fill="#c4c41c"/><path d="M0,2l4,2l4,-2l-4,-2z" fill="#fcfc7c"/></svg>
<div style="left:38px;top:977px;width:6px;height:1px;background:repeating-linear-gradient(to right,#000 0 1px,transparent 1px 2px);"></div>
<svg style="left:29px;top:973px;" width="9" height="9" viewBox="0 0 9 9"><rect x="0.500" y="0.500" width="8" height="8" fill="#fff" stroke="#000"/><path d="M2,4.500h5" stroke="#000"/><path d="M4.500,2v5" stroke="#000"/></svg>
<svg style="left:44px;top:972px;" width="14" height="12" viewBox="0 0 14 12"><path d="M0,0.500h5.500l1.500,2h6.500v9.500h-13.500z" fill="#b0b064"/><path d="M0.500,1h5l1.500,2" fill="none" stroke="#c4c47c" stroke-width="1"/><rect x="1" y="3.500" width="11.500" height="7" fill="#c6c68a"/><path d="M3,5h7.500" stroke="#e8e8cc" stroke-width="1.200"/><path d="M2,7.500h3M6,7.500h5.500" stroke="#94944c" stroke-width="1"/><path d="M2,9.500h3M6,9.500h5.500" stroke="#dcdcb4" stroke-width="1"/><path d="M0,11.500h13.500" stroke="#8c8c44" stroke-width="1"/></svg>
<span class="t" style="top:969.9px;height:15px;line-height:15px;left:63.5px;letter-spacing:-0.080px;">ОбработкиОбслуживанияТО</span>
<svg style="left:394px;top:970px;" width="16" height="16" viewBox="0 0 16 16"><path d="M1,4.500l3,-3M1.500,1.500h2.500v2.500" stroke="#555" stroke-width="1" fill="none"/><path d="M1,5q-1,2.500 1,5" stroke="#9a9a9a" stroke-width=".8" fill="none"/><rect x="5" y="0.500" width="2" height="4.500" fill="#c4ccd8"/><rect x="7" y="0.500" width="2" height="4.500" fill="#6c7484"/><path d="M11,2l3,3M14,2.500v2.500h-2.500" stroke="#444" stroke-width="1" fill="none"/><rect x="2" y="6" width="2" height="4.500" fill="#c4ccd8"/><rect x="4" y="6" width="2.500" height="4.500" fill="#6c7484"/><path d="M4,14.500l2.500,-2.500M4,12.500v2h2" stroke="#444" stroke-width="1" fill="none"/><path d="M9.500,11v-2.700a2.200,2.200 0 0 1 4.400,0v2.700z" fill="#fff" stroke="#8c8c8c" stroke-width="1.100"/><rect x="8" y="10.500" width="7.500" height="5.500" rx=".8" fill="#b47c44"/><rect x="12.500" y="10.500" width="3" height="5.500" rx=".8" fill="#94543a"/><rect x="8" y="15" width="7.500" height="1" fill="#7c4428"/><rect x="11" y="12" width="1.500" height="2" fill="#1a0c04"/></svg>
<svg style="left:421px;top:977px;" width="8" height="9" viewBox="0 0 8 9"><path d="M0,2l4,-2l4,2v5l-4,2l-4,-2z" fill="#ecec2c"/><path d="M4,4v5l4,-2v-5z" fill="#c4c41c"/><path d="M0,2l4,2l4,-2l-4,-2z" fill="#fcfc7c"/></svg>
<div style="left:52px;top:647px;width:1px;height:144px;background:repeating-linear-gradient(to bottom,#000 0 1px,transparent 1px 2px);"></div>
<svg style="left:48px;top:650px;" width="9" height="9" viewBox="0 0 9 9"><rect x="0.500" y="0.500" width="8" height="8" fill="#fff" stroke="#000"/><path d="M2,4.500h5" stroke="#000"/><path d="M4.500,2v5" stroke="#000"/></svg>
<div style="left:57px;top:654px;width:5px;height:1px;background:repeating-linear-gradient(to right,#000 0 1px,transparent 1px 2px);"></div>
<svg style="left:48px;top:667px;" width="9" height="9" viewBox="0 0 9 9"><rect x="0.500" y="0.500" width="8" height="8" fill="#fff" stroke="#000"/><path d="M2,4.500h5" stroke="#000"/><path d="M4.500,2v5" stroke="#000"/></svg>
<div style="left:57px;top:671px;width:5px;height:1px;background:repeating-linear-gradient(to right,#000 0 1px,transparent 1px 2px);"></div>
<svg style="left:48px;top:684px;" width="9" height="9" viewBox="0 0 9 9"><rect x="0.500" y="0.500" width="8" height="8" fill="#fff" stroke="#000"/><path d="M2,4.500h5" stroke="#000"/></svg>
<div style="left:57px;top:688px;width:5px;height:1px;background:repeating-linear-gradient(to right,#000 0 1px,transparent 1px 2px);"></div>
<svg style="left:62px;top:648px;" width="9" height="12" viewBox="0 0 9 12"><rect x="1" y="0" width="8" height="3" fill="#2c6cb4"/><rect x="0" y="4.500" width="9" height="3" fill="#2c6cb4"/><rect x="0" y="9" width="9" height="3" fill="#2c6cb4"/></svg>
<svg style="left:62px;top:664px;" width="16" height="15" viewBox="0 0 16 15"><path d="M0,1.500h4M5,1.500h4M10,1.500h3M0,5h4M5,5h4M10,5h3M0,8.500h4M5,8.500h4" stroke="#2c6cb4" stroke-width="2"/><rect x="9" y="8" width="7" height="6" fill="#c4c38c" stroke="#9c9a5c" stroke-width=".8"/><path d="M14.500,0v9" stroke="#9c9a5c"/></svg>
<svg style="left:62px;top:679px;" width="17" height="17" viewBox="0 0 17 17"><rect x="0.500" y="0.500" width="12" height="10" fill="#fff" stroke="#a4acb4"/><rect x="1" y="1" width="11" height="2" fill="#6c9ccc"/><path d="M2,5h9M2,7.500h9" stroke="#c4c4c4"/><rect x="4.500" y="7.500" width="12" height="9" fill="#dcdcdc" stroke="#a4a4a4"/></svg>
<div style="left:71px;top:698px;width:1px;height:77px;background:repeating-linear-gradient(to bottom,#000 0 1px,transparent 1px 2px);"></div>
<div style="left:72px;top:705px;width:10px;height:1px;background:repeating-linear-gradient(to right,#000 0 1px,transparent 1px 2px);"></div>
<svg style="left:82px;top:698px;" width="12" height="13" viewBox="0 0 12 13"><rect x="0" y="0" width="12" height="13" fill="#8cbc8c"/></svg>
<span class="t" style="top:697.5px;height:15px;line-height:15px;left:100px;">ФормаЭлемента</span>
<div style="left:72px;top:722px;width:10px;height:1px;background:repeating-linear-gradient(to right,#000 0 1px,transparent 1px 2px);"></div>
<svg style="left:82px;top:715px;" width="12" height="13" viewBox="0 0 12 13"><rect x="0" y="0" width="12" height="13" fill="#8cbc8c"/></svg>
<span class="t" style="top:714.5px;height:15px;line-height:15px;left:100px;">ФормаЭлемента</span>
<div style="left:72px;top:739px;width:10px;height:1px;background:repeating-linear-gradient(to right,#000 0 1px,transparent 1px 2px);"></div>
<svg style="left:82px;top:732px;" width="12" height="13" viewBox="0 0 12 13"><rect x="0" y="0" width="12" height="13" fill="#8cbc8c"/></svg>
<span class="t" style="top:731.5px;height:15px;line-height:15px;left:100px;">ФормаЭлемента</span>
<div style="left:72px;top:756px;width:10px;height:1px;background:repeating-linear-gradient(to right,#000 0 1px,transparent 1px 2px);"></div>
<svg style="left:82px;top:749px;" width="12" height="13" viewBox="0 0 12 13"><rect x="0" y="0" width="12" height="13" fill="#8cbc8c"/></svg>
<span class="t" style="top:748.5px;height:15px;line-height:15px;left:100px;">ФормаЭлемента</span>
<div style="left:72px;top:773px;width:10px;height:1px;background:repeating-linear-gradient(to right,#000 0 1px,transparent 1px 2px);"></div>
<svg style="left:82px;top:766px;" width="12" height="13" viewBox="0 0 12 13"><rect x="0" y="0" width="12" height="13" fill="#8cbc8c"/></svg>
<span class="t" style="top:765.5px;height:15px;line-height:15px;left:100px;">ФормаЭлемента</span>
<div style="left:53px;top:790px;width:9px;height:1px;background:repeating-linear-gradient(to right,#000 0 1px,transparent 1px 2px);"></div>
<svg style="left:62px;top:781px;" width="17" height="17" viewBox="0 0 17 17"><rect x="0.500" y="0.500" width="15" height="12" fill="#fbfbfb" stroke="#b4b4b4"/><path d="M2,5h5M9,4h5M2,8h9" stroke="#ccd4e4"/><path d="M2,8h5" stroke="#e4b48c"/><rect x="9.500" y="9.500" width="7" height="6" fill="#c4c38c" stroke="#9c9a5c"/></svg>
<span class="t" style="top:782.5px;height:15px;line-height:15px;left:84px;">Макеты</span>
<span class="t" style="top:646.5px;height:15px;line-height:15px;left:84px;">Реквизиты</span>
<span class="t" style="top:663.5px;height:15px;line-height:15px;left:84px;">Табличные части</span>
<span class="t" style="top:680.5px;height:15px;line-height:15px;left:84px;">Формы</span>
<div style="left:0px;top:980px;width:448px;height:8px;background:#e1dcd1;border-top:1px solid #8c897c;"></div>
<div style="left:450px;top:95px;width:1468px;height:885px;background:#fff;border:2px solid #5e5c56;border-right:1px solid #8c897c;border-bottom:1px solid #f4f1ea;"></div>
<div style="left:452px;top:97px;width:17px;height:844px;background:#d6d2c6;background-image:repeating-conic-gradient(#cfcbbf 0 25%,#e4e0d6 0 50%);background-size:2px 2px;"></div>
<span class="t" style="top:115px;height:16px;line-height:16px;font-size:12.5px;color:#c4161c;left:488.75px;font-family:'Liberation Mono',monospace;letter-spacing:0.5px;">Процедура</span>
<span class="t" style="top:115px;height:16px;line-height:16px;font-size:12.5px;color:#1414a8;left:568.75px;font-family:'Liberation Mono',monospace;letter-spacing:0.5px;">ПередОткрытием</span>
<span class="t" style="top:115px;height:16px;line-height:16px;font-size:12.5px;color:#c4161c;left:680.75px;font-family:'Liberation Mono',monospace;letter-spacing:0.5px;">(</span>
<span class="t" style="top:115px;height:16px;line-height:16px;font-size:12.5px;color:#1414a8;left:688.75px;font-family:'Liberation Mono',monospace;letter-spacing:0.5px;">Отказ</span>
<span class="t" style="top:115px;height:16px;line-height:16px;font-size:12.5px;color:#c4161c;left:728.75px;font-family:'Liberation Mono',monospace;letter-spacing:0.5px;">,</span>
<span class="t" style="top:115px;height:16px;line-height:16px;font-size:12.5px;color:#1414a8;left:744.75px;font-family:'Liberation Mono',monospace;letter-spacing:0.5px;">СтандартнаяОбработка</span>
<span class="t" style="top:115px;height:16px;line-height:16px;font-size:12.5px;color:#c4161c;left:904.75px;font-family:'Liberation Mono',monospace;letter-spacing:0.5px;">)</span>
<span class="t" style="top:131px;height:16px;line-height:16px;font-size:12.5px;color:#1414a8;left:520.75px;font-family:'Liberation Mono',monospace;letter-spacing:0.5px;">Инициализация</span>
<span class="t" style="top:131px;height:16px;line-height:16px;font-size:12.5px;color:#c4161c;left:624.75px;font-family:'Liberation Mono',monospace;letter-spacing:0.5px;">();</span>
<span class="t" style="top:147px;height:16px;line-height:16px;font-size:12.5px;color:#c4161c;left:488.75px;font-family:'Liberation Mono',monospace;letter-spacing:0.5px;">КонецПроцедуры</span>
<span class="t" style="top:179px;height:16px;line-height:16px;font-size:12.5px;color:#c4161c;left:488.75px;font-family:'Liberation Mono',monospace;letter-spacing:0.5px;">Процедура</span>
<span class="t" style="top:179px;height:16px;line-height:16px;font-size:12.5px;color:#1414a8;left:568.75px;font-family:'Liberation Mono',monospace;letter-spacing:0.5px;">Инициализация</span>
<span class="t" style="top:179px;height:16px;line-height:16px;font-size:12.5px;color:#c4161c;left:672.75px;font-family:'Liberation Mono',monospace;letter-spacing:0.5px;">()</span>
<svg style="left:473px;top:118px;" width="9" height="9" viewBox="0 0 9 9"><rect x="0.500" y="0.500" width="8" height="8" fill="#fff" stroke="#555"/><path d="M2,4.500h5" stroke="#000"/></svg>
<div style="left:477px;top:127px;width:1px;height:28px;background:#444;"></div>
<div style="left:477px;top:154px;width:5px;height:1px;background:#444;"></div>
<svg style="left:473px;top:182px;" width="9" height="9" viewBox="0 0 9 9"><rect x="0.500" y="0.500" width="8" height="8" fill="#fff" stroke="#555"/><path d="M2,4.500h5" stroke="#000"/></svg>
<div style="left:477px;top:191px;width:1px;height:739px;background:#444;"></div>
<span class="t" style="top:819px;height:16px;line-height:16px;font-size:12.5px;color:#1414a8;left:520.75px;font-family:'Liberation Mono',monospace;letter-spacing:0.5px;">Запрос</span>
<span class="t" style="top:819px;height:16px;line-height:16px;font-size:12.5px;color:#c4161c;left:576.75px;font-family:'Liberation Mono',monospace;letter-spacing:0.5px;">=</span>
<span class="t" style="top:819px;height:16px;line-height:16px;font-size:12.5px;color:#c4161c;left:592.75px;font-family:'Liberation Mono',monospace;letter-spacing:0.5px;">Новый</span>
<span class="t" style="top:819px;height:16px;line-height:16px;font-size:12.5px;color:#1414a8;left:640.75px;font-family:'Liberation Mono',monospace;letter-spacing:0.5px;">Запрос</span>
<span class="t" style="top:819px;height:16px;line-height:16px;font-size:12.5px;color:#c4161c;left:688.75px;font-family:'Liberation Mono',monospace;letter-spacing:0.5px;">(</span>
<span class="t" style="top:819px;height:16px;line-height:16px;font-size:12.5px;left:696.75px;font-family:'Liberation Mono',monospace;letter-spacing:0.5px;">"ВЫБРАТЬ</span>
<span class="t" style="top:835px;height:16px;line-height:16px;font-size:12.5px;left:696.75px;font-family:'Liberation Mono',monospace;letter-spacing:0.5px;">| ЗаказПокупателяТовары.Номенклатура КАК ПоЗаказуНоменклатура,</span>
<span class="t" style="top:851px;height:16px;line-height:16px;font-size:12.5px;left:696.75px;font-family:'Liberation Mono',monospace;letter-spacing:0.5px;">| ЗаказПокупателяТовары.ХарактеристикаНоменклатуры КАК ПоЗаказуХарактеристикаНоменклатуры,</span>
<span class="t" style="top:867px;height:16px;line-height:16px;font-size:12.5px;left:696.75px;font-family:'Liberation Mono',monospace;letter-spacing:0.5px;">| ЕСТЬNULL(ЗаказПокупателяТовары.Количество, 0) КАК ПоЗаказуКоличество,</span>
<span class="t" style="top:883px;height:16px;line-height:16px;font-size:12.5px;left:696.75px;font-family:'Liberation Mono',monospace;letter-spacing:0.5px;">| РеализацияТоваровУслугТовары.Номенклатура КАК ПоРеалНоменклатура,</span>
<span class="t" style="top:899px;height:16px;line-height:16px;font-size:12.5px;left:696.75px;font-family:'Liberation Mono',monospace;letter-spacing:0.5px;">| РеализацияТоваровУслугТовары.ХарактеристикаНоменклатуры КАК ПоРеалХарактеристикаНоменклатуры,</span>
<span class="t" style="top:915px;height:16px;line-height:16px;font-size:12.5px;left:696.75px;font-family:'Liberation Mono',monospace;letter-spacing:0.5px;">| ЕСТЬNULL(РеализацияТоваровУслугТовары.Количество, 0) КАК ПоРеалКоличество,</span>
<div style="left:1902px;top:97px;width:15px;height:844px;background:#fbf6ec;border-left:1px solid #e4e0d4;"></div>
<div style="left:1904px;top:99px;width:12px;height:12px;background:#e4e0d6;border:1px solid #c9c5b8;"></div>
<svg style="left:1904px;top:99px;" width="12" height="12" viewBox="0 0 12 12"><path d="M2,7l4,-4l4,4" fill="none" stroke="#000" stroke-width="1.200"/></svg>
<div style="left:1904px;top:928px;width:12px;height:12px;background:#e4e0d6;border:1px solid #c9c5b8;"></div>
<svg style="left:1904px;top:928px;" width="12" height="12" viewBox="0 0 12 12"><path d="M2,4l4,4l4,-4" fill="none" stroke="#000" stroke-width="1.200"/></svg>
<div style="left:1904px;top:111px;width:12px;height:145px;background:#dedacf;border:1px solid #c4c0b4;"></div>
<div style="left:452px;top:941px;width:1450px;height:14px;background:#fbf6ec;border-top:1px solid #e4e0d4;"></div>
<div style="left:1902px;top:941px;width:15px;height:14px;background:#e1dcd1;"></div>
<div style="left:454px;top:943px;width:11px;height:11px;background:#e4e0d6;border:1px solid #c9c5b8;"></div>
<svg style="left:454px;top:943px;" width="11" height="11" viewBox="0 0 11 11"><path d="M7,2l-3.500,3.500l3.500,3.500" fill="none" stroke="#000" stroke-width="1.200"/></svg>
<div style="left:1890px;top:943px;width:11px;height:11px;background:#e4e0d6;border:1px solid #c9c5b8;"></div>
<svg style="left:1890px;top:943px;" width="11" height="11" viewBox="0 0 11 11"><path d="M4,2l3.500,3.500l-3.500,3.500" fill="none" stroke="#000" stroke-width="1.200"/></svg>
<div style="left:466px;top:943px;width:616px;height:11px;background:#dedacf;border:1px solid #c4c0b4;"></div>
<div style="left:452px;top:955px;width:1465px;height:24px;background:#e6e2d8;border-top:2px solid #8c897c;"></div>
<div style="left:455px;top:956px;width:72px;height:20px;border:1px solid #cdc9bc;border-top:none;"></div>
<svg style="left:463px;top:961px;" width="13" height="12" viewBox="0 0 13 12"><rect x="0.500" y="0.500" width="10" height="8" fill="#c9cfd4" stroke="#6c6c6c"/><rect x="1" y="1" width="9" height="2" fill="#5c6c7c"/><path d="M2,5h7M2,7h7" stroke="#7c7c7c" stroke-dasharray="2 1"/></svg>
<span class="t" style="top:958.5px;height:15px;line-height:15px;left:480px;letter-spacing:0.102px;">Диалог</span>
<div style="left:527px;top:956px;width:73px;height:21px;background:#e9e5db;border:1px solid #8c897c;border-top:none;"></div>
<svg style="left:535px;top:961px;" width="13" height="12" viewBox="0 0 13 12"><rect x="0.500" y="-0.500" width="10" height="11" fill="#fff" stroke="#b4bccc"/><path d="M2,2h3M6,2h3M2,4.500h3M6,4.500h3M2,7h3M6,7h3" stroke="#6c9ccc"/></svg>
<span class="t" style="top:958.5px;height:15px;line-height:15px;left:551.5px;letter-spacing:-0.167px;">Модуль</span>
<div style="left:600px;top:956px;width:90px;height:20px;border:1px solid #cdc9bc;border-top:none;"></div>
<svg style="left:608px;top:961px;" width="13" height="12" viewBox="0 0 13 12"><rect x="2" y="0" width="8" height="3" fill="#2c6cb4"/><rect x="1" y="4.500" width="9" height="3" fill="#2c6cb4"/><rect x="1" y="9" width="9" height="3" fill="#2c6cb4"/></svg>
<span class="t" style="top:958.5px;height:15px;line-height:15px;left:623px;letter-spacing:0.288px;">Реквизиты</span>
<div style="left:493px;top:189px;width:1013px;height:40px;background:#ece6db;border:4px solid #a6a6a6;border-top:none;"></div>
<div style="left:493px;top:189px;width:1013px;height:21px;background:#a6a6a6;"></div>
<span class="t" style="top:192.5px;height:15px;line-height:15px;color:#d4d4d4;left:501px;font-weight:bold;letter-spacing:0.391px;">Выражение</span>
<svg style="left:1466px;top:195px;" width="11" height="11" viewBox="0 0 11 11"><rect x="0.500" y="1" width="10" height="9.500" fill="none" stroke="#d8d8d8"/><path d="M0,1h11" stroke="#d8d8d8"/></svg>
<svg style="left:1488px;top:196px;" width="9" height="9" viewBox="0 0 9 9"><path d="M0.500,0.500l8,8M8.500,0.500l-8,8" stroke="#dcdcdc" stroke-width="1.600"/></svg>
<div style="left:1396px;top:216px;width:99px;height:4px;border-top:1px solid #8c897c;"></div>
<div style="left:85px;top:217px;width:1773px;height:590px;background:#ece6db;border:4px solid #5b7ab5;border-right-color:#4f6ca6;border-bottom-color:#4f6ca6;box-shadow:inset 1px 1px 0 #dfe6f2,inset -1px -1px 0 #dfe6f2;"></div>
<div style="left:85px;top:217px;width:1773px;height:22px;background:#5b7ab5;"></div>
<div style="left:1857px;top:217px;width:1px;height:590px;background:#2f4a7c;"></div>
<div style="left:85px;top:806px;width:1773px;height:1px;background:#2f4a7c;"></div>
<div style="left:89px;top:239px;width:1765px;height:1px;background:#e4e9f3;"></div>
<span class="t" style="top:222.5px;height:15px;line-height:15px;color:#fff;left:93px;font-weight:bold;letter-spacing:0.163px;">Отбор</span>
<svg style="left:1818px;top:224px;" width="11" height="11" viewBox="0 0 11 11"><rect x="0.500" y="1" width="10" height="9.500" fill="none" stroke="#fff"/><path d="M0,1h11" stroke="#fff" stroke-width="1.500"/></svg>
<svg style="left:1840px;top:225px;" width="10" height="9" viewBox="0 0 10 9"><path d="M0.700,0.500l8.500,8M9.200,0.500l-8.500,8" stroke="#fff" stroke-width="1.800"/></svg>
<span class="t" style="top:247.5px;height:15px;line-height:15px;left:94.5px;letter-spacing:-0.035px;">Количество элементов:</span>
<div style="left:217px;top:245px;width:42px;height:19px;background:#ece6db;border:1px solid #a9a596;box-shadow:inset 1px 1px 0 #fff;"></div>
<span class="t" style="top:247px;height:15px;line-height:15px;right:1664.5px;">3</span>
<svg style="left:1698px;top:249px;" width="16" height="15" viewBox="0 0 16 15"><rect x="6" y="0" width="9" height="3" fill="#b4b8c4"/><rect x="2" y="4" width="10" height="3" fill="#b4b8c4"/><rect x="5" y="8" width="8" height="3" fill="#c4c8d0"/><rect x="5" y="12" width="8" height="3" fill="#c4c8d0"/><path d="M0,6h8" stroke="#a4a8b8" stroke-width="1.500"/><path d="M8,6l5,7l3,-1.500l-5,-7z" fill="#a8b0a0"/></svg>
<svg style="left:1720px;top:249px;" width="17" height="15" viewBox="0 0 17 15"><rect x="5" y="0" width="8" height="2" fill="#b8c0d8"/><rect x="1" y="3" width="8" height="2" fill="#8c98c4"/><rect x="1" y="6" width="8" height="2" fill="#8c98c4"/><rect x="1" y="9" width="8" height="2" fill="#8c98c4"/><rect x="1" y="12" width="8" height="2" fill="#8c98c4"/><rect x="8" y="4" width="9" height="8" fill="#f4f4f4" stroke="#c4c4c4" stroke-width=".6"/><path d="M6,14h11" stroke="#8c8c7c" stroke-width="1.600"/></svg>
<div style="left:1748px;top:246px;width:100px;height:19px;background:linear-gradient(#e8e3d9,#ddd8cc);border:1px solid #7c7664;border-radius:2px;box-shadow:inset 0 0 0 1px #a49e8c;"></div>
<span class="t" style="top:247.5px;height:15px;line-height:15px;left:1776.5px;letter-spacing:0.089px;">Закрыть</span>
<div style="left:1748px;top:273px;width:100px;height:20px;background:linear-gradient(#e8e3d9,#ddd8cc);border:1px solid #a9a596;border-radius:2px;"></div>
<span class="t" style="top:275.5px;height:15px;line-height:15px;left:1776.5px;letter-spacing:-0.022px;">Справка</span>
<div style="left:94px;top:269px;width:1647px;height:529px;background:#fff;border:1px solid #8c897c;"></div>
<div style="left:95px;top:270px;width:1645px;height:15px;background:#ebe5d9;border-bottom:1px solid #8c897c;"></div>
<div style="left:231px;top:270px;width:1px;height:66px;background:#8c897c;"></div>
<span class="t" style="top:269.5px;height:15px;line-height:15px;left:97px;letter-spacing:0.174px;">Индекс</span>
<div style="left:368px;top:270px;width:1px;height:66px;background:#8c897c;"></div>
<span class="t" style="top:269.5px;height:15px;line-height:15px;left:234px;letter-spacing:-0.061px;">Значение элемента</span>
<div style="left:505px;top:270px;width:1px;height:66px;background:#8c897c;"></div>
<span class="t" style="top:269.5px;height:15px;line-height:15px;left:371px;letter-spacing:0.076px;">Тип элемента</span>
<div style="left:642px;top:270px;width:1px;height:66px;background:#8c897c;"></div>
<span class="t" style="top:269.5px;height:15px;line-height:15px;left:508px;letter-spacing:0.030px;">Использование</span>
<div style="left:779px;top:270px;width:1px;height:66px;background:#8c897c;"></div>
<span class="t" style="top:269.5px;height:15px;line-height:15px;left:645px;letter-spacing:-0.223px;">Значение</span>
<div style="left:916px;top:270px;width:1px;height:66px;background:#8c897c;"></div>
<span class="t" style="top:269.5px;height:15px;line-height:15px;left:782px;letter-spacing:-0.191px;">ВидСравнения</span>
<div style="left:1053px;top:270px;width:1px;height:66px;background:#8c897c;"></div>
<span class="t" style="top:269.5px;height:15px;line-height:15px;left:919px;letter-spacing:-0.304px;">ЗначениеС</span>
<div style="left:1190px;top:270px;width:1px;height:66px;background:#8c897c;"></div>
<span class="t" style="top:269.5px;height:15px;line-height:15px;left:1056px;letter-spacing:-0.181px;">ЗначениеПо</span>
<div style="left:1327px;top:270px;width:1px;height:66px;background:#8c897c;"></div>
<span class="t" style="top:269.5px;height:15px;line-height:15px;left:1193px;letter-spacing:0.188px;">Имя</span>
<div style="left:1464px;top:270px;width:1px;height:66px;background:#8c897c;"></div>
<span class="t" style="top:269.5px;height:15px;line-height:15px;left:1330px;letter-spacing:-0.025px;">Представление</span>
<div style="left:1601px;top:270px;width:1px;height:66px;background:#8c897c;"></div>
<span class="t" style="top:269.5px;height:15px;line-height:15px;left:1467px;letter-spacing:0.003px;">ТипЗначения</span>
<span class="t" style="top:269.5px;height:15px;line-height:15px;left:1604px;letter-spacing:0.111px;">ПутьКДанным</span>
<div style="left:95px;top:318px;width:1645px;height:1px;background:#8c897c;"></div>
<div style="left:95px;top:335px;width:1645px;height:1px;background:#8c897c;"></div>
<div style="left:95px;top:284px;width:1645px;height:1px;background:repeating-linear-gradient(to right,#000 0 1px,#fff 1px 2px);"></div>
<div style="left:95px;top:301px;width:1645px;height:1px;background:repeating-linear-gradient(to right,#000 0 1px,#fff 1px 2px);"></div>
<div style="left:95px;top:285px;width:1px;height:16px;background:repeating-linear-gradient(to bottom,#000 0 1px,#fff 1px 2px);"></div>
<div style="left:1739px;top:285px;width:1px;height:16px;background:repeating-linear-gradient(to bottom,#000 0 1px,#fff 1px 2px);"></div>
<span class="t" style="top:285.5px;height:15px;line-height:15px;right:1689.5px;">0</span>
<span class="t" style="top:285.5px;height:15px;line-height:15px;left:235px;letter-spacing:0.140px;">ЗаказПокупателяДата ...</span>
<span class="t" style="top:285.5px;height:15px;line-height:15px;left:372px;letter-spacing:-0.087px;">ЭлементОтбора</span>
<span class="t" style="top:285.5px;height:15px;line-height:15px;left:509px;letter-spacing:-0.172px;">истина</span>
<span class="t" style="top:285.5px;height:15px;line-height:15px;left:646px;letter-spacing:-0.128px;">01.06.2010 0:00:00</span>
<span class="t" style="top:285.5px;height:15px;line-height:15px;left:783px;letter-spacing:-0.115px;">Больше</span>
<span class="t" style="top:285.5px;height:15px;line-height:15px;left:920px;letter-spacing:-0.128px;">01.01.0001 0:00:00</span>
<span class="t" style="top:285.5px;height:15px;line-height:15px;left:1057px;letter-spacing:-0.128px;">01.01.0001 0:00:00</span>
<span class="t" style="top:285.5px;height:15px;line-height:15px;left:1194px;letter-spacing:0.594px;">""</span>
<span class="t" style="top:285.5px;height:15px;line-height:15px;left:1331px;letter-spacing:0.316px;">"ЗаказПокупателяДата"</span>
<span class="t" style="top:285.5px;height:15px;line-height:15px;left:1468px;letter-spacing:0.410px;">Дата</span>
<span class="t" style="top:285.5px;height:15px;line-height:15px;left:1605px;letter-spacing:0.316px;">"ЗаказПокупателяДата"</span>
<span class="t" style="top:302.5px;height:15px;line-height:15px;right:1689.5px;">1</span>
<span class="t" style="top:302.5px;height:15px;line-height:15px;left:235px;letter-spacing:0.086px;">ЗаказПокупателяНоме...</span>
<span class="t" style="top:302.5px;height:15px;line-height:15px;left:372px;letter-spacing:-0.087px;">ЭлементОтбора</span>
<span class="t" style="top:302.5px;height:15px;line-height:15px;left:509px;letter-spacing:-0.172px;">истина</span>
<span class="t" style="top:302.5px;height:15px;line-height:15px;left:646px;letter-spacing:0.206px;">"ВПП"</span>
<span class="t" style="top:302.5px;height:15px;line-height:15px;left:783px;letter-spacing:-0.127px;">Содержит</span>
<span class="t" style="top:302.5px;height:15px;line-height:15px;left:920px;letter-spacing:0.594px;">""</span>
<span class="t" style="top:302.5px;height:15px;line-height:15px;left:1057px;letter-spacing:0.594px;">""</span>
<span class="t" style="top:302.5px;height:15px;line-height:15px;left:1194px;letter-spacing:0.594px;">""</span>
<span class="t" style="top:302.5px;height:15px;line-height:15px;left:1331px;letter-spacing:0.130px;">"ЗаказПокупателяНоме...</span>
<span class="t" style="top:302.5px;height:15px;line-height:15px;left:1468px;letter-spacing:-0.065px;">Строка</span>
<span class="t" style="top:302.5px;height:15px;line-height:15px;left:1605px;letter-spacing:0.143px;">"ЗаказПокупателяНомер"</span>
<span class="t" style="top:319.5px;height:15px;line-height:15px;right:1689.5px;">2</span>
<span class="t" style="top:319.5px;height:15px;line-height:15px;left:235px;letter-spacing:0.070px;">РеализацияТоваров = ""</span>
<span class="t" style="top:319.5px;height:15px;line-height:15px;left:372px;letter-spacing:-0.087px;">ЭлементОтбора</span>
<span class="t" style="top:319.5px;height:15px;line-height:15px;left:509px;letter-spacing:-0.172px;">истина</span>
<span class="t" style="top:319.5px;height:15px;line-height:15px;left:783px;letter-spacing:0.072px;">Равно</span>
<span class="t" style="top:319.5px;height:15px;line-height:15px;left:1194px;letter-spacing:0.594px;">""</span>
<span class="t" style="top:319.5px;height:15px;line-height:15px;left:1331px;letter-spacing:0.162px;">"РеализацияТоваров"</span>
<span class="t" style="top:319.5px;height:15px;line-height:15px;left:1468px;letter-spacing:0.077px;">Документ ссылка: Реал...</span>
<span class="t" style="top:319.5px;height:15px;line-height:15px;left:1605px;letter-spacing:0.162px;">"РеализацияТоваров"</span>
<svg style="left:560px;top:240px;" width="800" height="220" viewBox="0 0 800 220"><rect x="624" y="9" width="142" height="108.500" rx="8" fill="none" stroke="#d0141c" stroke-width="2"/><path d="M649,117.500L553,197H15.500" fill="none" stroke="#d0141c" stroke-width="2"/></svg>
<span class="t" style="top:405px;height:18px;line-height:18px;font-size:14px;color:#c8141c;left:581.5px;letter-spacing:0.754px;">Почему имена оборов = ""   ?</span>
<svg style="left:3px;top:987px;" width="3" height="14" viewBox="0 0 3 14"><rect x="0" y="0" width="3" height="1" fill="#9c988c"/><rect x="0" y="2" width="3" height="1" fill="#9c988c"/><rect x="0" y="4" width="3" height="1" fill="#9c988c"/><rect x="0" y="6" width="3" height="1" fill="#9c988c"/><rect x="0" y="8" width="3" height="1" fill="#9c988c"/><rect x="0" y="10" width="3" height="1" fill="#9c988c"/><rect x="0" y="12" width="3" height="1" fill="#9c988c"/></svg>
<svg style="left:12px;top:986px;" width="16" height="16" viewBox="0 0 16 16"><path d="M0,15l11,-13" stroke="#c03030" stroke-width="1"/><path d="M1,16l11,-13" stroke="#16167c" stroke-width="1"/><path d="M7,5l5,-3l4,8l-5,3z" fill="#3c94d4"/></svg>
<svg style="left:35px;top:986px;" width="16" height="16" viewBox="0 0 16 16"><path d="M1,15l10,-12" stroke="#b4b4b0" stroke-width="1.200"/><path d="M8,5l5,-3l3,7l-5,3z" fill="#c4ccd4"/><path d="M3,3q5,-4 10,0" fill="none" stroke="#a4acb4"/><path d="M14,4l-3,0l2,-3z" fill="#a4acb4"/></svg>
<svg style="left:58px;top:986px;" width="16" height="16" viewBox="0 0 16 16"><path d="M1,15l10,-12" stroke="#b4b4b0" stroke-width="1.200"/><path d="M8,5l5,-3l3,7l-5,3z" fill="#c4ccd4"/><path d="M3,3q5,-4 10,0" fill="none" stroke="#a4acb4"/><path d="M2,4l3,0l-2,-3z" fill="#a4acb4"/></svg>
<svg style="left:81px;top:986px;" width="16" height="16" viewBox="0 0 16 16"><path d="M1,15l10,-12" stroke="#b4b4b0" stroke-width="1.200"/><path d="M8,5l5,-3l3,7l-5,3z" fill="#c4ccd4"/><path d="M1,10l5,5M6,10l-5,5" stroke="#b0b0a8"/></svg>
<svg style="left:103px;top:985px;" width="2" height="18" viewBox="0 0 2 18"><rect x="0" y="0" width="1" height="18" fill="#c4bfb2"/><rect x="1" y="0" width="1" height="18" fill="#f4f1ea"/></svg>
<svg style="left:111px;top:986px;" width="16" height="16" viewBox="0 0 16 16"><path d="M1,3h13M4,6h10M4,9h10M1,12h13" stroke="#b4b4b0" stroke-width="1.300"/></svg>
<svg style="left:132px;top:986px;" width="16" height="16" viewBox="0 0 16 16"><path d="M8,2h8M10,5h6M10,8h6M8,11h8M10,14h6" stroke="#b4b4b0" stroke-width="1.300"/><path d="M0,5h4v-3l4,4.500l-4,4.500v-3h-4z" fill="#9ca0b4"/></svg>
<svg style="left:155px;top:986px;" width="16" height="16" viewBox="0 0 16 16"><path d="M8,2h8M10,5h6M10,8h6M8,11h8M10,14h6" stroke="#b4b4b0" stroke-width="1.300"/><path d="M8,5h-4v-3l-4,4.500l4,4.500v-3h4z" fill="#9ca0b4"/></svg>
<svg style="left:177px;top:985px;" width="2" height="18" viewBox="0 0 2 18"><rect x="0" y="0" width="1" height="18" fill="#c4bfb2"/><rect x="1" y="0" width="1" height="18" fill="#f4f1ea"/></svg>
<svg style="left:184px;top:986px;" width="16" height="16" viewBox="0 0 16 16"><rect x="0" y="1" width="10" height="12" fill="#fbfbff"/><path d="M1,3h7M1,5.500h8M1,8h7M1,10.500h5" stroke="#9cb4d4" stroke-width="1"/><path d="M14,0v7q0,4 -6,5" fill="none" stroke="#06067c" stroke-width="1.500"/><path d="M5,11.500l5,-3v6z" fill="#06067c"/></svg>
<svg style="left:205px;top:1000px;" width="7" height="4" viewBox="0 0 7 4"><polygon points="0,0 7,0 3.5,4" fill="#000"/></svg>
<div style="left:1px;top:1008px;width:172px;height:20px;background:#a4a4a4;"></div>
<svg style="left:3px;top:1010px;" width="17" height="17" viewBox="0 0 17 17"><rect x="9" y="1" width="5.500" height="5.500" fill="#f6f230" stroke="#a4a010" stroke-width=".6" transform="rotate(45 11.750 3.750)"/><rect x="1" y="8.500" width="8" height="6" fill="#7cd4f4" stroke="#2c84c4"/><path d="M3,10.500h4l-2,2.500z" fill="#000"/><path d="M6,8l2,-2" stroke="#8c8c8c" stroke-width=".8" stroke-dasharray="1 1"/></svg>
<span class="t" style="top:1010.5px;height:15px;line-height:15px;color:#c4c4c4;left:20px;letter-spacing:0.121px;">...\АвтоматизированноеРа...</span>
<div style="left:174px;top:1008px;width:172px;height:20px;background:#5b7ab5;"></div>
<svg style="left:177px;top:1012px;" width="14" height="12" viewBox="0 0 14 12"><rect x="0.500" y="0.500" width="13" height="10" fill="#d4dcd8" stroke="#7c8484"/><rect x="1" y="1" width="12" height="2.500" fill="#5c8c8c"/><path d="M2,5.500h10M2,8h10" stroke="#8c8c8c" stroke-dasharray="2 1"/></svg>
<span class="t" style="top:1010.5px;height:15px;line-height:15px;color:#fff;left:193.5px;letter-spacing:0.084px;">C:\Documents and ...: Форма</span>
<div style="left:347px;top:1008px;width:172px;height:20px;background:#a4a4a4;"></div>
<svg style="left:350px;top:1012px;" width="14" height="12" viewBox="0 0 14 12"><rect x="0.500" y="0.500" width="13" height="10" fill="#d4dcd8" stroke="#7c8484"/><rect x="1" y="1" width="12" height="2.500" fill="#5c8c8c"/><path d="M2,5.500h10M2,8h10" stroke="#8c8c8c" stroke-dasharray="2 1"/></svg>
<span class="t" style="top:1010.5px;height:15px;line-height:15px;color:#c4c4c4;left:366.5px;letter-spacing:-0.086px;">...: ФормаЭлемента [Тольк...</span>
<div style="left:520px;top:1008px;width:172px;height:20px;background:#a4a4a4;"></div>
<svg style="left:522px;top:1010px;" width="17" height="17" viewBox="0 0 17 17"><rect x="9" y="1" width="5.500" height="5.500" fill="#f6f230" stroke="#a4a010" stroke-width=".6" transform="rotate(45 11.750 3.750)"/><rect x="1" y="8.500" width="8" height="6" fill="#7cd4f4" stroke="#2c84c4"/><path d="M3,10.500h4l-2,2.500z" fill="#000"/><path d="M6,8l2,-2" stroke="#8c8c8c" stroke-width=".8" stroke-dasharray="1 1"/></svg>
<span class="t" style="top:1010.5px;height:15px;line-height:15px;color:#c4c4c4;left:539px;letter-spacing:-0.036px;">C:\D...\SaleConsoleUT10,3.epf</span>
<div style="left:693px;top:1008px;width:172px;height:20px;background:#a4a4a4;"></div>
<svg style="left:696px;top:1012px;" width="14" height="12" viewBox="0 0 14 12"><rect x="0.500" y="0.500" width="13" height="10" fill="#d4dcd8" stroke="#7c8484"/><rect x="1" y="1" width="12" height="2.500" fill="#5c8c8c"/><path d="M2,5.500h10M2,8h10" stroke="#8c8c8c" stroke-dasharray="2 1"/></svg>
<span class="t" style="top:1010.5px;height:15px;line-height:15px;color:#c4c4c4;left:712.5px;letter-spacing:-0.227px;">...: КонсольМенеджераПоП...</span>
<div style="left:0px;top:1030px;width:1920px;height:1px;background:#f4f1ea;"></div>
<span class="t" style="top:1032.5px;height:15px;line-height:15px;left:5px;letter-spacing:-0.008px;">Для получения подсказки нажмите F1</span>
<div style="left:1628px;top:1031px;width:28px;height:18px;border:1px solid;border-color:#c9c5b8 #f7f5ef #f7f5ef #c9c5b8;"></div>
<div style="left:1662px;top:1031px;width:32px;height:18px;border:1px solid;border-color:#c9c5b8 #f7f5ef #f7f5ef #c9c5b8;"></div>
<div style="left:1700px;top:1031px;width:30px;height:18px;border:1px solid;border-color:#c9c5b8 #f7f5ef #f7f5ef #c9c5b8;"></div>
<div style="left:1736px;top:1031px;width:23px;height:18px;border:1px solid;border-color:#c9c5b8 #f7f5ef #f7f5ef #c9c5b8;"></div>
<div style="left:1765px;top:1031px;width:155px;height:18px;border:1px solid;border-color:#c9c5b8 #f7f5ef #f7f5ef #c9c5b8;"></div>
<div style="left:0px;top:1031px;width:1622px;height:18px;border:1px solid;border-color:#c9c5b8 #f7f5ef #f7f5ef #c9c5b8;"></div>
<span class="t" style="top:1032.5px;height:15px;line-height:15px;color:#8c8a80;left:1632px;letter-spacing:-0.875px;">CAP</span>
<span class="t" style="top:1032.5px;height:15px;line-height:15px;left:1665px;letter-spacing:-0.021px;">NUM</span>
<span class="t" style="top:1032.5px;height:15px;line-height:15px;color:#8c8a80;left:1703px;letter-spacing:-0.615px;">OVR</span>
<span class="t" style="top:1032.5px;height:15px;line-height:15px;left:1739px;letter-spacing:-0.391px;">ru</span>
<svg style="left:1750px;top:1039px;" width="6" height="3" viewBox="0 0 6 3"><polygon points="0,0 6,0 3.0,3" fill="#000"/></svg>
<span class="t" style="top:1032.5px;height:15px;line-height:15px;left:1768px;letter-spacing:-0.208px;">Стр: 16</span>
<span class="t" style="top:1032.5px;height:15px;line-height:15px;left:1845px;letter-spacing:-0.009px;">Кол: 25</span>
<div style="left:0px;top:1050px;width:1920px;height:30px;background:#d4d0c8;border-top:1px solid #d4d0c8;box-shadow:inset 0 1px 0 #fff;"></div>
<div style="left:0px;top:1050px;width:1920px;height:1px;background:#d4d0c8;"></div>
<div style="left:0px;top:1051px;width:1920px;height:1px;background:#fff;"></div>
<div style="left:2px;top:1054px;width:51px;height:22px;background:#d4d0c8;border:1px solid;border-color:#fff #404040 #404040 #fff;box-shadow:inset -1px -1px 0 #808080;"></div>
<svg style="left:5px;top:1057px;" width="16" height="16" viewBox="0 0 16 16"><path d="M1,3q3,-2 6,0l-1,5q-3,-2 -6,0z" fill="#e8502c"/><path d="M8,3.500q3,2 6,0l-1,5q-3,2 -6,0z" fill="#6cbc3c"/><path d="M0,9q3,-2 6,0l-1,5q-3,-2 -6,0z" fill="#3c6cd4"/><path d="M7,9.500q3,2 6,0l-1,5q-3,2 -6,0z" fill="#f4c42c"/></svg>
<span class="t" style="top:1057px;height:16px;line-height:16px;font-size:12px;left:22px;font-weight:bold;letter-spacing:-0.172px;">Пуск</span>
<div style="left:60px;top:1055px;width:2px;height:21px;border-left:1px solid #fff;border-right:1px solid #a4a098;"></div>
<div style="left:398px;top:1055px;width:2px;height:21px;border-left:1px solid #fff;border-right:1px solid #a4a098;"></div>
<svg style="left:70px;top:1057px;" width="16" height="16" viewBox="0 0 16 16"><circle cx="8" cy="8.500" r="6.500" fill="#2c8ce4"/><text x="3.500" y="13" font-size="13" font-weight="bold" font-family="Liberation Sans,sans-serif" fill="#fff">e</text><path d="M1,11q6,-9 14,-8" fill="none" stroke="#6cc4f4" stroke-width="1.500"/></svg>
<svg style="left:93.05px;top:1057px;" width="16" height="16" viewBox="0 0 16 16"><rect x="1" y="1" width="14" height="14" rx="3" fill="#2c7cd4"/><path d="M4,5h8v7h-8z" fill="#fff"/><path d="M6,8l2,2l4,-5" stroke="#2c5ca4" fill="none" stroke-width="1.500"/><circle cx="13" cy="7" r="1.500" fill="#e4742c"/></svg>
<svg style="left:116.1px;top:1057px;" width="16" height="16" viewBox="0 0 16 16"><ellipse cx="8" cy="8" rx="6.500" ry="7.500" fill="#d4141c"/><ellipse cx="8" cy="8" rx="2.700" ry="5" fill="#fff"/></svg>
<svg style="left:139.15px;top:1057px;" width="16" height="16" viewBox="0 0 16 16"><rect x="5" y="3" width="5" height="11" rx="1" fill="#5ca43c" stroke="#7c8474"/><rect x="6" y="0" width="2" height="3" fill="#8c9484"/><path d="M1,10h4M11,10h4M3,8v4M13,8v4" stroke="#9ca49c" stroke-width="1.500"/></svg>
<svg style="left:162.2px;top:1057px;" width="16" height="16" viewBox="0 0 16 16"><rect x="0.500" y="0.500" width="15" height="15" fill="#1c9c3c" stroke="#c4d4c4"/><path d="M4,3v7q0,3 3.500,3M11,3v10M7.500,13h4" stroke="#fff" stroke-width="2.200" fill="none"/></svg>
<svg style="left:185.25px;top:1057px;" width="16" height="16" viewBox="0 0 16 16"><path d="M0,6q4,-6 8,-2q4,-4 8,0q-2,8 -8,8q-6,0 -8,-6z" fill="#f4e42c"/><path d="M2,9l10,-6" stroke="#a4142c" stroke-width="2"/><text x="6" y="16" font-size="7" font-weight="bold" font-family="Liberation Sans,sans-serif" fill="#000">V7</text></svg>
<svg style="left:208.3px;top:1057px;" width="16" height="16" viewBox="0 0 16 16"><path d="M0.500,0.500h12l3,3v12h-15z" fill="#1c3cc4"/><rect x="3" y="0.500" width="8" height="5" fill="#fff"/><rect x="2" y="8" width="12" height="7.500" fill="#fff"/><path d="M3,10.500h10M3,13h10" stroke="#d4142c" stroke-width="1.300"/><rect x="8" y="1" width="2" height="3.500" fill="#1c3cc4"/></svg>
<svg style="left:231.35px;top:1057px;" width="16" height="16" viewBox="0 0 16 16"><rect x="0" y="0" width="16" height="16" fill="#d4441c"/><rect x="1.500" y="1.500" width="13" height="13" fill="#ec6c2c"/><path d="M3,4l5,4l5,-4M3,8l5,4l5,-4" stroke="#fff" stroke-width="2" fill="none"/></svg>
<svg style="left:254.4px;top:1057px;" width="16" height="16" viewBox="0 0 16 16"><rect x="0" y="0" width="16" height="16" rx="2" fill="#f4dc14"/><text x="1" y="8" font-size="8" font-weight="bold" font-family="Liberation Sans,sans-serif" fill="#d4141c">1C</text><text x="2" y="15" font-size="8" font-family="Liberation Sans,sans-serif" fill="#e4741c">V8</text></svg>
<svg style="left:277.45px;top:1057px;" width="16" height="16" viewBox="0 0 16 16"><circle cx="5" cy="10" r="4" fill="#3c74d4"/><circle cx="11" cy="10" r="4" fill="#3c9c3c"/><circle cx="8" cy="5" r="4" fill="#6cc43c"/><circle cx="8" cy="9" r="2.500" fill="#2c5cb4"/></svg>
<svg style="left:300.5px;top:1057px;" width="16" height="16" viewBox="0 0 16 16"><circle cx="8" cy="8" r="7.500" fill="#e4442c"/><path d="M8,8L1,4.500A7.500,7.500 0 0 0 6,15.200z" fill="#3ca43c"/><path d="M8,8L6,15.200A7.500,7.500 0 0 0 15.400,6z" fill="#f4cc2c"/><circle cx="8" cy="8" r="3.200" fill="#4c8ce4" stroke="#fff" stroke-width="1"/></svg>
<svg style="left:323.55px;top:1057px;" width="16" height="16" viewBox="0 0 16 16"><rect x="0.500" y="1.500" width="15" height="13" fill="#9cd4f4" stroke="#e4ecf4"/><path d="M1,14l4,-6l3,4l3,-5l4,7z" fill="#fff"/><path d="M1,14l4,-4l3,3l3,-4l4,5z" fill="#5c9cd4"/></svg>
<svg style="left:346.6px;top:1057px;" width="16" height="16" viewBox="0 0 16 16"><rect x="0.500" y="0.500" width="15" height="15" fill="#f4b42c" stroke="#c47c14"/><rect x="3" y="3" width="10" height="10" fill="#fce49c"/><text x="4.500" y="12.500" font-size="11" font-weight="bold" font-family="Liberation Sans,sans-serif" fill="#e4841c">0</text></svg>
<svg style="left:369.65px;top:1057px;" width="16" height="16" viewBox="0 0 16 16"><circle cx="8" cy="8" r="7" fill="#f4dc14"/><text x="1.500" y="11.500" font-size="9" font-weight="bold" font-family="Liberation Sans,sans-serif" fill="#d4141c">1C</text></svg>
<div style="left:404px;top:1054px;width:160px;height:22px;background:#d4d0c8;border:1px solid;border-color:#fff #404040 #404040 #fff;box-shadow:inset -1px -1px 0 #808080;"></div>
<svg style="left:409px;top:1057px;" width="16" height="16" viewBox="0 0 16 16"><ellipse cx="8" cy="8" rx="6.500" ry="7.500" fill="#d4141c"/><ellipse cx="8" cy="8" rx="2.700" ry="5" fill="#fff"/></svg>
<span class="t" style="top:1057.5px;height:15px;line-height:15px;left:427.5px;letter-spacing:-0.115px;">Волшебный форум - Op...</span>
<div style="left:567px;top:1054px;width:160px;height:22px;background:#d4d0c8;border:1px solid;border-color:#fff #404040 #404040 #fff;box-shadow:inset -1px -1px 0 #808080;"></div>
<svg style="left:572px;top:1057px;" width="16" height="16" viewBox="0 0 16 16"><circle cx="5" cy="10" r="4" fill="#3c74d4"/><circle cx="11" cy="10" r="4" fill="#3c9c3c"/><circle cx="8" cy="5" r="4" fill="#6cc43c"/><circle cx="8" cy="9" r="2.500" fill="#2c5cb4"/></svg>
<span class="t" style="top:1057.5px;height:15px;line-height:15px;left:590.5px;letter-spacing:-0.350px;">NetSupport : SERVERMA</span>
<div style="left:730px;top:1054px;width:160px;height:22px;background:#d4d0c8;border:1px solid;border-color:#fff #404040 #404040 #fff;box-shadow:inset -1px -1px 0 #808080;"></div>
<svg style="left:735px;top:1057px;" width="16" height="16" viewBox="0 0 16 16"><circle cx="5" cy="10" r="4" fill="#3c74d4"/><circle cx="11" cy="10" r="4" fill="#3c9c3c"/><circle cx="8" cy="5" r="4" fill="#6cc43c"/><circle cx="8" cy="9" r="2.500" fill="#2c5cb4"/></svg>
<span class="t" style="top:1057.5px;height:15px;line-height:15px;left:753.5px;letter-spacing:-0.350px;">NetSupport : SERVERMA</span>
<div style="left:893px;top:1054px;width:160px;height:22px;background:#ececea;background-image:repeating-conic-gradient(#fff 0 25%,#d4d0c8 0 50%);background-size:2px 2px;border:1px solid;border-color:#404040 #fff #fff #404040;box-shadow:inset 1px 1px 0 #808080;"></div>
<svg style="left:899px;top:1058px;" width="16" height="16" viewBox="0 0 16 16"><rect width="16" height="16" rx="1" fill="#f2ee22"/><path d="M8,2L2.500,14h11z" fill="none" stroke="#333"/><circle cx="8" cy="2.500" r="1.300" fill="#333"/><path d="M2,14.500h12" stroke="#333" stroke-width="1.400"/></svg>
<span class="t" style="top:1058.5px;height:15px;line-height:15px;left:917.5px;font-weight:bold;letter-spacing:0.463px;">Конфигуратор - Упр...</span>
<div style="left:1056px;top:1054px;width:160px;height:22px;background:#d4d0c8;border:1px solid;border-color:#fff #404040 #404040 #fff;box-shadow:inset -1px -1px 0 #808080;"></div>
<svg style="left:1061px;top:1057px;" width="16" height="16" viewBox="0 0 16 16"><rect x="0" y="0" width="16" height="16" rx="2" fill="#f4dc14"/><text x="1" y="8" font-size="8" font-weight="bold" font-family="Liberation Sans,sans-serif" fill="#d4141c">1C</text><text x="2" y="15" font-size="8" font-family="Liberation Sans,sans-serif" fill="#e4741c">V8</text></svg>
<span class="t" style="top:1057.5px;height:15px;line-height:15px;left:1079.5px;letter-spacing:0.180px;">1С:Предприятие - УТ: ...</span>
<div style="left:1219px;top:1054px;width:160px;height:22px;background:#d4d0c8;border:1px solid;border-color:#fff #404040 #404040 #fff;box-shadow:inset -1px -1px 0 #808080;"></div>
<svg style="left:1224px;top:1057px;" width="16" height="16" viewBox="0 0 16 16"><rect x="4" y="4" width="10" height="11" fill="#f4f4f4" stroke="#444"/><path d="M6,7h6M6,9.500h6M6,12h6" stroke="#888"/><path d="M1,8l5,-6l3,2" fill="#c43c2c" stroke="#444" stroke-width=".7"/><rect x="0" y="9" width="6" height="6" fill="#e4c42c" stroke="#444" stroke-width=".7"/></svg>
<span class="t" style="top:1057.5px;height:15px;line-height:15px;left:1242.5px;letter-spacing:-0.070px;">1CV8 Servers - [Console ...</span>
<div style="left:1638px;top:1055px;width:2px;height:21px;border-left:1px solid #fff;border-right:1px solid #a4a098;"></div>
<div style="left:1649px;top:1058px;width:16px;height:16px;background:#1c2c84;"></div>
<span class="t" style="top:1059px;height:14px;line-height:14px;font-size:10px;color:#fff;left:1651px;letter-spacing:-1.227px;">RU</span>
<div style="left:1669px;top:1055px;width:2px;height:21px;border-left:1px solid #fff;border-right:1px solid #a4a098;"></div>
<div style="left:1676px;top:1054px;width:241px;height:24px;border:1px solid;border-color:#808080 #fff #fff #808080;"></div>
<svg style="left:1680px;top:1058px;" width="16" height="16" viewBox="0 0 16 16"><path d="M8,0l3,4h-6zM8,16l3,-4h-6z" fill="#ece41c"/><path d="M0,8l4,-3v6zM16,8l-4,-3v6z" fill="#2cc42c"/><path d="M3,3l10,10M13,3l-10,10" stroke="#1c2ce4" stroke-width="4"/></svg>
<svg style="left:1698px;top:1058px;" width="16" height="16" viewBox="0 0 16 16"><path d="M7,1q3,2 6,2q0,8 -6,12q-6,-4 -6,-12q3,0 6,-2z" fill="#f4cc1c" stroke="#a4841c"/><rect x="6.300" y="4" width="1.600" height="5" fill="#5c3c0c"/><rect x="6.300" y="10" width="1.600" height="1.600" fill="#5c3c0c"/></svg>
<svg style="left:1715px;top:1058px;" width="16" height="16" viewBox="0 0 16 16"><rect x="6" y="1" width="8" height="7" fill="#5c6cac" stroke="#a4acc4"/><rect x="1" y="6" width="8" height="7" fill="#3c4c8c" stroke="#a4acc4"/><path d="M3,15h6M9,10h4" stroke="#8c94b4" stroke-width="1.500"/></svg>
<svg style="left:1751px;top:1058px;" width="16" height="16" viewBox="0 0 16 16"><rect x="0" y="0" width="16" height="16" rx="1.500" fill="#e4741c"/><path d="M4,11q4,2 8,0M3,13q5,2 10,0" stroke="#fff" fill="none" stroke-width="1.200"/><path d="M8,2q-3,3 0,4q2,1 0,3" stroke="#fff" fill="none" stroke-width="1.300"/></svg>
<svg style="left:1770px;top:1058px;" width="16" height="16" viewBox="0 0 16 16"><path d="M1,4q7,-6 14,0q1,8 -7,11q-8,-3 -7,-11z" fill="#6cc43c"/><path d="M4,8l3,3l5,-6" stroke="#fff" stroke-width="2.200" fill="none"/></svg>
<svg style="left:1787px;top:1058px;" width="16" height="16" viewBox="0 0 16 16"><rect width="16" height="16" fill="#1c8c84"/><circle cx="8" cy="8" r="6" fill="#e4f4ec"/><circle cx="8" cy="8" r="3.500" fill="#2c9c2c"/><circle cx="8" cy="8" r="1.500" fill="#0c3c0c"/></svg>
<svg style="left:1805px;top:1058px;" width="16" height="16" viewBox="0 0 16 16"><rect width="16" height="16" fill="#14148c"/><text x="1" y="12.500" font-size="11" font-family="Liberation Sans,sans-serif" fill="#fff">Ru</text></svg>
<svg style="left:1824px;top:1058px;" width="16" height="16" viewBox="0 0 16 16"><path d="M1,1l5,8" stroke="#d4146c" stroke-width="2.500"/><circle cx="10" cy="11" r="4.500" fill="#fff" stroke="#222"/><path d="M8.500,8.500v5l4,-2.500z" fill="#1ca41c"/></svg>
<svg style="left:1842px;top:1058px;" width="16" height="16" viewBox="0 0 16 16"><rect x="0.500" y="4.500" width="15" height="9" fill="#444" stroke="#222"/><rect x="3" y="2" width="4" height="3" fill="#444"/><rect x="9" y="2" width="4" height="3" fill="#444"/><rect x="2" y="7" width="12" height="3" fill="#d4d4d4"/><circle cx="11" cy="12" r="3" fill="#e4e4e4" stroke="#666"/></svg>
<svg style="left:1860px;top:1058px;" width="16" height="16" viewBox="0 0 16 16"><path d="M0,8q6,-8 16,-4v9q-10,3 -16,-5z" fill="#8cc43c"/><path d="M3,8q4,-4 9,-2v5q-5,1 -9,-3z" fill="none" stroke="#d4ecb4" stroke-width="1.200"/></svg>
<span class="t" style="top:1058.5px;height:15px;line-height:15px;left:1882px;letter-spacing:-0.106px;">13:43</span>
</body></html>
